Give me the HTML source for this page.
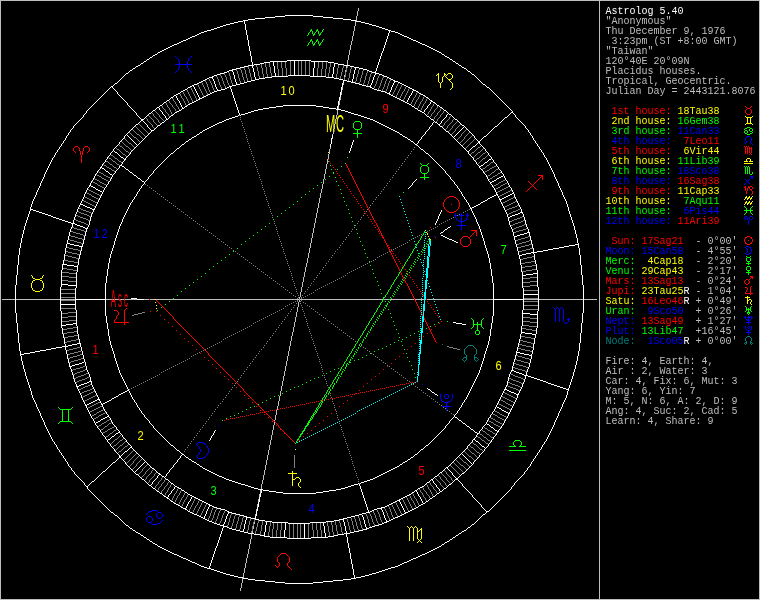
<!DOCTYPE html><html><head><meta charset="utf-8"><title>Astrolog 5.40</title><style>
html,body{margin:0;padding:0;background:#000;overflow:hidden}#w{position:relative;width:760px;height:600px;background:#000;overflow:hidden}svg{position:absolute;left:0;top:0;will-change:transform}#tx{position:absolute;left:0;top:0;width:760px;height:600px;will-change:transform}.t{position:absolute;white-space:pre;font-family:"Liberation Mono",monospace;font-size:10px;line-height:10px;height:10px;font-weight:normal;letter-spacing:0px;transform-origin:0 0;transform:scale(1,1)}
.h{font-family:"Liberation Sans",sans-serif;font-size:12.6px;text-anchor:middle}
.o{font-family:"Liberation Sans",sans-serif;text-anchor:middle}
</style></head><body><div id="w">
<svg width="760" height="600" viewBox="0 0 760 600">
<path transform="translate(0,.5)" fill="none" stroke="#007f7f" stroke-width="1" d="M747 336h3M746 337h1M750 337h1M745 338h1M751 338h1M745 339h1M751 339h1M745 340h1M751 340h1M746 341h1M750 341h1M745 342h2M750 342h2M744 343h1M746 343h1M750 343h1M752 343h1M442 344h1M745 344h1M751 344h1M468 345h5M467 346h1M473 346h1M466 347h1M474 347h1M465 348h1M475 348h1M464 349h1M476 349h1M464 350h1M476 350h1M464 351h1M476 351h1M464 352h1M476 352h1M464 353h1M476 353h1M465 354h1M475 354h1M466 355h1M474 355h1M466 356h1M474 356h1M464 357h3M474 357h3M463 358h1M466 358h1M474 358h1M477 358h1M462 359h1M466 359h1M474 359h1M478 359h1M463 360h1M465 360h1M475 360h1M477 360h1M464 361h1M476 361h1"/>
<path transform="translate(0,.5)" fill="none" stroke="#bfbfbf" stroke-width="1" d="M0 0h760M0 1h1M599 1h1M759 1h1M0 2h1M599 2h1M759 2h1M0 3h1M599 3h1M759 3h1M0 4h1M599 4h1M759 4h1M0 5h1M599 5h1M759 5h1M0 6h1M599 6h1M759 6h1M0 7h1M599 7h1M759 7h1M0 8h1M358 8h1M599 8h1M759 8h1M0 9h1M358 9h1M599 9h1M759 9h1M0 10h1M358 10h1M599 10h1M759 10h1M0 11h1M357 11h1M599 11h1M759 11h1M0 12h1M357 12h1M599 12h1M759 12h1M0 13h1M357 13h1M599 13h1M759 13h1M0 14h1M357 14h1M599 14h1M759 14h1M0 15h1M357 15h1M599 15h1M759 15h1M0 16h1M356 16h1M599 16h1M759 16h1M0 17h1M356 17h1M599 17h1M759 17h1M0 18h1M356 18h1M599 18h1M759 18h1M0 19h1M356 19h1M599 19h1M759 19h1M0 20h1M356 20h1M599 20h1M759 20h1M0 21h1M355 21h1M599 21h1M759 21h1M0 22h1M355 22h1M599 22h1M759 22h1M0 23h1M355 23h1M599 23h1M759 23h1M0 24h1M355 24h1M599 24h1M759 24h1M0 25h1M355 25h1M599 25h1M759 25h1M0 26h1M354 26h1M599 26h1M759 26h1M0 27h1M354 27h1M599 27h1M759 27h1M0 28h1M354 28h1M599 28h1M759 28h1M0 29h1M354 29h1M599 29h1M759 29h1M0 30h1M354 30h1M599 30h1M759 30h1M0 31h1M353 31h1M599 31h1M759 31h1M0 32h1M353 32h1M599 32h1M759 32h1M0 33h1M353 33h1M599 33h1M759 33h1M0 34h1M353 34h1M599 34h1M759 34h1M0 35h1M353 35h1M599 35h1M759 35h1M0 36h1M352 36h1M599 36h1M759 36h1M0 37h1M352 37h1M599 37h1M759 37h1M0 38h1M352 38h1M599 38h1M759 38h1M0 39h1M352 39h1M599 39h1M759 39h1M0 40h1M352 40h1M599 40h1M759 40h1M0 41h1M351 41h1M599 41h1M759 41h1M0 42h1M351 42h1M599 42h1M759 42h1M0 43h1M351 43h1M599 43h1M759 43h1M0 44h1M351 44h1M599 44h1M759 44h1M0 45h1M350 45h1M599 45h1M759 45h1M0 46h1M350 46h1M599 46h1M759 46h1M0 47h1M350 47h1M599 47h1M759 47h1M0 48h1M350 48h1M599 48h1M759 48h1M0 49h1M350 49h1M599 49h1M759 49h1M0 50h1M349 50h1M599 50h1M759 50h1M0 51h1M349 51h1M599 51h1M759 51h1M0 52h1M349 52h1M599 52h1M759 52h1M0 53h1M349 53h1M599 53h1M759 53h1M0 54h1M349 54h1M599 54h1M759 54h1M0 55h1M348 55h1M599 55h1M759 55h1M0 56h1M348 56h1M599 56h1M759 56h1M0 57h1M348 57h1M599 57h1M759 57h1M0 58h1M348 58h1M599 58h1M759 58h1M0 59h1M348 59h1M599 59h1M759 59h1M0 60h1M347 60h1M599 60h1M759 60h1M0 61h1M347 61h1M599 61h1M759 61h1M0 62h1M347 62h1M599 62h1M759 62h1M0 63h1M347 63h1M599 63h1M759 63h1M0 64h1M347 64h1M599 64h1M759 64h1M0 65h1M599 65h1M759 65h1M0 66h1M346 66h1M599 66h1M759 66h1M0 67h1M346 67h1M599 67h1M759 67h1M0 68h1M599 68h1M759 68h1M0 69h1M599 69h1M759 69h1M0 70h1M345 70h1M599 70h1M759 70h1M0 71h1M345 71h1M599 71h1M759 71h1M0 72h1M599 72h1M759 72h1M0 73h1M599 73h1M759 73h1M0 74h1M599 74h1M759 74h1M0 75h1M344 75h1M599 75h1M759 75h1M0 76h1M344 76h1M599 76h1M759 76h1M0 77h1M599 77h1M759 77h1M0 78h1M599 78h1M759 78h1M0 79h1M599 79h1M759 79h1M0 80h1M599 80h1M759 80h1M0 81h1M599 81h1M759 81h1M0 82h1M599 82h1M759 82h1M0 83h1M343 83h1M599 83h1M759 83h1M0 84h1M343 84h1M599 84h1M759 84h1M0 85h1M599 85h1M759 85h1M0 86h1M599 86h1M759 86h1M0 87h1M342 87h1M599 87h1M759 87h1M0 88h1M342 88h1M599 88h1M759 88h1M0 89h1M342 89h1M599 89h1M759 89h1M0 90h1M599 90h1M759 90h1M0 91h1M599 91h1M759 91h1M0 92h1M341 92h1M599 92h1M759 92h1M0 93h1M341 93h1M599 93h1M759 93h1M0 94h1M341 94h1M599 94h1M759 94h1M0 95h1M599 95h1M759 95h1M0 96h1M599 96h1M759 96h1M0 97h1M340 97h1M599 97h1M759 97h1M0 98h1M340 98h1M599 98h1M759 98h1M0 99h1M340 99h1M599 99h1M759 99h1M0 100h1M599 100h1M759 100h1M0 101h1M339 101h1M599 101h1M759 101h1M0 102h1M339 102h1M599 102h1M759 102h1M0 103h1M339 103h1M599 103h1M759 103h1M0 104h1M339 104h1M599 104h1M759 104h1M0 105h1M599 105h1M759 105h1M0 106h1M338 106h1M599 106h1M759 106h1M0 107h1M338 107h1M599 107h1M759 107h1M0 108h1M338 108h1M599 108h1M759 108h1M0 109h1M599 109h1M759 109h1M0 110h1M337 110h1M599 110h1M759 110h1M0 111h1M337 111h1M599 111h1M759 111h1M0 112h1M337 112h1M599 112h1M759 112h1M0 113h1M337 113h1M599 113h1M759 113h1M0 114h1M337 114h1M599 114h1M759 114h1M0 115h1M336 115h1M599 115h1M759 115h1M0 116h1M336 116h1M599 116h1M759 116h1M0 117h1M336 117h1M599 117h1M759 117h1M0 118h1M336 118h1M599 118h1M759 118h1M0 119h1M335 119h1M599 119h1M759 119h1M0 120h1M335 120h1M599 120h1M759 120h1M0 121h1M335 121h1M599 121h1M759 121h1M0 122h1M335 122h1M599 122h1M759 122h1M0 123h1M335 123h1M599 123h1M759 123h1M0 124h1M334 124h1M599 124h1M759 124h1M0 125h1M334 125h1M599 125h1M759 125h1M0 126h1M334 126h1M599 126h1M759 126h1M0 127h1M334 127h1M599 127h1M759 127h1M0 128h1M334 128h1M599 128h1M759 128h1M0 129h1M333 129h1M599 129h1M759 129h1M0 130h1M333 130h1M599 130h1M759 130h1M0 131h1M333 131h1M599 131h1M759 131h1M0 132h1M333 132h1M599 132h1M759 132h1M0 133h1M333 133h1M599 133h1M759 133h1M0 134h1M332 134h1M599 134h1M759 134h1M0 135h1M599 135h1M759 135h1M0 136h1M599 136h1M759 136h1M0 137h1M599 137h1M759 137h1M0 138h1M332 138h1M599 138h1M759 138h1M0 139h1M599 139h1M759 139h1M0 140h1M599 140h1M759 140h1M0 141h1M599 141h1M759 141h1M0 142h1M599 142h1M759 142h1M0 143h1M599 143h1M759 143h1M0 144h1M599 144h1M759 144h1M0 145h1M599 145h1M759 145h1M0 146h1M599 146h1M759 146h1M0 147h1M330 147h1M599 147h1M759 147h1M0 148h1M330 148h1M599 148h1M759 148h1M0 149h1M329 149h1M599 149h1M759 149h1M0 150h1M329 150h1M599 150h1M759 150h1M0 151h1M329 151h1M599 151h1M759 151h1M0 152h1M329 152h1M599 152h1M759 152h1M0 153h1M329 153h1M599 153h1M759 153h1M0 154h1M328 154h1M599 154h1M759 154h1M0 155h1M328 155h1M599 155h1M759 155h1M0 156h1M328 156h1M599 156h1M759 156h1M0 157h1M328 157h1M599 157h1M759 157h1M0 158h1M328 158h1M599 158h1M759 158h1M0 159h1M327 159h1M599 159h1M759 159h1M0 160h1M327 160h1M599 160h1M759 160h1M0 161h1M327 161h1M599 161h1M759 161h1M0 162h1M327 162h1M599 162h1M759 162h1M0 163h1M327 163h1M599 163h1M759 163h1M0 164h1M326 164h1M599 164h1M759 164h1M0 165h1M326 165h1M599 165h1M759 165h1M0 166h1M326 166h1M599 166h1M759 166h1M0 167h1M326 167h1M599 167h1M759 167h1M0 168h1M326 168h1M599 168h1M759 168h1M0 169h1M325 169h1M599 169h1M759 169h1M0 170h1M325 170h1M599 170h1M759 170h1M0 171h1M325 171h1M599 171h1M759 171h1M0 172h1M325 172h1M599 172h1M759 172h1M0 173h1M325 173h1M599 173h1M759 173h1M0 174h1M324 174h1M599 174h1M759 174h1M0 175h1M324 175h1M599 175h1M759 175h1M0 176h1M324 176h1M599 176h1M759 176h1M0 177h1M324 177h1M599 177h1M759 177h1M0 178h1M324 178h1M599 178h1M759 178h1M0 179h1M323 179h1M599 179h1M759 179h1M0 180h1M323 180h1M599 180h1M759 180h1M0 181h1M323 181h1M599 181h1M759 181h1M0 182h1M323 182h1M599 182h1M759 182h1M0 183h1M323 183h1M599 183h1M759 183h1M0 184h1M322 184h1M599 184h1M759 184h1M0 185h1M322 185h1M599 185h1M759 185h1M0 186h1M322 186h1M599 186h1M759 186h1M0 187h1M322 187h1M599 187h1M759 187h1M0 188h1M322 188h1M599 188h1M759 188h1M0 189h1M321 189h1M599 189h1M759 189h1M0 190h1M321 190h1M599 190h1M759 190h1M0 191h1M321 191h1M599 191h1M759 191h1M0 192h1M321 192h1M599 192h1M759 192h1M0 193h1M320 193h1M599 193h1M759 193h1M0 194h1M320 194h1M599 194h1M759 194h1M0 195h1M320 195h1M599 195h1M759 195h1M0 196h1M320 196h1M599 196h1M759 196h1M0 197h1M320 197h1M599 197h1M759 197h1M0 198h1M319 198h1M599 198h1M759 198h1M0 199h1M319 199h1M599 199h1M759 199h1M0 200h1M319 200h1M599 200h1M759 200h1M0 201h1M319 201h1M599 201h1M759 201h1M0 202h1M319 202h1M599 202h1M759 202h1M0 203h1M318 203h1M599 203h1M759 203h1M0 204h1M318 204h1M599 204h1M759 204h1M0 205h1M318 205h1M599 205h1M759 205h1M0 206h1M318 206h1M599 206h1M759 206h1M0 207h1M318 207h1M599 207h1M759 207h1M0 208h1M317 208h1M599 208h1M759 208h1M0 209h1M317 209h1M599 209h1M759 209h1M0 210h1M317 210h1M599 210h1M759 210h1M0 211h1M317 211h1M599 211h1M759 211h1M0 212h1M317 212h1M599 212h1M759 212h1M0 213h1M316 213h1M599 213h1M759 213h1M0 214h1M316 214h1M599 214h1M759 214h1M0 215h1M316 215h1M599 215h1M759 215h1M0 216h1M316 216h1M599 216h1M759 216h1M0 217h1M316 217h1M599 217h1M759 217h1M0 218h1M315 218h1M599 218h1M759 218h1M0 219h1M315 219h1M599 219h1M759 219h1M0 220h1M315 220h1M599 220h1M759 220h1M0 221h1M315 221h1M599 221h1M759 221h1M0 222h1M315 222h1M599 222h1M759 222h1M0 223h1M314 223h1M599 223h1M759 223h1M0 224h1M314 224h1M599 224h1M759 224h1M0 225h1M314 225h1M599 225h1M759 225h1M0 226h1M314 226h1M599 226h1M759 226h1M0 227h1M314 227h1M599 227h1M759 227h1M0 228h1M313 228h1M599 228h1M759 228h1M0 229h1M313 229h1M599 229h1M759 229h1M0 230h1M313 230h1M599 230h1M759 230h1M0 231h1M313 231h1M599 231h1M759 231h1M0 232h1M313 232h1M599 232h1M759 232h1M0 233h1M312 233h1M599 233h1M759 233h1M0 234h1M312 234h1M599 234h1M759 234h1M0 235h1M312 235h1M599 235h1M759 235h1M0 236h1M312 236h1M599 236h1M759 236h1M0 237h1M312 237h1M599 237h1M759 237h1M0 238h1M311 238h1M599 238h1M759 238h1M0 239h1M311 239h1M599 239h1M759 239h1M0 240h1M311 240h1M599 240h1M759 240h1M0 241h1M311 241h1M599 241h1M759 241h1M0 242h1M311 242h1M599 242h1M759 242h1M0 243h1M310 243h1M599 243h1M759 243h1M0 244h1M310 244h1M599 244h1M759 244h1M0 245h1M310 245h1M599 245h1M759 245h1M0 246h1M310 246h1M599 246h1M759 246h1M0 247h1M310 247h1M599 247h1M759 247h1M0 248h1M309 248h1M599 248h1M759 248h1M0 249h1M309 249h1M599 249h1M759 249h1M0 250h1M309 250h1M599 250h1M759 250h1M0 251h1M309 251h1M599 251h1M759 251h1M0 252h1M309 252h1M599 252h1M759 252h1M0 253h1M308 253h1M599 253h1M759 253h1M0 254h1M308 254h1M599 254h1M759 254h1M0 255h1M308 255h1M599 255h1M759 255h1M0 256h1M308 256h1M599 256h1M759 256h1M0 257h1M308 257h1M599 257h1M759 257h1M0 258h1M307 258h1M599 258h1M759 258h1M0 259h1M307 259h1M599 259h1M759 259h1M0 260h1M307 260h1M599 260h1M759 260h1M0 261h1M307 261h1M599 261h1M759 261h1M0 262h1M307 262h1M599 262h1M759 262h1M0 263h1M306 263h1M599 263h1M759 263h1M0 264h1M306 264h1M599 264h1M759 264h1M0 265h1M306 265h1M599 265h1M759 265h1M0 266h1M306 266h1M599 266h1M759 266h1M0 267h1M305 267h1M599 267h1M759 267h1M0 268h1M305 268h1M599 268h1M759 268h1M0 269h1M305 269h1M599 269h1M759 269h1M0 270h1M305 270h1M599 270h1M759 270h1M0 271h1M305 271h1M599 271h1M759 271h1M0 272h1M304 272h1M599 272h1M759 272h1M0 273h1M304 273h1M599 273h1M759 273h1M0 274h1M304 274h1M599 274h1M759 274h1M0 275h1M304 275h1M599 275h1M759 275h1M0 276h1M304 276h1M599 276h1M759 276h1M0 277h1M303 277h1M599 277h1M759 277h1M0 278h1M303 278h1M599 278h1M759 278h1M0 279h1M303 279h1M599 279h1M759 279h1M0 280h1M303 280h1M599 280h1M759 280h1M0 281h1M303 281h1M599 281h1M759 281h1M0 282h1M302 282h1M599 282h1M759 282h1M0 283h1M302 283h1M599 283h1M759 283h1M0 284h1M302 284h1M599 284h1M759 284h1M0 285h1M302 285h1M599 285h1M759 285h1M0 286h1M302 286h1M599 286h1M759 286h1M0 287h1M301 287h1M599 287h1M759 287h1M0 288h1M301 288h1M599 288h1M759 288h1M0 289h1M301 289h1M599 289h1M759 289h1M0 290h1M301 290h1M599 290h1M759 290h1M0 291h1M301 291h1M599 291h1M759 291h1M0 292h1M300 292h1M599 292h1M759 292h1M0 293h1M300 293h1M599 293h1M759 293h1M0 294h1M300 294h1M599 294h1M759 294h1M0 295h1M300 295h1M599 295h1M759 295h1M0 296h1M300 296h1M599 296h1M759 296h1M0 297h1M299 297h1M599 297h1M759 297h1M0 298h1M299 298h1M599 298h1M759 298h1M0 299h1M2 299h13M16 299h44M61 299h14M106 299h31M144 299h5M150 299h5M156 299h143M300 299h83M384 299h5M390 299h24M415 299h9M427 299h66M524 299h14M539 299h44M584 299h13M599 299h1M759 299h1M0 300h1M299 300h1M599 300h1M759 300h1M0 301h1M299 301h1M599 301h1M759 301h1M0 302h1M298 302h1M599 302h1M759 302h1M0 303h1M298 303h1M599 303h1M759 303h1M0 304h1M298 304h1M599 304h1M759 304h1M0 305h1M298 305h1M599 305h1M759 305h1M0 306h1M298 306h1M599 306h1M759 306h1M0 307h1M297 307h1M599 307h1M759 307h1M0 308h1M297 308h1M599 308h1M759 308h1M0 309h1M297 309h1M599 309h1M759 309h1M0 310h1M297 310h1M599 310h1M759 310h1M0 311h1M297 311h1M599 311h1M759 311h1M0 312h1M296 312h1M599 312h1M759 312h1M0 313h1M296 313h1M599 313h1M759 313h1M0 314h1M296 314h1M599 314h1M759 314h1M0 315h1M296 315h1M599 315h1M759 315h1M0 316h1M296 316h1M599 316h1M759 316h1M0 317h1M295 317h1M599 317h1M759 317h1M0 318h1M295 318h1M599 318h1M759 318h1M0 319h1M295 319h1M599 319h1M759 319h1M0 320h1M295 320h1M599 320h1M759 320h1M0 321h1M295 321h1M599 321h1M759 321h1M0 322h1M294 322h1M599 322h1M759 322h1M0 323h1M294 323h1M599 323h1M759 323h1M0 324h1M294 324h1M599 324h1M759 324h1M0 325h1M294 325h1M599 325h1M759 325h1M0 326h1M294 326h1M599 326h1M759 326h1M0 327h1M293 327h1M599 327h1M759 327h1M0 328h1M293 328h1M599 328h1M759 328h1M0 329h1M293 329h1M599 329h1M759 329h1M0 330h1M293 330h1M599 330h1M759 330h1M0 331h1M293 331h1M599 331h1M759 331h1M0 332h1M292 332h1M599 332h1M759 332h1M0 333h1M292 333h1M599 333h1M759 333h1M0 334h1M292 334h1M599 334h1M759 334h1M0 335h1M292 335h1M599 335h1M759 335h1M0 336h1M291 336h1M599 336h1M759 336h1M0 337h1M291 337h1M599 337h1M759 337h1M0 338h1M291 338h1M599 338h1M759 338h1M0 339h1M291 339h1M599 339h1M759 339h1M0 340h1M291 340h1M599 340h1M759 340h1M0 341h1M290 341h1M599 341h1M759 341h1M0 342h1M290 342h1M599 342h1M759 342h1M0 343h1M290 343h1M599 343h1M759 343h1M0 344h1M290 344h1M599 344h1M759 344h1M0 345h1M290 345h1M599 345h1M759 345h1M0 346h1M289 346h1M599 346h1M759 346h1M0 347h1M289 347h1M599 347h1M759 347h1M0 348h1M289 348h1M599 348h1M759 348h1M0 349h1M289 349h1M599 349h1M759 349h1M0 350h1M289 350h1M599 350h1M759 350h1M0 351h1M288 351h1M599 351h1M759 351h1M0 352h1M288 352h1M599 352h1M759 352h1M0 353h1M288 353h1M599 353h1M759 353h1M0 354h1M288 354h1M599 354h1M759 354h1M0 355h1M288 355h1M599 355h1M759 355h1M0 356h1M287 356h1M599 356h1M759 356h1M0 357h1M287 357h1M599 357h1M759 357h1M0 358h1M287 358h1M599 358h1M759 358h1M0 359h1M287 359h1M599 359h1M759 359h1M0 360h1M287 360h1M599 360h1M759 360h1M0 361h1M286 361h1M599 361h1M759 361h1M0 362h1M286 362h1M599 362h1M759 362h1M0 363h1M286 363h1M599 363h1M759 363h1M0 364h1M286 364h1M599 364h1M759 364h1M0 365h1M286 365h1M599 365h1M759 365h1M0 366h1M285 366h1M599 366h1M759 366h1M0 367h1M285 367h1M599 367h1M759 367h1M0 368h1M285 368h1M599 368h1M759 368h1M0 369h1M285 369h1M599 369h1M759 369h1M0 370h1M285 370h1M599 370h1M759 370h1M0 371h1M284 371h1M599 371h1M759 371h1M0 372h1M284 372h1M599 372h1M759 372h1M0 373h1M284 373h1M599 373h1M759 373h1M0 374h1M284 374h1M599 374h1M759 374h1M0 375h1M284 375h1M599 375h1M759 375h1M0 376h1M283 376h1M599 376h1M759 376h1M0 377h1M283 377h1M599 377h1M759 377h1M0 378h1M283 378h1M599 378h1M759 378h1M0 379h1M283 379h1M599 379h1M759 379h1M0 380h1M283 380h1M599 380h1M759 380h1M0 381h1M282 381h1M599 381h1M759 381h1M0 382h1M282 382h1M599 382h1M759 382h1M0 383h1M282 383h1M599 383h1M759 383h1M0 384h1M282 384h1M599 384h1M759 384h1M0 385h1M282 385h1M599 385h1M759 385h1M0 386h1M281 386h1M599 386h1M759 386h1M0 387h1M281 387h1M599 387h1M759 387h1M0 388h1M281 388h1M599 388h1M759 388h1M0 389h1M281 389h1M599 389h1M759 389h1M0 390h1M281 390h1M599 390h1M759 390h1M0 391h1M280 391h1M599 391h1M759 391h1M0 392h1M280 392h1M599 392h1M759 392h1M0 393h1M280 393h1M599 393h1M759 393h1M0 394h1M280 394h1M599 394h1M759 394h1M0 395h1M280 395h1M599 395h1M759 395h1M0 396h1M279 396h1M599 396h1M759 396h1M0 397h1M279 397h1M599 397h1M759 397h1M0 398h1M279 398h1M599 398h1M759 398h1M0 399h1M279 399h1M599 399h1M759 399h1M0 400h1M279 400h1M599 400h1M759 400h1M0 401h1M278 401h1M599 401h1M759 401h1M0 402h1M278 402h1M599 402h1M759 402h1M0 403h1M278 403h1M599 403h1M759 403h1M0 404h1M278 404h1M599 404h1M759 404h1M0 405h1M278 405h1M599 405h1M759 405h1M0 406h1M277 406h1M599 406h1M759 406h1M0 407h1M277 407h1M599 407h1M759 407h1M0 408h1M277 408h1M599 408h1M759 408h1M0 409h1M277 409h1M599 409h1M759 409h1M0 410h1M276 410h1M599 410h1M759 410h1M0 411h1M276 411h1M599 411h1M759 411h1M0 412h1M276 412h1M599 412h1M759 412h1M0 413h1M276 413h1M599 413h1M759 413h1M0 414h1M276 414h1M599 414h1M759 414h1M0 415h1M275 415h1M599 415h1M759 415h1M0 416h1M275 416h1M599 416h1M759 416h1M0 417h1M275 417h1M599 417h1M759 417h1M0 418h1M275 418h1M599 418h1M759 418h1M0 419h1M275 419h1M599 419h1M759 419h1M0 420h1M274 420h1M599 420h1M759 420h1M0 421h1M599 421h1M759 421h1M0 422h1M274 422h1M599 422h1M759 422h1M0 423h1M274 423h1M599 423h1M759 423h1M0 424h1M274 424h1M599 424h1M759 424h1M0 425h1M273 425h1M599 425h1M759 425h1M0 426h1M273 426h1M599 426h1M759 426h1M0 427h1M273 427h1M599 427h1M759 427h1M0 428h1M273 428h1M599 428h1M759 428h1M0 429h1M273 429h1M599 429h1M759 429h1M0 430h1M272 430h1M599 430h1M759 430h1M0 431h1M272 431h1M599 431h1M759 431h1M0 432h1M272 432h1M599 432h1M759 432h1M0 433h1M272 433h1M599 433h1M759 433h1M0 434h1M272 434h1M599 434h1M759 434h1M0 435h1M271 435h1M599 435h1M759 435h1M0 436h1M271 436h1M599 436h1M759 436h1M0 437h1M271 437h1M599 437h1M759 437h1M0 438h1M271 438h1M599 438h1M759 438h1M0 439h1M271 439h1M599 439h1M759 439h1M0 440h1M270 440h1M599 440h1M759 440h1M0 441h1M270 441h1M599 441h1M759 441h1M0 442h1M270 442h1M599 442h1M759 442h1M0 443h1M270 443h1M599 443h1M759 443h1M0 444h1M270 444h1M599 444h1M759 444h1M0 445h1M269 445h1M599 445h1M759 445h1M0 446h1M269 446h1M599 446h1M759 446h1M0 447h1M269 447h1M599 447h1M759 447h1M0 448h1M269 448h1M599 448h1M759 448h1M0 449h1M269 449h1M599 449h1M759 449h1M0 450h1M268 450h1M599 450h1M759 450h1M0 451h1M268 451h1M599 451h1M759 451h1M0 452h1M268 452h1M599 452h1M759 452h1M0 453h1M268 453h1M599 453h1M759 453h1M0 454h1M268 454h1M599 454h1M759 454h1M0 455h1M267 455h1M599 455h1M759 455h1M0 456h1M267 456h1M599 456h1M759 456h1M0 457h1M267 457h1M599 457h1M759 457h1M0 458h1M267 458h1M599 458h1M759 458h1M0 459h1M267 459h1M599 459h1M759 459h1M0 460h1M266 460h1M599 460h1M759 460h1M0 461h1M266 461h1M599 461h1M759 461h1M0 462h1M266 462h1M599 462h1M759 462h1M0 463h1M266 463h1M599 463h1M759 463h1M0 464h1M266 464h1M599 464h1M759 464h1M0 465h1M265 465h1M599 465h1M759 465h1M0 466h1M265 466h1M599 466h1M759 466h1M0 467h1M265 467h1M599 467h1M759 467h1M0 468h1M265 468h1M599 468h1M759 468h1M0 469h1M265 469h1M599 469h1M759 469h1M0 470h1M264 470h1M599 470h1M759 470h1M0 471h1M264 471h1M599 471h1M759 471h1M0 472h1M264 472h1M599 472h1M759 472h1M0 473h1M264 473h1M599 473h1M759 473h1M0 474h1M264 474h1M599 474h1M759 474h1M0 475h1M263 475h1M599 475h1M759 475h1M0 476h1M263 476h1M599 476h1M759 476h1M0 477h1M263 477h1M599 477h1M759 477h1M0 478h1M263 478h1M599 478h1M759 478h1M0 479h1M263 479h1M599 479h1M759 479h1M0 480h1M262 480h1M599 480h1M759 480h1M0 481h1M262 481h1M599 481h1M759 481h1M0 482h1M262 482h1M599 482h1M759 482h1M0 483h1M262 483h1M599 483h1M759 483h1M0 484h1M261 484h1M599 484h1M759 484h1M0 485h1M261 485h1M599 485h1M759 485h1M0 486h1M261 486h1M599 486h1M759 486h1M0 487h1M261 487h1M599 487h1M759 487h1M0 488h1M261 488h1M599 488h1M759 488h1M0 489h1M599 489h1M759 489h1M0 490h1M260 490h1M599 490h1M759 490h1M0 491h1M260 491h1M599 491h1M759 491h1M0 492h1M260 492h1M599 492h1M759 492h1M0 493h1M599 493h1M759 493h1M0 494h1M259 494h1M599 494h1M759 494h1M0 495h1M259 495h1M599 495h1M759 495h1M0 496h1M259 496h1M599 496h1M759 496h1M0 497h1M599 497h1M759 497h1M0 498h1M599 498h1M759 498h1M0 499h1M258 499h1M599 499h1M759 499h1M0 500h1M258 500h1M599 500h1M759 500h1M0 501h1M258 501h1M599 501h1M759 501h1M0 502h1M599 502h1M759 502h1M0 503h1M599 503h1M759 503h1M0 504h1M257 504h1M599 504h1M759 504h1M0 505h1M257 505h1M599 505h1M759 505h1M0 506h1M257 506h1M599 506h1M759 506h1M0 507h1M599 507h1M759 507h1M0 508h1M599 508h1M759 508h1M0 509h1M256 509h1M599 509h1M759 509h1M0 510h1M256 510h1M599 510h1M759 510h1M0 511h1M599 511h1M759 511h1M0 512h1M599 512h1M759 512h1M0 513h1M599 513h1M759 513h1M0 514h1M255 514h1M599 514h1M759 514h1M0 515h1M255 515h1M599 515h1M759 515h1M0 516h1M599 516h1M759 516h1M0 517h1M599 517h1M759 517h1M0 518h1M599 518h1M759 518h1M0 519h1M599 519h1M759 519h1M0 520h1M599 520h1M759 520h1M0 521h1M599 521h1M759 521h1M0 522h1M254 522h1M599 522h1M759 522h1M0 523h1M254 523h1M599 523h1M759 523h1M0 524h1M599 524h1M759 524h1M0 525h1M599 525h1M759 525h1M0 526h1M253 526h1M599 526h1M759 526h1M0 527h1M253 527h1M599 527h1M759 527h1M0 528h1M253 528h1M599 528h1M759 528h1M0 529h1M599 529h1M759 529h1M0 530h1M599 530h1M759 530h1M0 531h1M252 531h1M599 531h1M759 531h1M0 532h1M252 532h1M599 532h1M759 532h1M0 533h1M599 533h1M759 533h1M0 534h1M251 534h1M599 534h1M759 534h1M0 535h1M251 535h1M599 535h1M759 535h1M0 536h1M251 536h1M599 536h1M759 536h1M0 537h1M251 537h1M599 537h1M759 537h1M0 538h1M251 538h1M599 538h1M759 538h1M0 539h1M250 539h1M599 539h1M759 539h1M0 540h1M250 540h1M599 540h1M759 540h1M0 541h1M250 541h1M599 541h1M759 541h1M0 542h1M250 542h1M599 542h1M759 542h1M0 543h1M250 543h1M599 543h1M759 543h1M0 544h1M249 544h1M599 544h1M759 544h1M0 545h1M249 545h1M599 545h1M759 545h1M0 546h1M249 546h1M599 546h1M759 546h1M0 547h1M249 547h1M599 547h1M759 547h1M0 548h1M249 548h1M599 548h1M759 548h1M0 549h1M248 549h1M599 549h1M759 549h1M0 550h1M248 550h1M599 550h1M759 550h1M0 551h1M248 551h1M599 551h1M759 551h1M0 552h1M248 552h1M599 552h1M759 552h1M0 553h1M248 553h1M599 553h1M759 553h1M0 554h1M247 554h1M599 554h1M759 554h1M0 555h1M247 555h1M599 555h1M759 555h1M0 556h1M247 556h1M599 556h1M759 556h1M0 557h1M247 557h1M599 557h1M759 557h1M0 558h1M246 558h1M599 558h1M759 558h1M0 559h1M246 559h1M599 559h1M759 559h1M0 560h1M246 560h1M599 560h1M759 560h1M0 561h1M246 561h1M599 561h1M759 561h1M0 562h1M246 562h1M599 562h1M759 562h1M0 563h1M245 563h1M599 563h1M759 563h1M0 564h1M245 564h1M599 564h1M759 564h1M0 565h1M245 565h1M599 565h1M759 565h1M0 566h1M245 566h1M599 566h1M759 566h1M0 567h1M245 567h1M599 567h1M759 567h1M0 568h1M244 568h1M599 568h1M759 568h1M0 569h1M244 569h1M599 569h1M759 569h1M0 570h1M244 570h1M599 570h1M759 570h1M0 571h1M244 571h1M599 571h1M759 571h1M0 572h1M244 572h1M599 572h1M759 572h1M0 573h1M243 573h1M599 573h1M759 573h1M0 574h1M243 574h1M599 574h1M759 574h1M0 575h1M243 575h1M599 575h1M759 575h1M0 576h1M243 576h1M599 576h1M759 576h1M0 577h1M243 577h1M599 577h1M759 577h1M0 578h1M242 578h1M599 578h1M759 578h1M0 579h1M242 579h1M599 579h1M759 579h1M0 580h1M242 580h1M599 580h1M759 580h1M0 581h1M242 581h1M599 581h1M759 581h1M0 582h1M242 582h1M599 582h1M759 582h1M0 583h1M241 583h1M599 583h1M759 583h1M0 584h1M241 584h1M599 584h1M759 584h1M0 585h1M241 585h1M599 585h1M759 585h1M0 586h1M241 586h1M599 586h1M759 586h1M0 587h1M241 587h1M599 587h1M759 587h1M0 588h1M240 588h1M599 588h1M759 588h1M0 589h1M240 589h1M599 589h1M759 589h1M0 590h1M240 590h1M599 590h1M759 590h1M0 591h1M599 591h1M759 591h1M0 592h1M599 592h1M759 592h1M0 593h1M599 593h1M759 593h1M0 594h1M599 594h1M759 594h1M0 595h1M599 595h1M759 595h1M0 596h1M599 596h1M759 596h1M0 597h1M599 597h1M759 597h1M0 598h1M599 598h1M759 598h1M0 599h760"/>
<path transform="translate(0,.5)" fill="none" stroke="#7f7f7f" stroke-width="1" d="M290 61h1M298 61h1M301 61h1M305 61h1M309 61h1M277 62h1M281 62h1M285 62h1M290 62h1M298 62h1M301 62h1M305 62h1M309 62h1M318 62h1M322 62h1M326 62h1M265 63h1M269 63h1M277 63h1M281 63h1M285 63h1M290 63h1M298 63h1M301 63h1M305 63h1M309 63h1M318 63h1M322 63h1M326 63h1M330 63h1M261 64h1M265 64h1M269 64h1M277 64h1M281 64h1M285 64h1M290 64h1M298 64h1M301 64h1M305 64h1M309 64h1M318 64h1M322 64h1M326 64h1M330 64h1M256 65h1M261 65h1M265 65h1M269 65h1M277 65h1M281 65h1M285 65h1M290 65h1M298 65h1M301 65h1M305 65h1M309 65h1M318 65h1M322 65h1M326 65h1M330 65h1M338 65h1M343 65h1M248 66h1M256 66h1M261 66h1M265 66h1M269 66h1M277 66h1M281 66h1M285 66h1M290 66h1M298 66h1M301 66h1M305 66h1M309 66h1M318 66h1M322 66h1M326 66h1M330 66h1M338 66h1M343 66h1M347 66h1M244 67h1M248 67h1M257 67h1M261 67h1M266 67h1M270 67h1M277 67h1M281 67h1M285 67h1M290 67h1M298 67h1M301 67h1M305 67h1M309 67h1M318 67h1M322 67h1M326 67h1M329 67h1M338 67h1M343 67h1M347 67h1M351 67h1M240 68h1M244 68h1M248 68h1M257 68h1M262 68h1M266 68h1M270 68h1M277 68h1M282 68h1M286 68h1M290 68h1M298 68h1M301 68h1M305 68h1M309 68h1M317 68h1M322 68h1M326 68h1M329 68h1M337 68h1M342 68h1M346 68h1M351 68h1M236 69h1M240 69h1M244 69h1M249 69h1M257 69h1M262 69h1M266 69h1M270 69h1M278 69h1M282 69h1M286 69h1M290 69h1M298 69h1M301 69h1M305 69h1M309 69h1M317 69h1M321 69h1M325 69h1M329 69h1M337 69h1M342 69h1M346 69h1M350 69h1M359 69h1M236 70h1M241 70h1M245 70h1M249 70h1M257 70h1M262 70h1M266 70h1M270 70h1M278 70h1M282 70h1M286 70h1M290 70h1M298 70h1M301 70h1M305 70h1M309 70h1M317 70h1M321 70h1M325 70h1M329 70h1M337 70h1M342 70h1M346 70h1M350 70h1M358 70h1M363 70h1M237 71h1M241 71h1M245 71h1M249 71h1M258 71h1M262 71h1M266 71h1M270 71h1M278 71h1M282 71h1M286 71h1M290 71h1M298 71h1M301 71h1M305 71h1M309 71h1M317 71h1M321 71h1M325 71h1M329 71h1M337 71h1M342 71h1M346 71h1M350 71h1M358 71h1M362 71h1M367 71h1M228 72h1M237 72h1M241 72h1M245 72h1M249 72h1M258 72h1M262 72h1M266 72h1M270 72h1M278 72h1M282 72h1M286 72h1M290 72h1M298 72h1M301 72h1M305 72h1M309 72h1M317 72h1M321 72h1M325 72h1M329 72h1M337 72h1M341 72h1M345 72h1M350 72h1M358 72h1M362 72h1M367 72h1M371 72h1M224 73h1M229 73h1M237 73h1M242 73h1M245 73h1M250 73h1M258 73h1M262 73h1M266 73h1M271 73h1M278 73h1M282 73h1M286 73h1M290 73h1M298 73h1M301 73h1M305 73h1M309 73h1M317 73h1M321 73h1M325 73h1M328 73h1M337 73h1M341 73h1M345 73h1M349 73h1M358 73h1M362 73h1M366 73h1M371 73h1M220 74h1M224 74h1M229 74h1M238 74h1M242 74h1M246 74h1M250 74h1M258 74h1M263 74h1M267 74h1M271 74h1M278 74h1M282 74h1M286 74h1M290 74h1M298 74h1M301 74h1M305 74h1M309 74h1M317 74h1M321 74h1M325 74h1M328 74h1M336 74h1M341 74h1M345 74h1M349 74h1M357 74h1M362 74h1M366 74h1M370 74h1M220 75h1M225 75h1M229 75h1M238 75h1M242 75h1M246 75h1M250 75h1M258 75h1M263 75h1M267 75h1M271 75h1M278 75h1M282 75h1M286 75h1M317 75h1M321 75h1M325 75h1M328 75h1M336 75h1M341 75h1M345 75h1M349 75h1M357 75h1M361 75h1M366 75h1M370 75h1M379 75h1M216 76h1M221 76h1M225 76h1M230 76h1M238 76h1M242 76h1M246 76h1M250 76h1M259 76h1M263 76h1M267 76h1M271 76h1M328 76h1M336 76h1M340 76h1M345 76h1M349 76h1M357 76h1M361 76h1M365 76h1M370 76h1M378 76h1M383 76h1M217 77h1M221 77h1M226 77h1M230 77h1M238 77h1M243 77h1M246 77h1M251 77h1M259 77h1M263 77h1M336 77h1M340 77h1M344 77h1M349 77h1M356 77h1M361 77h1M365 77h1M369 77h1M378 77h1M383 77h1M217 78h1M222 78h1M226 78h1M230 78h1M239 78h1M243 78h1M247 78h1M251 78h1M340 78h1M344 78h1M348 78h1M356 78h1M360 78h1M365 78h1M369 78h1M377 78h1M382 78h1M387 78h1M209 79h1M218 79h1M222 79h1M226 79h1M230 79h1M239 79h1M243 79h1M247 79h1M251 79h1M344 79h1M348 79h1M356 79h1M360 79h1M365 79h1M369 79h1M377 79h1M382 79h1M386 79h1M390 79h1M205 80h1M209 80h1M218 80h1M222 80h1M227 80h1M231 80h1M239 80h1M244 80h1M247 80h1M348 80h1M356 80h1M360 80h1M364 80h1M369 80h1M377 80h1M381 80h1M386 80h1M390 80h1M205 81h1M210 81h1M218 81h1M223 81h1M227 81h1M231 81h1M240 81h1M244 81h1M355 81h1M360 81h1M364 81h1M368 81h1M376 81h1M381 81h1M385 81h1M389 81h1M201 82h1M206 82h1M210 82h1M219 82h1M223 82h1M227 82h1M231 82h1M240 82h1M355 82h1M359 82h1M364 82h1M368 82h1M376 82h1M381 82h1M385 82h1M389 82h1M202 83h1M206 83h1M211 83h1M219 83h1M223 83h1M228 83h1M232 83h1M359 83h1M363 83h1M368 83h1M376 83h1M380 83h1M385 83h1M388 83h1M398 83h1M197 84h1M202 84h1M207 84h1M211 84h1M219 84h1M224 84h1M228 84h1M232 84h1M363 84h1M367 84h1M375 84h1M380 84h1M384 84h1M388 84h1M397 84h1M198 85h1M203 85h1M207 85h1M212 85h1M220 85h1M224 85h1M229 85h1M367 85h1M375 85h1M380 85h1M384 85h1M388 85h1M397 85h1M401 85h1M198 86h1M203 86h1M207 86h1M212 86h1M220 86h1M225 86h1M374 86h1M379 86h1M384 86h1M387 86h1M396 86h1M401 86h1M190 87h1M199 87h1M204 87h1M208 87h1M212 87h1M221 87h1M225 87h1M374 87h1M379 87h1M383 87h1M387 87h1M396 87h1M400 87h1M405 87h1M191 88h1M199 88h1M204 88h1M208 88h1M213 88h1M221 88h1M378 88h1M383 88h1M387 88h1M395 88h1M400 88h1M405 88h1M409 88h1M191 89h1M200 89h1M205 89h1M208 89h1M213 89h1M378 89h1M382 89h1M386 89h1M395 89h1M399 89h1M404 89h1M408 89h1M187 90h1M192 90h1M200 90h1M205 90h1M209 90h1M214 90h1M382 90h1M386 90h1M394 90h1M399 90h1M404 90h1M408 90h1M187 91h1M192 91h1M201 91h1M206 91h1M209 91h1M385 91h1M394 91h1M398 91h1M403 91h1M407 91h1M183 92h1M188 92h1M193 92h1M201 92h1M206 92h1M210 92h1M393 92h1M398 92h1M402 92h1M407 92h1M417 92h1M183 93h1M188 93h1M193 93h1M202 93h1M207 93h1M393 93h1M397 93h1M402 93h1M406 93h1M416 93h1M180 94h1M184 94h1M189 94h1M194 94h1M202 94h1M207 94h1M392 94h1M397 94h1M401 94h1M406 94h1M416 94h1M420 94h1M180 95h1M184 95h1M189 95h1M194 95h1M203 95h1M396 95h1M401 95h1M405 95h1M415 95h1M419 95h1M181 96h1M185 96h1M190 96h1M195 96h1M203 96h1M396 96h1M400 96h1M405 96h1M415 96h1M419 96h1M424 96h1M181 97h1M186 97h1M190 97h1M195 97h1M400 97h1M404 97h1M414 97h1M418 97h1M423 97h1M172 98h1M182 98h1M186 98h1M191 98h1M196 98h1M399 98h1M404 98h1M413 98h1M418 98h1M423 98h1M427 98h1M173 99h1M183 99h1M187 99h1M191 99h1M196 99h1M403 99h1M413 99h1M417 99h1M422 99h1M426 99h1M173 100h1M183 100h1M187 100h1M192 100h1M403 100h1M412 100h1M416 100h1M422 100h1M426 100h1M169 101h1M174 101h1M184 101h1M188 101h1M192 101h1M412 101h1M416 101h1M421 101h1M425 101h1M169 102h1M175 102h1M184 102h1M188 102h1M411 102h1M415 102h1M420 102h1M425 102h1M166 103h1M170 103h1M175 103h1M185 103h1M189 103h1M411 103h1M415 103h1M420 103h1M424 103h1M434 103h1M166 104h1M171 104h1M176 104h1M185 104h1M414 104h1M419 104h1M423 104h1M433 104h1M167 105h1M172 105h1M176 105h1M186 105h1M414 105h1M419 105h1M423 105h1M433 105h1M162 106h1M167 106h1M172 106h1M177 106h1M418 106h1M422 106h1M432 106h1M437 106h1M162 107h1M168 107h1M173 107h1M178 107h1M418 107h1M422 107h1M431 107h1M437 107h1M163 108h1M169 108h1M174 108h1M178 108h1M417 108h1M421 108h1M431 108h1M436 108h1M441 108h1M164 109h1M169 109h1M175 109h1M179 109h1M421 109h1M430 109h1M435 109h1M440 109h1M165 110h1M170 110h1M175 110h1M420 110h1M430 110h1M434 110h1M440 110h1M155 111h1M165 111h1M170 111h1M176 111h1M429 111h1M434 111h1M439 111h1M443 111h1M156 112h1M166 112h1M171 112h1M428 112h1M433 112h1M438 112h1M443 112h1M152 113h1M157 113h1M167 113h1M171 113h1M428 113h1M432 113h1M437 113h1M442 113h1M153 114h1M158 114h1M168 114h1M172 114h1M427 114h1M431 114h1M437 114h1M441 114h1M148 115h1M153 115h1M159 115h1M168 115h1M239 115h1M431 115h1M436 115h1M440 115h1M149 116h1M154 116h1M159 116h1M169 116h1M430 116h1M435 116h1M440 116h1M450 116h1M150 117h1M155 117h1M160 117h1M240 117h1M434 117h1M439 117h1M449 117h1M146 118h1M151 118h1M156 118h1M161 118h1M434 118h1M438 118h1M449 118h1M147 119h1M152 119h1M157 119h1M162 119h1M240 119h1M433 119h1M437 119h1M448 119h1M453 119h1M147 120h1M153 120h1M158 120h1M163 120h1M437 120h1M447 120h1M452 120h1M148 121h1M153 121h1M158 121h1M241 121h1M436 121h1M446 121h1M452 121h1M457 121h1M149 122h1M154 122h1M159 122h1M445 122h1M451 122h1M456 122h1M150 123h1M155 123h1M160 123h1M242 123h1M444 123h1M450 123h1M455 123h1M139 124h1M151 124h1M156 124h1M444 124h1M449 124h1M454 124h1M460 124h1M140 125h1M152 125h1M157 125h1M242 125h1M443 125h1M448 125h1M453 125h1M459 125h1M135 126h1M141 126h1M152 126h1M442 126h1M447 126h1M452 126h1M458 126h1M136 127h1M142 127h1M153 127h1M243 127h1M447 127h1M452 127h1M457 127h1M137 128h1M143 128h1M154 128h1M446 128h1M451 128h1M456 128h1M132 129h1M138 129h1M144 129h1M244 129h1M445 129h1M450 129h1M455 129h1M466 129h1M133 130h1M139 130h1M145 130h1M449 130h1M455 130h1M465 130h1M134 131h1M140 131h1M146 131h1M244 131h1M448 131h1M454 131h1M464 131h1M129 132h1M135 132h1M141 132h1M147 132h1M453 132h1M463 132h1M469 132h1M130 133h1M136 133h1M142 133h1M148 133h1M245 133h1M452 133h1M462 133h1M468 133h1M131 134h1M137 134h2M143 134h1M451 134h1M461 134h1M467 134h1M132 135h1M139 135h1M144 135h1M246 135h1M461 135h1M466 135h1M472 135h1M133 136h1M140 136h1M145 136h1M460 136h1M465 136h1M471 136h1M134 137h2M141 137h1M246 137h1M459 137h1M464 137h1M470 137h1M124 138h1M136 138h1M142 138h1M458 138h1M464 138h1M469 138h1M125 139h1M137 139h1M247 139h1M457 139h1M463 139h1M468 139h1M474 139h1M126 140h1M138 140h1M462 140h1M467 140h1M473 140h1M121 141h1M127 141h1M139 141h1M247 141h1M461 141h1M466 141h1M472 141h1M122 142h1M128 142h1M460 142h1M465 142h1M471 142h1M123 143h1M129 143h2M248 143h1M464 143h1M470 143h1M124 144h1M131 144h1M463 144h1M469 144h1M119 145h1M125 145h1M132 145h1M249 145h1M416 145h1M462 145h1M468 145h1M120 146h2M126 146h2M133 146h1M467 146h1M480 146h1M122 147h1M128 147h1M134 147h1M249 147h1M414 147h1M466 147h1M478 147h2M116 148h1M123 148h1M129 148h1M465 148h1M477 148h1M483 148h1M117 149h2M124 149h1M130 149h1M250 149h1M413 149h1M476 149h1M482 149h1M119 150h1M125 150h1M131 150h1M475 150h1M481 150h1M120 151h1M126 151h2M251 151h1M411 151h1M474 151h1M480 151h1M121 152h1M128 152h1M472 152h2M478 152h2M485 152h1M122 153h1M129 153h1M251 153h1M410 153h1M471 153h1M477 153h1M483 153h2M123 154h2M470 154h1M476 154h1M482 154h1M111 155h2M125 155h1M252 155h1M408 155h1M475 155h1M481 155h1M487 155h1M113 156h1M126 156h1M474 156h1M480 156h1M486 156h1M108 157h1M114 157h1M253 157h1M407 157h1M473 157h1M479 157h1M485 157h1M109 158h2M115 158h2M477 158h2M483 158h2M111 159h1M117 159h1M253 159h1M405 159h1M476 159h1M482 159h1M112 160h1M118 160h1M475 160h1M481 160h1M106 161h2M113 161h2M119 161h2M254 161h1M404 161h1M480 161h1M108 162h1M115 162h1M121 162h1M479 162h1M491 162h2M109 163h1M116 163h1M255 163h1M402 163h1M478 163h1M490 163h1M103 164h1M110 164h2M117 164h2M489 164h1M104 165h2M112 165h1M119 165h1M255 165h1M401 165h1M487 165h2M106 166h1M113 166h1M486 166h1M494 166h2M107 167h2M114 167h2M256 167h1M399 167h1M485 167h1M492 167h2M109 168h2M116 168h1M483 168h2M490 168h2M111 169h1M257 169h1M398 169h1M482 169h1M489 169h1M496 169h2M112 170h2M487 170h2M495 170h1M98 171h1M114 171h1M257 171h1M396 171h1M485 171h2M494 171h1M99 172h2M484 172h1M492 172h2M500 172h1M101 173h2M258 173h1M395 173h1M491 173h1M498 173h2M96 174h1M103 174h1M490 174h1M497 174h1M97 175h2M104 175h2M259 175h1M393 175h1M488 175h2M495 175h2M99 176h2M106 176h2M487 176h1M493 176h2M101 177h1M108 177h2M259 177h1M392 177h1M492 177h1M94 178h1M102 178h2M110 178h1M490 178h2M95 179h2M104 179h2M260 179h1M390 179h1M489 179h1M97 180h2M106 180h2M503 180h2M92 181h1M99 181h1M108 181h1M261 181h1M389 181h1M501 181h2M93 182h2M100 182h2M499 182h2M95 183h2M102 183h2M261 183h1M387 183h1M498 183h1M505 183h2M97 184h1M104 184h2M145 184h1M496 184h2M503 184h2M98 185h2M147 185h1M262 185h1M386 185h1M494 185h2M501 185h2M100 186h2M493 186h1M500 186h1M508 186h1M102 187h2M149 187h1M262 187h1M384 187h1M498 187h2M506 187h2M151 188h1M496 188h2M504 188h2M88 189h1M263 189h1M383 189h1M495 189h1M502 189h2M89 190h2M153 190h1M500 190h2M510 190h2M91 191h2M155 191h1M264 191h1M381 191h1M498 191h2M508 191h2M86 192h1M93 192h2M497 192h1M506 192h2M87 193h2M95 193h2M157 193h1M264 193h1M380 193h1M504 193h2M89 194h2M97 194h2M159 194h1M502 194h2M91 195h1M99 195h2M265 195h1M378 195h1M500 195h2M92 196h2M161 196h1M499 196h1M85 197h2M94 197h2M163 197h1M266 197h1M376 197h1M513 197h2M87 198h2M96 198h2M511 198h2M89 199h2M98 199h1M165 199h1M266 199h1M375 199h1M509 199h2M83 200h1M91 200h2M167 200h1M507 200h2M84 201h2M93 201h2M267 201h1M373 201h1M505 201h2M515 201h2M86 202h2M95 202h2M169 202h1M503 202h2M513 202h2M88 203h2M171 203h1M268 203h1M372 203h1M502 203h1M511 203h2M90 204h2M509 204h2M92 205h2M173 205h1M268 205h1M370 205h1M507 205h2M517 205h2M94 206h1M175 206h1M505 206h2M515 206h2M269 207h1M369 207h1M504 207h1M512 207h3M79 208h2M177 208h1M509 208h3M81 209h2M179 209h1M270 209h1M367 209h1M469 209h1M507 209h2M518 209h2M83 210h3M467 210h1M506 210h1M516 210h2M78 211h1M86 211h3M181 211h1M270 211h1M366 211h1M465 211h1M513 211h3M79 212h2M89 212h2M183 212h1M463 212h1M511 212h2M81 213h3M91 213h1M271 213h1M364 213h1M509 213h2M84 214h3M185 214h1M459 214h1M508 214h1M76 215h2M87 215h2M187 215h1M272 215h1M363 215h1M457 215h1M78 216h2M89 216h2M522 216h1M80 217h3M189 217h1M272 217h1M361 217h1M453 217h1M520 217h2M83 218h3M191 218h1M451 218h1M517 218h3M75 219h1M86 219h2M360 219h1M449 219h1M514 219h3M76 220h2M88 220h2M193 220h1M447 220h1M512 220h2M523 220h2M78 221h3M195 221h1M274 221h1M358 221h1M445 221h1M510 221h2M521 221h2M81 222h3M443 222h1M518 222h3M84 223h2M197 223h1M274 223h1M357 223h1M441 223h1M515 223h3M86 224h2M199 224h1M439 224h1M513 224h2M524 224h2M275 225h1M355 225h1M511 225h2M522 225h2M201 226h1M437 226h1M519 226h3M72 227h2M203 227h1M276 227h1M354 227h1M435 227h1M516 227h3M74 228h3M433 228h1M514 228h2M526 228h1M77 229h4M205 229h1M276 229h1M352 229h1M431 229h1M513 229h1M523 229h3M81 230h3M207 230h1M429 230h1M519 230h4M71 231h2M84 231h2M277 231h1M351 231h1M427 231h1M516 231h3M73 232h3M209 232h1M514 232h2M76 233h4M211 233h1M277 233h1M349 233h1M80 234h3M421 234h1M70 235h1M83 235h2M213 235h1M278 235h1M348 235h1M419 235h1M71 236h4M215 236h1M417 236h1M528 236h2M75 237h3M279 237h1M346 237h1M415 237h1M525 237h3M78 238h4M217 238h1M521 238h4M69 239h1M82 239h2M219 239h1M279 239h1M345 239h1M411 239h1M518 239h3M70 240h4M409 240h1M516 240h2M529 240h2M74 241h3M221 241h1M280 241h1M343 241h1M526 241h3M77 242h4M223 242h1M407 242h1M522 242h4M81 243h2M281 243h1M342 243h1M405 243h1M519 243h3M225 244h1M403 244h1M517 244h2M529 244h3M227 245h1M281 245h1M340 245h1M401 245h1M525 245h4M399 246h1M521 246h4M67 247h2M229 247h1M282 247h1M339 247h1M397 247h1M518 247h3M69 248h4M231 248h1M395 248h1M530 248h3M73 249h5M283 249h1M337 249h1M393 249h1M526 249h4M78 250h3M233 250h1M391 250h1M522 250h4M66 251h2M235 251h1M283 251h1M335 251h1M389 251h1M519 251h3M68 252h4M387 252h1M72 253h5M237 253h1M284 253h1M334 253h1M385 253h1M77 254h3M239 254h1M383 254h1M65 255h3M285 255h1M332 255h1M381 255h1M68 256h4M241 256h1M379 256h1M532 256h2M72 257h4M243 257h1M285 257h1M331 257h1M377 257h1M527 257h5M76 258h3M523 258h4M245 259h1M286 259h1M329 259h1M375 259h1M521 259h2M64 260h4M247 260h1M373 260h1M68 261h6M287 261h1M328 261h1M371 261h1M531 261h4M74 262h4M249 262h1M369 262h1M525 262h6M251 263h1M287 263h1M326 263h1M367 263h1M521 263h4M365 264h1M253 265h1M288 265h1M325 265h1M363 265h1M532 265h4M255 266h1M361 266h1M525 266h7M289 267h1M323 267h1M359 267h1M522 267h3M63 268h4M257 268h1M357 268h1M67 269h6M259 269h1M289 269h1M322 269h1M355 269h1M532 269h4M73 270h4M353 270h1M526 270h6M261 271h1M290 271h1M320 271h1M351 271h1M522 271h4M62 272h7M263 272h1M349 272h1M69 273h7M291 273h1M319 273h1M347 273h1M265 274h1M267 275h1M291 275h1M317 275h1M345 275h1M62 276h7M343 276h1M69 277h7M269 277h1M292 277h1M316 277h1M341 277h1M530 277h7M271 278h1M339 278h1M523 278h7M292 279h1M314 279h1M337 279h1M62 280h6M273 280h1M335 280h1M68 281h8M275 281h1M293 281h1M313 281h1M333 281h1M530 281h7M331 282h1M523 282h7M277 283h1M294 283h1M311 283h1M329 283h1M279 284h1M327 284h1M294 285h1M310 285h1M325 285h1M530 285h7M281 286h1M323 286h1M523 286h7M283 287h1M295 287h1M308 287h1M321 287h1M319 288h1M61 289h14M285 289h1M296 289h1M307 289h1M317 289h1M287 290h1M315 290h1M524 290h14M296 291h1M305 291h1M289 292h1M313 292h1M61 293h14M291 293h1M297 293h1M304 293h1M311 293h1M309 294h1M293 295h1M298 295h1M302 295h1M307 295h1M295 296h1M305 296h1M61 297h14M298 297h1M301 297h1M303 297h1M297 298h1M301 298h1M524 298h14M299 299h1M61 300h14M297 300h1M301 300h1M295 301h1M297 301h1M300 301h1M524 301h14M293 302h1M303 302h1M291 303h1M296 303h1M300 303h1M305 303h1M289 304h1M287 305h1M294 305h1M301 305h1M307 305h1M524 305h14M285 306h1M309 306h1M293 307h1M302 307h1M61 308h14M283 308h1M311 308h1M281 309h1M291 309h1M302 309h1M313 309h1M524 309h14M279 310h1M277 311h1M290 311h1M303 311h1M315 311h1M68 312h8M142 312h3M275 312h1M317 312h1M62 313h6M138 313h4M273 313h1M288 313h1M304 313h1M134 314h4M271 314h1M319 314h1M132 315h2M269 315h1M287 315h1M304 315h1M321 315h1M68 316h8M267 316h1M62 317h6M265 317h1M285 317h1M305 317h1M323 317h1M523 317h7M263 318h1M325 318h1M530 318h7M261 319h1M284 319h1M306 319h1M69 320h7M259 320h1M327 320h1M62 321h7M257 321h1M282 321h1M306 321h1M329 321h1M523 321h7M255 322h1M530 322h7M253 323h1M281 323h1M307 323h1M331 323h1M333 324h1M251 325h1M279 325h1M307 325h1M523 325h6M249 326h1M335 326h1M529 326h8M73 327h4M247 327h1M278 327h1M308 327h1M337 327h1M67 328h6M245 328h1M522 328h4M63 329h4M243 329h1M276 329h1M309 329h1M339 329h1M526 329h6M241 330h1M341 330h1M532 330h4M74 331h3M239 331h1M275 331h1M309 331h1M67 332h7M237 332h1M343 332h1M63 333h4M235 333h1M273 333h1M310 333h1M345 333h1M233 334h1M74 335h4M231 335h1M272 335h1M311 335h1M347 335h1M68 336h6M229 336h1M349 336h1M521 336h4M64 337h4M227 337h1M270 337h1M311 337h1M525 337h6M225 338h1M351 338h1M531 338h3M76 339h3M223 339h1M269 339h1M312 339h1M353 339h1M71 340h5M520 340h3M67 341h4M221 341h1M267 341h1M313 341h1M355 341h1M523 341h4M65 342h2M219 342h1M527 342h4M217 343h1M266 343h1M313 343h1M531 343h3M215 344h1M359 344h1M519 344h3M213 345h1M264 345h1M314 345h1M361 345h1M522 345h4M211 346h1M447 346h2M526 346h5M77 347h3M209 347h1M263 347h1M315 347h1M363 347h1M449 347h4M531 347h2M73 348h4M207 348h1M365 348h1M453 348h4M518 348h3M69 349h4M205 349h1M261 349h1M315 349h1M457 349h3M521 349h4M67 350h2M203 350h1M367 350h1M525 350h5M78 351h3M201 351h1M259 351h1M316 351h1M369 351h1M530 351h2M74 352h4M199 352h1M70 353h4M197 353h1M258 353h1M317 353h1M371 353h1M68 354h2M80 354h2M195 354h1M373 354h1M77 355h3M193 355h1M256 355h1M317 355h1M516 355h2M73 356h4M191 356h1M375 356h1M518 356h4M70 357h3M255 357h1M318 357h1M377 357h1M522 357h3M68 358h2M81 358h2M189 358h1M525 358h4M78 359h3M187 359h1M253 359h1M319 359h1M379 359h1M515 359h2M529 359h1M74 360h4M185 360h1M381 360h1M517 360h4M71 361h3M183 361h1M252 361h1M319 361h1M521 361h3M69 362h2M181 362h1M383 362h1M524 362h4M179 363h1M250 363h1M320 363h1M385 363h1M514 363h2M528 363h1M177 364h1M516 364h3M175 365h1M249 365h1M321 365h1M387 365h1M519 365h4M83 366h2M173 366h1M389 366h1M523 366h3M80 367h3M171 367h1M247 367h1M321 367h1M513 367h2M526 367h2M76 368h4M169 368h1M391 368h1M515 368h3M73 369h3M85 369h1M167 369h1M246 369h1M322 369h1M393 369h1M518 369h4M72 370h1M83 370h2M165 370h1M522 370h3M80 371h3M163 371h1M244 371h1M322 371h1M395 371h1M525 371h2M77 372h3M161 372h1M397 372h1M75 373h2M86 373h2M243 373h1M323 373h1M73 374h2M84 374h2M159 374h1M399 374h1M511 374h2M81 375h3M157 375h1M241 375h1M324 375h1M401 375h1M513 375h2M78 376h3M155 376h1M515 376h3M76 377h2M87 377h2M153 377h1M240 377h1M324 377h1M403 377h1M518 377h3M74 378h2M85 378h2M151 378h1M405 378h1M509 378h2M521 378h2M82 379h3M149 379h1M238 379h1M325 379h1M511 379h2M523 379h1M79 380h3M147 380h1M407 380h1M513 380h3M77 381h2M145 381h1M237 381h1M326 381h1M409 381h1M516 381h3M76 382h1M143 382h1M508 382h2M519 382h2M141 383h1M235 383h1M326 383h1M411 383h1M510 383h2M521 383h2M90 384h1M139 384h1M413 384h1M512 384h3M88 385h2M137 385h1M234 385h1M327 385h1M507 385h1M515 385h3M85 386h3M135 386h1M415 386h1M508 386h2M518 386h2M83 387h2M133 387h1M232 387h1M328 387h1M417 387h1M510 387h3M520 387h1M81 388h2M92 388h1M131 388h1M513 388h3M79 389h2M90 389h2M129 389h1M231 389h1M419 389h1M516 389h2M87 390h3M421 390h1M518 390h2M84 391h3M93 391h2M229 391h1M82 392h2M91 392h2M423 392h1M504 392h1M81 393h1M89 393h2M228 393h1M330 393h1M425 393h1M505 393h2M87 394h2M507 394h2M85 395h2M95 395h2M226 395h1M330 395h1M427 395h1M509 395h2M83 396h2M93 396h2M429 396h1M502 396h1M511 396h2M82 397h1M91 397h2M225 397h1M331 397h1M503 397h2M513 397h2M89 398h2M431 398h1M505 398h2M515 398h1M87 399h2M223 399h1M332 399h1M433 399h1M500 399h1M507 399h2M85 400h2M501 400h2M509 400h2M84 401h1M222 401h1M332 401h1M435 401h1M503 401h2M511 401h2M98 402h2M437 402h1M505 402h1M513 402h1M96 403h2M220 403h1M333 403h1M498 403h1M506 403h2M94 404h2M439 404h1M499 404h2M508 404h2M92 405h2M218 405h1M334 405h1M441 405h1M501 405h2M510 405h2M90 406h2M100 406h2M503 406h2M88 407h2M98 407h2M217 407h1M334 407h1M443 407h1M505 407h2M96 408h2M445 408h1M507 408h2M94 409h2M103 409h1M215 409h1M335 409h1M509 409h2M92 410h2M101 410h2M447 410h1M90 411h2M99 411h2M214 411h1M336 411h1M449 411h1M495 411h2M97 412h2M105 412h1M497 412h2M96 413h1M103 413h2M212 413h1M336 413h1M451 413h1M499 413h1M94 414h2M101 414h2M453 414h1M493 414h2M500 414h2M92 415h2M99 415h2M211 415h1M337 415h1M495 415h2M502 415h2M98 416h1M497 416h1M504 416h2M96 417h2M209 417h1M337 417h1M490 417h1M498 417h2M506 417h1M94 418h2M491 418h2M500 418h2M109 419h1M208 419h1M338 419h1M493 419h2M502 419h2M107 420h2M488 420h1M495 420h1M504 420h1M106 421h1M206 421h1M489 421h2M496 421h2M104 422h2M111 422h1M491 422h2M498 422h2M102 423h2M109 423h2M205 423h1M339 423h1M493 423h1M500 423h2M101 424h1M108 424h1M494 424h2M502 424h1M99 425h2M107 425h1M203 425h1M340 425h1M496 425h2M98 426h1M105 426h2M114 426h1M498 426h2M104 427h1M112 427h2M202 427h1M341 427h1M484 427h1M500 427h1M103 428h1M110 428h2M485 428h2M101 429h2M108 429h2M116 429h1M200 429h1M341 429h1M487 429h1M107 430h1M114 430h2M482 430h1M488 430h2M105 431h2M113 431h1M199 431h1M342 431h1M483 431h2M490 431h2M103 432h2M112 432h1M485 432h1M492 432h1M110 433h2M197 433h1M343 433h1M479 433h1M486 433h1M493 433h2M109 434h1M480 434h2M487 434h2M495 434h1M108 435h1M120 435h1M196 435h1M343 435h1M482 435h1M489 435h1M106 436h2M119 436h1M477 436h1M483 436h1M490 436h1M118 437h1M194 437h1M344 437h1M478 437h2M484 437h2M491 437h2M117 438h1M123 438h1M480 438h1M486 438h1M115 439h2M122 439h1M193 439h1M345 439h1M481 439h1M487 439h1M114 440h1M120 440h2M482 440h2M488 440h2M113 441h1M119 441h1M125 441h1M191 441h1M345 441h1M484 441h1M490 441h1M112 442h1M118 442h1M124 442h1M472 442h1M485 442h1M111 443h1M117 443h1M123 443h1M190 443h1M346 443h1M473 443h1M486 443h2M116 444h1M122 444h1M128 444h1M474 444h2M114 445h2M120 445h2M127 445h1M188 445h1M347 445h1M469 445h1M476 445h1M113 446h1M119 446h1M125 446h2M470 446h1M477 446h1M118 447h1M124 447h1M187 447h1M347 447h1M471 447h2M478 447h1M117 448h1M123 448h1M467 448h1M473 448h1M479 448h1M116 449h1M122 449h1M185 449h1M348 449h1M468 449h1M474 449h1M480 449h2M115 450h1M121 450h1M133 450h1M469 450h1M475 450h1M482 450h1M119 451h2M132 451h1M184 451h1M349 451h1M464 451h1M470 451h1M476 451h1M118 452h1M131 452h1M465 452h1M471 452h1M477 452h2M130 453h1M136 453h1M182 453h1M349 453h1M466 453h1M472 453h2M479 453h1M129 454h1M135 454h1M467 454h1M474 454h1M128 455h1M134 455h1M294 455h1M350 455h1M468 455h1M475 455h1M127 456h1M133 456h1M138 456h1M294 456h1M469 456h2M476 456h1M126 457h1M132 457h1M137 457h1M294 457h1M351 457h1M459 457h1M471 457h1M477 457h1M125 458h1M131 458h1M136 458h1M294 458h1M460 458h1M472 458h1M124 459h1M130 459h1M135 459h1M141 459h1M294 459h1M351 459h1M461 459h1M473 459h1M129 460h1M134 460h1M140 460h1M294 460h1M456 460h1M462 460h1M474 460h1M128 461h1M133 461h1M139 461h1M294 461h1M352 461h1M457 461h1M463 461h1M127 462h1M133 462h1M138 462h1M294 462h1M453 462h1M458 462h1M464 462h2M126 463h1M132 463h1M137 463h1M294 463h1M352 463h1M454 463h1M459 463h1M466 463h1M131 464h1M136 464h1M147 464h1M294 464h1M455 464h1M460 464h1M467 464h1M130 465h1M136 465h1M146 465h1M294 465h1M353 465h1M450 465h1M456 465h1M461 465h2M468 465h1M129 466h1M135 466h1M145 466h1M294 466h1M451 466h1M457 466h1M463 466h1M469 466h1M134 467h1M144 467h1M150 467h1M294 467h1M354 467h1M452 467h1M458 467h1M464 467h1M133 468h1M143 468h1M149 468h1M453 468h1M459 468h1M465 468h1M132 469h1M142 469h1M148 469h1M153 469h1M354 469h1M454 469h1M460 469h1M466 469h1M142 470h1M147 470h1M152 470h1M444 470h1M455 470h1M461 470h1M141 471h1M146 471h1M151 471h1M355 471h1M445 471h1M456 471h1M462 471h1M140 472h1M145 472h1M151 472h1M156 472h1M446 472h1M457 472h1M463 472h1M139 473h1M145 473h1M150 473h1M155 473h1M356 473h1M441 473h1M446 473h1M458 473h1M138 474h1M144 474h1M149 474h1M154 474h1M442 474h1M447 474h1M459 474h1M143 475h1M148 475h1M154 475h1M356 475h1M438 475h1M443 475h1M448 475h1M142 476h1M147 476h1M153 476h1M439 476h1M444 476h1M449 476h1M141 477h1M146 477h1M152 477h1M162 477h1M357 477h1M440 477h1M445 477h1M450 477h1M146 478h1M151 478h1M161 478h1M435 478h1M440 478h1M446 478h1M451 478h1M145 479h1M150 479h1M161 479h1M165 479h1M358 479h1M436 479h1M441 479h1M446 479h1M451 479h1M149 480h1M160 480h1M164 480h1M437 480h1M442 480h1M447 480h1M452 480h1M149 481h1M159 481h1M164 481h1M358 481h1M438 481h1M443 481h1M448 481h1M148 482h1M158 482h1M163 482h1M168 482h1M429 482h1M439 482h1M444 482h1M449 482h1M158 483h1M162 483h1M167 483h1M359 483h1M430 483h1M440 483h1M445 483h1M450 483h1M157 484h1M161 484h1M167 484h1M171 484h1M426 484h1M430 484h1M440 484h1M445 484h1M156 485h1M161 485h1M166 485h1M170 485h1M427 485h1M431 485h1M441 485h1M446 485h1M155 486h1M160 486h1M165 486h1M170 486h1M427 486h1M432 486h1M442 486h1M155 487h1M159 487h1M164 487h1M169 487h1M422 487h1M428 487h1M433 487h1M443 487h1M158 488h1M164 488h1M168 488h1M178 488h1M423 488h1M428 488h1M433 488h1M158 489h1M163 489h1M168 489h1M177 489h1M419 489h1M423 489h1M429 489h1M434 489h1M157 490h1M162 490h1M167 490h1M177 490h1M181 490h1M420 490h1M424 490h1M430 490h1M435 490h1M161 491h1M167 491h1M176 491h1M180 491h1M420 491h1M425 491h1M430 491h1M436 491h1M161 492h1M166 492h1M176 492h1M180 492h1M421 492h1M426 492h1M431 492h1M436 492h1M165 493h1M175 493h1M179 493h1M184 493h1M412 493h1M422 493h1M426 493h1M431 493h1M165 494h1M174 494h1M179 494h1M184 494h1M413 494h1M422 494h1M427 494h1M432 494h1M164 495h1M174 495h1M178 495h1M183 495h1M187 495h1M409 495h1M413 495h1M423 495h1M428 495h1M432 495h1M173 496h1M177 496h1M183 496h1M187 496h1M410 496h1M414 496h1M423 496h1M429 496h1M173 497h1M177 497h1M182 497h1M186 497h1M406 497h1M410 497h1M414 497h1M424 497h1M429 497h1M172 498h1M176 498h1M181 498h1M186 498h1M195 498h1M407 498h1M411 498h1M415 498h1M425 498h1M172 499h1M176 499h1M181 499h1M185 499h1M194 499h1M402 499h1M407 499h1M411 499h1M416 499h1M425 499h1M171 500h1M175 500h1M180 500h1M184 500h1M194 500h1M199 500h1M403 500h1M408 500h1M412 500h1M416 500h1M426 500h1M175 501h1M180 501h1M184 501h1M193 501h1M198 501h1M403 501h1M408 501h1M413 501h1M417 501h1M174 502h1M179 502h1M183 502h1M193 502h1M198 502h1M202 502h1M395 502h1M404 502h1M409 502h1M413 502h1M417 502h1M179 503h1M183 503h1M192 503h1M197 503h1M201 503h1M396 503h1M404 503h1M409 503h1M414 503h1M418 503h1M178 504h1M182 504h1M192 504h1M197 504h1M201 504h1M206 504h1M391 504h1M396 504h1M405 504h1M410 504h1M414 504h1M418 504h1M182 505h1M191 505h1M196 505h1M200 505h1M205 505h1M392 505h1M397 505h1M405 505h1M410 505h1M415 505h1M181 506h1M191 506h1M195 506h1M200 506h1M205 506h1M388 506h1M392 506h1M397 506h1M406 506h1M411 506h1M415 506h1M190 507h1M195 507h1M199 507h1M204 507h1M213 507h1M389 507h1M393 507h1M398 507h1M406 507h1M411 507h1M190 508h1M194 508h1M199 508h1M204 508h1M212 508h1M216 508h1M384 508h1M389 508h1M393 508h1M398 508h1M407 508h1M412 508h1M189 509h1M194 509h1M198 509h1M203 509h1M212 509h1M216 509h1M220 509h1M385 509h1M390 509h1M394 509h1M399 509h1M407 509h1M189 510h1M193 510h1M198 510h1M203 510h1M211 510h1M215 510h1M220 510h1M377 510h1M385 510h1M390 510h1M394 510h1M399 510h1M408 510h1M193 511h1M197 511h1M202 511h1M211 511h1M215 511h1M219 511h1M224 511h1M373 511h1M377 511h1M386 511h1M390 511h1M395 511h1M400 511h1M192 512h1M197 512h1M202 512h1M211 512h1M214 512h1M219 512h1M224 512h1M373 512h1M378 512h1M386 512h1M391 512h1M395 512h1M400 512h1M196 513h1M201 513h1M210 513h1M214 513h1M218 513h1M223 513h1M231 513h1M369 513h1M374 513h1M378 513h1M387 513h1M391 513h1M396 513h1M401 513h1M201 514h1M210 514h1M214 514h1M218 514h1M223 514h1M231 514h1M235 514h1M366 514h1M370 514h1M374 514h1M379 514h1M387 514h1M391 514h1M396 514h1M401 514h1M200 515h1M210 515h1M213 515h1M218 515h1M222 515h1M230 515h1M235 515h1M239 515h1M366 515h1M370 515h1M375 515h1M379 515h1M387 515h1M392 515h1M397 515h1M209 516h1M213 516h1M217 516h1M222 516h1M230 516h1M234 516h1M239 516h1M243 516h1M358 516h1M367 516h1M371 516h1M375 516h1M379 516h1M388 516h1M392 516h1M397 516h1M209 517h1M213 517h1M217 517h1M222 517h1M230 517h1M234 517h1M238 517h1M243 517h1M354 517h1M358 517h1M367 517h1M371 517h1M375 517h1M380 517h1M388 517h1M393 517h1M208 518h1M212 518h1M217 518h1M221 518h1M229 518h1M234 518h1M238 518h1M242 518h1M250 518h1M351 518h1M354 518h1M359 518h1M367 518h1M371 518h1M376 518h1M380 518h1M389 518h1M208 519h1M212 519h1M216 519h1M221 519h1M229 519h1M233 519h1M238 519h1M242 519h1M250 519h1M254 519h1M347 519h1M351 519h1M355 519h1M359 519h1M368 519h1M372 519h1M376 519h1M380 519h1M389 519h1M211 520h1M216 520h1M221 520h1M229 520h1M233 520h1M238 520h1M242 520h1M250 520h1M254 520h1M258 520h1M339 520h1M347 520h1M351 520h1M355 520h1M359 520h1M368 520h1M372 520h1M376 520h1M381 520h1M215 521h1M220 521h1M229 521h1M233 521h1M237 521h1M242 521h1M249 521h1M254 521h1M258 521h1M262 521h1M335 521h1M339 521h1M347 521h1M352 521h1M355 521h1M360 521h1M368 521h1M372 521h1M377 521h1M381 521h1M215 522h1M220 522h1M228 522h1M233 522h1M237 522h1M241 522h1M249 522h1M253 522h1M258 522h1M262 522h1M270 522h1M327 522h1M331 522h1M335 522h1M339 522h1M348 522h1M352 522h1M356 522h1M360 522h1M368 522h1M373 522h1M377 522h1M382 522h1M219 523h1M228 523h1M232 523h1M237 523h1M241 523h1M249 523h1M253 523h1M257 523h1M262 523h1M270 523h1M273 523h1M277 523h1M281 523h1M312 523h1M316 523h1M320 523h1M327 523h1M331 523h1M335 523h1M340 523h1M348 523h1M352 523h1M356 523h1M360 523h1M369 523h1M373 523h1M378 523h1M228 524h1M232 524h1M236 524h1M241 524h1M249 524h1M253 524h1M257 524h1M262 524h1M270 524h1M273 524h1M277 524h1M281 524h1M289 524h1M293 524h1M297 524h1M300 524h1M308 524h1M312 524h1M316 524h1M320 524h1M327 524h1M331 524h1M335 524h1M340 524h1M348 524h1M352 524h1M356 524h1M360 524h1M369 524h1M374 524h1M378 524h1M227 525h1M232 525h1M236 525h1M240 525h1M248 525h1M253 525h1M257 525h1M261 525h1M270 525h1M273 525h1M277 525h1M281 525h1M289 525h1M293 525h1M297 525h1M300 525h1M308 525h1M312 525h1M316 525h1M320 525h1M327 525h1M332 525h1M336 525h1M340 525h1M348 525h1M353 525h1M356 525h1M361 525h1M369 525h1M374 525h1M227 526h1M231 526h1M236 526h1M240 526h1M248 526h1M252 526h1M257 526h1M261 526h1M269 526h1M273 526h1M277 526h1M281 526h1M289 526h1M293 526h1M297 526h1M300 526h1M308 526h1M312 526h1M316 526h1M320 526h1M328 526h1M332 526h1M336 526h1M340 526h1M349 526h1M353 526h1M357 526h1M361 526h1M370 526h1M231 527h1M236 527h1M240 527h1M248 527h1M252 527h1M256 527h1M261 527h1M269 527h1M273 527h1M277 527h1M281 527h1M289 527h1M293 527h1M297 527h1M300 527h1M308 527h1M312 527h1M316 527h1M320 527h1M328 527h1M332 527h1M336 527h1M341 527h1M349 527h1M353 527h1M357 527h1M361 527h1M235 528h1M240 528h1M248 528h1M252 528h1M256 528h1M261 528h1M269 528h1M273 528h1M277 528h1M281 528h1M289 528h1M293 528h1M297 528h1M300 528h1M308 528h1M312 528h1M316 528h1M320 528h1M328 528h1M332 528h1M336 528h1M341 528h1M349 528h1M353 528h1M357 528h1M362 528h1M239 529h1M248 529h1M252 529h1M256 529h1M261 529h1M269 529h1M272 529h1M277 529h1M281 529h1M289 529h1M293 529h1M297 529h1M300 529h1M308 529h1M312 529h1M316 529h1M320 529h1M328 529h1M332 529h1M336 529h1M341 529h1M349 529h1M354 529h1M358 529h1M362 529h1M247 530h1M252 530h1M256 530h1M261 530h1M269 530h1M272 530h1M276 530h1M280 530h1M289 530h1M293 530h1M297 530h1M300 530h1M308 530h1M313 530h1M317 530h1M321 530h1M328 530h1M332 530h1M336 530h1M341 530h1M350 530h1M354 530h1M358 530h1M247 531h1M251 531h1M255 531h1M260 531h1M269 531h1M272 531h1M276 531h1M280 531h1M289 531h1M293 531h1M297 531h1M300 531h1M308 531h1M313 531h1M317 531h1M321 531h1M328 531h1M332 531h1M337 531h1M341 531h1M350 531h1M251 532h1M255 532h1M260 532h1M268 532h1M272 532h1M276 532h1M280 532h1M289 532h1M293 532h1M297 532h1M300 532h1M308 532h1M313 532h1M317 532h1M321 532h1M329 532h1M333 532h1M337 532h1M342 532h1M255 533h1M260 533h1M268 533h1M272 533h1M276 533h1M280 533h1M289 533h1M293 533h1M297 533h1M300 533h1M308 533h1M313 533h1M317 533h1M321 533h1M329 533h1M333 533h1M337 533h1M342 533h1M260 534h1M268 534h1M272 534h1M276 534h1M280 534h1M289 534h1M293 534h1M297 534h1M300 534h1M308 534h1M313 534h1M317 534h1M321 534h1M329 534h1M333 534h1M337 534h1M268 535h1M272 535h1M276 535h1M280 535h1M289 535h1M293 535h1M297 535h1M300 535h1M308 535h1M313 535h1M317 535h1M321 535h1M329 535h1M333 535h1M272 536h1M276 536h1M280 536h1M289 536h1M293 536h1M297 536h1M300 536h1M308 536h1M313 536h1M317 536h1M321 536h1M289 537h1M293 537h1M297 537h1M300 537h1M308 537h1"/>
<path transform="translate(0,.5)" fill="none" stroke="#ff0000" stroke-width="1" d="M745 106h1M751 106h1M746 107h1M750 107h1M747 108h3M746 109h1M750 109h1M745 110h1M751 110h1M745 111h1M751 111h1M745 112h1M751 112h1M746 113h1M750 113h1M747 114h3M75 146h3M85 146h3M744 146h1M746 146h1M748 146h1M74 147h1M78 147h1M84 147h1M88 147h1M745 147h1M747 147h1M749 147h1M751 147h1M73 148h1M79 148h1M83 148h1M89 148h1M745 148h1M747 148h1M749 148h3M73 149h1M79 149h1M83 149h1M89 149h1M745 149h1M747 149h1M749 149h1M751 149h1M73 150h1M79 150h1M83 150h1M89 150h1M745 150h1M747 150h1M749 150h1M751 150h1M74 151h1M80 151h1M82 151h1M88 151h1M745 151h1M747 151h1M749 151h1M751 151h1M75 152h1M80 152h1M82 152h1M87 152h1M745 152h1M747 152h1M749 152h1M751 152h1M80 153h1M82 153h1M745 153h1M747 153h1M750 153h1M80 154h1M82 154h1M749 154h1M751 154h1M81 155h1M81 156h1M81 157h1M81 158h1M81 159h1M328 159h1M81 160h1M81 161h1M329 161h1M81 162h1M330 163h1M346 164h1M332 165h1M346 165h1M347 166h1M333 167h1M347 167h1M348 168h1M335 169h1M348 169h1M349 170h1M336 171h1M349 171h1M350 172h1M337 173h1M350 173h1M351 174h1M339 175h1M351 175h1M538 175h5M352 176h1M541 176h2M340 177h1M352 177h1M540 177h1M542 177h1M353 178h1M539 178h1M542 178h1M342 179h1M353 179h1M538 179h1M542 179h1M354 180h1M537 180h1M343 181h1M354 181h1M528 181h1M536 181h1M355 182h1M529 182h1M535 182h1M344 183h1M355 183h1M530 183h1M534 183h1M356 184h1M531 184h1M533 184h1M346 185h1M356 185h1M532 185h1M357 186h1M531 186h1M533 186h1M745 186h1M748 186h1M750 186h2M347 187h1M357 187h1M530 187h1M534 187h1M744 187h2M748 187h2M752 187h1M358 188h1M529 188h1M535 188h1M745 188h1M747 188h1M749 188h1M752 188h1M349 189h1M358 189h1M528 189h1M536 189h1M745 189h1M747 189h1M750 189h2M359 190h1M527 190h1M745 190h1M747 190h1M751 190h1M350 191h1M359 191h1M526 191h1M746 191h1M752 191h1M360 192h1M746 192h1M752 192h1M351 193h1M360 193h1M746 193h1M752 193h1M361 194h1M751 194h1M353 195h1M361 195h1M362 196h1M449 196h5M354 197h1M362 197h1M447 197h2M454 197h2M363 198h1M446 198h1M456 198h1M356 199h1M363 199h1M445 199h1M457 199h1M364 200h1M444 200h1M458 200h1M357 201h1M364 201h1M444 201h1M458 201h1M365 202h1M443 202h1M459 202h1M358 203h1M365 203h1M443 203h1M459 203h1M366 204h1M443 204h1M451 204h1M459 204h1M360 205h1M366 205h1M443 205h1M459 205h1M367 206h1M443 206h1M459 206h1M361 207h1M367 207h1M444 207h1M458 207h1M368 208h1M444 208h1M458 208h1M363 209h1M368 209h1M445 209h1M457 209h1M369 210h1M446 210h1M456 210h1M364 211h1M369 211h1M447 211h2M454 211h2M370 212h1M449 212h5M365 213h1M370 213h1M371 214h1M367 215h1M371 215h1M372 216h1M368 217h1M372 217h1M373 218h1M370 219h1M373 219h1M374 220h1M371 221h1M374 221h1M375 222h1M372 223h1M376 223h1M376 224h1M374 225h1M377 225h1M377 226h1M375 227h1M378 227h1M430 227h1M378 228h1M377 229h1M379 229h1M379 230h1M471 230h6M378 231h1M380 231h1M475 231h2M380 232h1M474 232h1M476 232h1M379 233h1M381 233h1M473 233h1M476 233h1M381 234h1M472 234h1M476 234h1M381 235h2M471 235h1M476 235h1M382 236h1M463 236h5M470 236h1M747 236h3M382 237h2M435 237h1M462 237h1M468 237h2M745 237h2M750 237h2M383 238h1M461 238h1M469 238h1M745 238h1M751 238h1M384 239h1M460 239h1M470 239h1M744 239h1M752 239h1M384 240h1M460 240h1M470 240h1M744 240h1M748 240h1M752 240h1M385 241h1M460 241h1M470 241h1M744 241h1M752 241h1M385 242h1M460 242h1M470 242h1M745 242h1M751 242h1M386 243h1M460 243h1M470 243h1M745 243h2M750 243h2M386 244h1M461 244h1M469 244h1M747 244h3M387 245h2M462 245h1M468 245h1M387 246h1M463 246h5M388 247h2M388 248h1M389 249h1M391 249h1M389 250h1M390 251h1M392 251h1M390 252h1M391 253h1M393 253h1M391 254h1M392 255h1M395 255h1M392 256h1M393 257h1M396 257h1M393 258h1M394 259h1M398 259h1M394 260h1M395 261h1M399 261h1M395 262h1M396 263h1M400 263h1M396 264h1M397 265h1M402 265h1M397 266h1M398 267h1M403 267h1M398 268h1M399 269h1M405 269h1M399 270h1M406 271h1M400 272h1M401 273h1M407 273h1M401 274h1M402 275h1M409 275h1M402 276h1M750 276h3M403 277h1M410 277h1M751 277h2M403 278h1M750 278h1M752 278h1M404 279h1M412 279h1M746 279h2M749 279h1M404 280h1M745 280h1M748 280h1M405 281h1M413 281h1M744 281h1M749 281h1M405 282h1M744 282h1M749 282h1M406 283h1M414 283h1M745 283h1M748 283h1M407 284h1M746 284h2M407 285h1M416 285h1M408 286h1M751 286h1M408 287h1M417 287h1M745 287h2M750 287h1M409 288h1M747 288h1M750 288h1M409 289h1M419 289h1M747 289h1M750 289h1M410 290h1M746 290h1M750 290h1M410 291h1M420 291h1M746 291h1M750 291h1M411 292h1M745 292h1M750 292h1M411 293h1M421 293h1M745 293h8M412 294h1M750 294h1M412 295h1M423 295h1M413 296h1M413 297h1M414 298h1M149 299h1M414 299h1M426 299h1M156 300h1M415 300h1M157 301h1M415 301h1M427 301h1M158 302h1M416 302h1M159 303h1M416 303h1M428 303h1M160 304h1M417 304h1M161 305h1M417 305h1M430 305h1M162 306h1M418 306h1M163 307h1M418 307h1M431 307h1M126 308h1M164 308h1M419 308h1M125 309h1M165 309h1M419 309h1M433 309h1M114 310h3M124 310h1M166 310h1M420 310h1M117 311h1M124 311h1M150 311h1M156 311h1M167 311h1M420 311h1M434 311h1M118 312h1M124 312h1M168 312h1M118 313h1M124 313h1M169 313h1M421 313h1M435 313h1M118 314h1M124 314h1M170 314h1M422 314h1M117 315h1M124 315h1M160 315h1M171 315h1M422 315h1M437 315h1M116 316h1M124 316h1M172 316h1M116 317h1M124 317h1M173 317h1M438 317h1M116 318h1M124 318h1M173 318h1M424 318h1M115 319h1M124 319h1M164 319h1M174 319h1M424 319h1M114 320h1M124 320h1M175 320h1M425 320h1M114 321h1M124 321h1M176 321h1M425 321h1M441 321h1M114 322h15M168 322h1M177 322h1M426 322h1M124 323h1M178 323h1M426 323h1M439 323h1M124 324h1M179 324h1M427 324h1M180 325h1M427 325h1M172 326h1M181 326h1M428 326h1M435 326h1M182 327h1M428 327h1M183 328h1M429 328h1M184 329h1M429 329h1M431 329h1M176 330h1M185 330h1M430 330h1M186 331h1M430 331h1M187 332h1M431 332h1M188 333h1M427 333h1M431 333h1M180 334h1M189 334h1M432 334h1M190 335h1M432 335h1M191 336h1M423 336h1M433 336h1M192 337h1M433 337h1M184 338h1M193 338h1M434 338h1M194 339h1M419 339h1M434 339h1M195 340h1M435 340h1M188 341h1M196 341h1M435 341h1M197 342h1M436 342h1M198 343h1M415 343h1M199 344h1M192 345h1M200 345h1M201 346h1M411 346h1M202 347h1M203 348h1M196 349h1M204 349h1M407 349h1M205 350h1M206 351h1M207 352h1M200 353h1M208 353h1M403 353h1M208 354h1M209 355h1M210 356h1M399 356h1M204 357h1M211 357h1M212 358h1M213 359h1M395 359h1M208 360h1M214 360h1M215 361h1M216 362h1M217 363h1M391 363h1M212 364h1M218 364h1M219 365h1M220 366h1M387 366h1M221 367h1M216 368h1M222 368h1M223 369h1M383 369h1M224 370h1M225 371h1M220 372h1M226 372h1M227 373h1M379 373h1M228 374h1M229 375h1M224 376h1M230 376h1M375 376h1M231 377h1M232 378h1M228 379h1M233 379h1M371 379h1M234 380h1M235 381h1M416 381h1M236 382h1M410 382h1M412 382h1M414 382h1M232 383h1M237 383h1M367 383h1M406 383h1M408 383h1M238 384h1M400 384h1M402 384h1M404 384h1M239 385h1M396 385h1M398 385h1M240 386h1M363 386h1M390 386h1M392 386h1M394 386h1M236 387h1M241 387h1M386 387h1M388 387h1M242 388h1M380 388h1M382 388h1M384 388h1M243 389h1M376 389h1M378 389h1M243 390h1M359 390h1M370 390h1M372 390h1M374 390h1M240 391h1M244 391h1M366 391h1M368 391h1M245 392h1M360 392h1M362 392h1M364 392h1M246 393h1M355 393h2M358 393h1M247 394h1M350 394h1M352 394h1M354 394h1M244 395h1M248 395h1M346 395h1M348 395h1M249 396h1M340 396h1M342 396h1M344 396h1M351 396h1M250 397h1M336 397h1M338 397h1M248 398h1M251 398h1M330 398h1M332 398h1M334 398h1M252 399h1M326 399h1M328 399h1M253 400h1M320 400h1M322 400h1M347 400h1M254 401h1M316 401h1M318 401h1M252 402h1M255 402h1M310 402h1M312 402h1M314 402h1M256 403h1M306 403h1M308 403h1M343 403h1M257 404h1M300 404h1M302 404h1M304 404h1M258 405h1M296 405h1M298 405h1M256 406h1M259 406h1M290 406h1M292 406h1M294 406h1M339 406h1M260 407h1M286 407h1M288 407h1M261 408h1M280 408h1M282 408h1M284 408h1M262 409h1M276 409h1M278 409h1M260 410h1M263 410h1M270 410h1M272 410h1M274 410h1M335 410h1M264 411h1M266 411h1M268 411h1M260 412h1M262 412h1M264 412h2M256 413h1M258 413h1M266 413h1M331 413h1M250 414h1M252 414h1M254 414h1M264 414h1M267 414h1M246 415h1M248 415h1M268 415h1M240 416h1M242 416h1M244 416h1M269 416h1M327 416h1M236 417h1M238 417h1M268 417h1M270 417h1M230 418h1M232 418h1M234 418h1M271 418h1M226 419h1M228 419h1M272 419h1M224 420h1M273 420h1M323 420h1M272 421h1M274 421h1M275 422h1M276 423h1M319 423h1M277 424h1M276 425h1M278 425h1M278 426h1M315 426h1M279 427h1M280 428h1M280 429h2M282 430h1M311 430h1M283 431h1M284 432h1M284 433h2M307 433h1M286 434h1M287 435h1M288 436h1M303 436h1M289 437h1M290 438h1M291 439h1M292 440h1M299 440h1M293 441h1M294 442h1M281 553h5M280 554h1M286 554h1M279 555h1M287 555h1M278 556h1M288 556h1M277 557h1M289 557h1M277 558h1M289 558h1M277 559h1M289 559h1M277 560h1M289 560h1M277 561h1M289 561h1M278 562h1M288 562h1M279 563h1M287 563h1M279 564h1M287 564h1M275 565h1M279 565h1M287 565h1M276 566h1M278 566h1M288 566h1M277 567h1M289 567h1M290 568h1M291 569h1"/>
<path transform="translate(0,.5)" fill="none" stroke="#00ff00" stroke-width="1" d="M311 29h1M317 29h1M323 29h1M310 30h2M316 30h2M322 30h1M310 31h1M312 31h1M316 31h1M318 31h1M322 31h1M309 32h1M312 32h1M315 32h1M318 32h1M321 32h1M308 33h1M312 33h1M314 33h1M318 33h1M320 33h1M308 34h1M313 34h2M319 34h2M307 35h1M313 35h1M319 35h1M311 39h1M317 39h1M323 39h1M310 40h2M316 40h2M322 40h1M310 41h1M312 41h1M316 41h1M318 41h1M322 41h1M309 42h1M312 42h1M315 42h1M318 42h1M321 42h1M308 43h1M312 43h1M314 43h1M318 43h1M320 43h1M308 44h1M313 44h2M319 44h2M307 45h1M313 45h1M319 45h1M355 121h5M354 122h1M360 122h1M353 123h1M361 123h1M353 124h1M361 124h1M353 125h1M361 125h1M353 126h1M361 126h1M353 127h1M361 127h1M747 127h3M354 128h1M360 128h1M745 128h2M750 128h2M355 129h5M744 129h1M749 129h1M752 129h1M357 130h1M745 130h2M749 130h1M752 130h1M357 131h1M744 131h1M747 131h1M750 131h2M357 132h1M744 132h1M747 132h1M752 132h1M353 133h9M745 133h2M750 133h2M357 134h1M747 134h3M357 135h1M357 136h1M357 137h1M347 157h1M328 161h1M345 163h1M420 163h1M428 163h1M421 164h1M427 164h1M330 165h1M422 165h5M341 166h1M421 166h1M427 166h1M744 166h1M746 166h1M748 166h1M420 167h1M428 167h1M745 167h1M747 167h1M749 167h1M420 168h1M428 168h1M745 168h1M747 168h1M749 168h1M331 169h1M337 169h1M420 169h1M428 169h1M745 169h1M747 169h1M749 169h1M420 170h1M428 170h1M745 170h1M747 170h1M749 170h1M420 171h1M428 171h1M745 171h1M747 171h1M749 171h1M333 172h1M421 172h1M427 172h1M745 172h1M747 172h1M749 172h1M752 172h1M333 173h1M422 173h5M745 173h1M747 173h1M749 173h1M752 173h1M424 174h1M750 174h2M424 175h1M329 176h1M424 176h1M335 177h1M420 177h9M424 178h1M325 179h1M424 179h1M336 181h1M321 182h1M317 185h1M338 185h1M313 188h1M340 189h1M309 191h1M403 192h1M341 193h1M305 194h1M301 197h1M343 197h1M297 201h1M344 201h1M293 204h1M346 205h1M744 206h1M752 206h1M289 207h1M745 207h1M751 207h1M746 208h1M750 208h1M348 209h1M746 209h1M750 209h1M285 210h1M744 210h9M746 211h1M750 211h1M746 212h1M750 212h1M281 213h1M349 213h1M745 213h1M751 213h1M744 214h1M752 214h1M277 216h1M351 217h1M273 219h1M352 221h1M269 223h1M354 225h1M265 226h1M261 229h1M356 229h1M424 231h1M257 232h1M424 232h1M357 233h1M423 233h1M423 234h1M253 235h1M422 235h1M421 236h1M359 237h1M421 237h1M249 238h1M420 238h1M420 239h1M428 239h1M419 240h1M430 240h1M245 241h1M360 241h1M418 241h1M427 241h1M418 242h1M429 242h1M417 243h1M426 243h1M241 244h1M416 244h1M427 244h1M362 245h1M416 245h1M424 245h1M415 246h1M426 246h1M415 247h1M423 247h1M237 248h1M414 248h1M425 248h1M364 249h1M413 249h1M422 249h1M413 250h1M423 250h1M233 251h1M412 251h1M421 251h1M412 252h1M422 252h1M365 253h1M411 253h1M419 253h1M229 254h1M410 254h1M421 254h1M410 255h1M418 255h1M409 256h1M419 256h1M746 256h1M750 256h1M225 257h1M367 257h1M409 257h1M417 257h1M747 257h3M408 258h1M418 258h1M746 258h1M750 258h1M407 259h1M415 259h1M746 259h1M750 259h1M221 260h1M407 260h1M417 260h1M746 260h1M750 260h1M369 261h1M406 261h1M414 261h1M747 261h3M405 262h1M415 262h1M748 262h1M217 263h1M405 263h1M413 263h1M746 263h5M404 264h1M414 264h1M748 264h1M370 265h1M404 265h1M411 265h1M213 266h1M403 266h1M413 266h1M747 266h3M402 267h1M410 267h1M746 267h1M750 267h1M402 268h1M411 268h1M746 268h1M750 268h1M209 269h1M372 269h1M401 269h1M409 269h1M746 269h1M750 269h1M401 270h1M410 270h1M747 270h3M400 271h1M407 271h1M748 271h1M399 272h1M409 272h1M746 272h5M205 273h1M373 273h1M399 273h1M406 273h1M748 273h1M398 274h1M407 274h1M748 274h1M398 275h1M405 275h1M201 276h1M397 276h1M406 276h1M375 277h1M396 277h1M404 277h1M396 278h1M405 278h1M197 279h1M395 279h1M402 279h1M394 280h1M403 280h1M377 281h1M394 281h1M401 281h1M193 282h1M393 282h1M402 282h1M393 283h1M400 283h1M392 284h1M401 284h1M189 285h1M378 285h1M391 285h1M398 285h1M391 286h1M399 286h1M390 287h1M397 287h1M185 288h1M390 288h1M398 288h1M380 289h1M389 289h1M396 289h1M388 290h1M397 290h1M181 291h1M388 291h1M394 291h1M387 292h1M395 292h1M381 293h1M387 293h1M393 293h1M386 294h1M394 294h1M177 295h1M385 295h1M392 295h1M385 296h1M393 296h1M383 297h2M390 297h1M173 298h1M383 298h1M391 298h1M383 299h1M389 299h1M382 300h1M390 300h1M169 301h1M382 301h1M385 301h1M388 301h1M381 302h1M389 302h1M380 303h1M387 303h1M165 304h1M380 304h1M387 304h1M379 305h1M385 305h2M379 306h1M386 306h1M745 306h1M751 306h1M161 307h1M378 307h1M384 307h1M746 307h1M750 307h1M377 308h1M385 308h1M746 308h1M748 308h1M750 308h1M377 309h1M383 309h1M388 309h1M746 309h5M157 310h1M376 310h1M383 310h1M746 310h1M748 310h1M750 310h1M376 311h1M381 311h1M745 311h1M748 311h1M751 311h1M375 312h1M382 312h1M747 312h3M374 313h1M380 313h1M390 313h1M747 313h1M749 313h1M374 314h1M381 314h1M748 314h1M373 315h1M379 315h1M373 316h1M379 316h1M372 317h1M377 317h1M391 317h1M371 318h1M378 318h1M471 318h1M483 318h1M371 319h1M376 319h1M472 319h1M482 319h1M370 320h1M377 320h1M473 320h1M481 320h1M369 321h1M375 321h1M393 321h1M447 321h1M473 321h1M481 321h1M369 322h1M375 322h1M438 322h1M473 322h1M477 322h1M481 322h1M368 323h1M373 323h1M473 323h1M477 323h1M481 323h1M368 324h1M374 324h1M434 324h1M473 324h9M367 325h1M372 325h1M394 325h1M473 325h1M477 325h1M481 325h1M366 326h1M373 326h1M430 326h1M473 326h1M477 326h1M481 326h1M366 327h1M371 327h1M472 327h1M477 327h1M482 327h1M365 328h1M371 328h1M426 328h1M471 328h1M477 328h1M483 328h1M365 329h1M370 329h1M396 329h1M477 329h1M364 330h1M370 330h1M422 330h1M476 330h3M363 331h1M368 331h1M418 331h1M475 331h1M479 331h1M363 332h1M369 332h1M475 332h1M479 332h1M362 333h1M367 333h1M398 333h1M414 333h1M475 333h1M479 333h1M362 334h1M367 334h1M476 334h3M361 335h1M366 335h1M410 335h1M360 336h1M366 336h1M360 337h1M364 337h1M399 337h1M406 337h1M359 338h1M365 338h1M358 339h1M363 339h1M402 339h1M358 340h1M363 340h1M398 340h1M357 341h1M362 341h1M401 341h1M357 342h1M362 342h1M394 342h1M356 343h1M360 343h1M355 344h1M361 344h1M390 344h1M355 345h1M359 345h1M402 345h1M354 346h1M360 346h1M386 346h1M354 347h1M358 347h1M353 348h1M358 348h1M382 348h1M352 349h1M356 349h1M378 349h1M404 349h1M352 350h1M357 350h1M351 351h1M355 351h1M374 351h1M351 352h1M356 352h1M350 353h1M354 353h1M370 353h1M406 353h1M349 354h1M354 354h1M349 355h1M353 355h1M366 355h1M348 356h1M353 356h1M347 357h1M351 357h1M362 357h1M407 357h1M347 358h1M352 358h1M346 359h1M350 359h1M358 359h1M346 360h1M350 360h1M354 360h1M345 361h1M349 361h1M409 361h1M344 362h1M349 362h2M344 363h1M347 363h1M343 364h1M346 364h1M348 364h1M343 365h1M346 365h1M411 365h1M342 366h1M346 366h1M341 367h1M345 367h1M338 368h1M341 368h1M345 368h1M334 369h1M340 369h1M343 369h1M412 369h1M340 370h1M344 370h1M330 371h1M339 371h1M342 371h1M338 372h1M342 372h1M326 373h1M338 373h1M341 373h1M414 373h1M337 374h1M341 374h1M322 375h1M337 375h1M339 375h1M336 376h1M340 376h1M318 377h1M335 377h1M338 377h1M415 377h1M314 378h1M335 378h1M338 378h1M334 379h1M337 379h1M310 380h1M333 380h1M337 380h1M333 381h1M336 381h1M306 382h1M332 382h1M336 382h1M332 383h1M334 383h1M302 384h1M331 384h1M334 384h1M330 385h1M333 385h1M298 386h1M330 386h1M333 386h1M294 387h1M329 387h1M332 387h1M329 388h1M332 388h1M290 389h1M328 389h1M330 389h1M327 390h1M330 390h1M286 391h1M327 391h1M329 391h1M326 392h1M329 392h1M282 393h1M326 393h1M328 393h1M325 394h1M328 394h1M278 395h1M324 395h1M326 395h1M274 396h1M324 396h1M326 396h1M323 397h1M325 397h1M270 398h1M322 398h1M325 398h1M322 399h1M324 399h1M266 400h1M321 400h1M324 400h1M321 401h2M262 402h1M320 402h1M322 402h1M319 403h1M321 403h1M258 404h1M319 404h1M321 404h1M318 405h1M320 405h1M254 406h1M318 406h1M320 406h1M58 407h1M72 407h1M250 407h1M317 407h1M319 407h1M59 408h1M71 408h1M316 408h1M318 408h1M60 409h11M246 409h1M316 409h2M62 410h1M68 410h1M315 410h1M317 410h1M62 411h1M68 411h1M242 411h1M315 411h2M62 412h1M68 412h1M314 412h1M316 412h1M62 413h1M68 413h1M238 413h1M313 413h1M315 413h1M62 414h1M68 414h1M313 414h2M62 415h1M68 415h1M234 415h1M312 415h2M62 416h1M68 416h1M230 416h1M311 416h1M313 416h1M62 417h1M68 417h1M311 417h2M62 418h1M68 418h1M226 418h1M310 418h1M312 418h1M62 419h1M68 419h1M310 419h2M62 420h1M68 420h1M222 420h1M309 420h2M60 421h11M308 421h2M59 422h1M71 422h1M308 422h2M58 423h1M72 423h1M307 423h2M307 424h2M306 425h2M305 426h2M305 427h1M304 428h2M304 429h1M303 430h2M302 431h2M302 432h1M301 433h2M300 434h2M300 435h1M299 436h2M299 437h1M298 438h1M297 439h2M297 440h1M515 440h5M296 441h1M514 441h1M520 441h1M296 442h1M513 442h1M521 442h1M295 443h1M513 443h1M521 443h1M513 444h1M521 444h1M514 445h1M520 445h1M509 446h7M519 446h7M509 450h17"/>
<path transform="translate(0,.5)" fill="none" stroke="#ffff00" stroke-width="1" d="M438 73h1M444 73h1M448 73h3M437 74h2M444 74h2M447 74h1M451 74h1M436 75h1M438 75h1M444 75h1M446 75h1M452 75h1M438 76h1M443 76h1M445 76h1M452 76h1M438 77h1M442 77h1M446 77h1M452 77h1M438 78h1M442 78h1M447 78h1M451 78h1M438 79h1M442 79h1M448 79h3M438 80h1M442 80h1M449 80h1M438 81h1M442 81h1M450 81h1M439 82h1M441 82h1M451 82h1M440 83h1M452 83h1M440 84h1M452 84h1M440 85h1M452 85h1M440 86h1M452 86h1M440 87h1M452 87h1M451 88h1M450 89h1M745 116h1M752 116h1M746 117h6M747 118h1M750 118h1M747 119h1M750 119h1M747 120h1M750 120h1M747 121h1M750 121h1M747 122h1M750 122h1M746 123h6M745 124h1M752 124h1M328 152h1M747 158h3M746 159h1M750 159h1M746 160h1M750 160h1M744 161h4M749 161h4M744 163h9M746 196h1M749 196h1M752 196h1M745 197h2M748 197h2M751 197h1M745 198h1M747 198h2M750 198h2M744 199h1M747 199h1M750 199h1M746 201h1M749 201h1M752 201h1M745 202h2M748 202h2M751 202h1M745 203h1M747 203h2M750 203h2M744 204h1M747 204h1M750 204h1M425 230h1M426 232h1M427 233h1M427 234h1M428 236h1M429 238h1M430 239h1M31 275h1M43 275h1M32 276h1M42 276h1M32 277h1M42 277h1M33 278h2M40 278h2M35 279h5M33 280h2M40 280h2M32 281h1M42 281h1M32 282h1M42 282h1M31 283h1M43 283h1M31 284h1M43 284h1M31 285h1M43 285h1M31 286h1M43 286h1M31 287h1M43 287h1M32 288h1M42 288h1M32 289h1M42 289h1M33 290h2M40 290h2M35 291h5M747 296h1M745 297h5M747 298h1M155 299h1M747 299h1M749 299h2M747 300h2M751 300h1M747 301h1M751 301h1M155 302h1M747 302h1M750 302h1M747 303h1M750 303h1M751 304h1M156 305h1M156 308h1M295 449h1M292 471h1M292 472h1M288 473h9M292 474h1M292 475h1M292 476h1M292 477h1M296 477h3M292 478h1M295 478h1M299 478h1M292 479h3M300 479h1M292 480h1M300 480h1M292 481h1M300 481h1M292 482h1M299 482h1M292 483h1M298 483h1M292 484h1M298 484h1M292 485h1M298 485h1M299 486h1M300 487h1M407 526h1M411 526h1M415 526h1M408 527h1M410 527h1M412 527h1M414 527h1M416 527h1M409 528h1M413 528h1M417 528h1M421 528h1M409 529h1M413 529h1M417 529h1M420 529h2M409 530h1M413 530h1M417 530h1M419 530h1M421 530h1M409 531h1M413 531h1M417 531h2M421 531h1M409 532h1M413 532h1M417 532h1M421 532h1M409 533h1M413 533h1M417 533h1M421 533h1M409 534h1M413 534h1M417 534h1M421 534h1M409 535h1M413 535h1M417 535h1M421 535h1M409 536h1M413 536h1M417 536h1M421 536h1M409 537h1M413 537h1M417 537h1M421 537h1M409 538h1M413 538h1M417 538h1M421 538h1M409 539h1M413 539h1M418 539h1M420 539h1M409 540h1M413 540h1M419 540h1M418 541h1M420 541h1M417 542h1M421 542h1"/>
<path transform="translate(0,.5)" fill="none" stroke="#0000ff" stroke-width="1" d="M175 56h1M191 56h1M176 57h1M190 57h1M177 58h1M189 58h1M178 59h1M188 59h1M178 60h1M188 60h1M179 61h1M187 61h1M179 62h1M187 62h1M179 63h1M187 63h1M175 64h17M179 65h1M187 65h1M179 66h1M187 66h1M179 67h1M187 67h1M178 68h1M188 68h1M178 69h1M188 69h1M177 70h1M189 70h1M176 71h1M190 71h1M175 72h1M191 72h1M747 136h3M746 137h1M750 137h1M745 138h1M751 138h1M745 139h1M751 139h1M745 140h1M751 140h1M746 141h1M750 141h1M744 142h1M746 142h1M750 142h1M745 143h1M751 143h1M752 144h1M750 176h3M751 177h2M750 178h1M752 178h1M745 179h1M749 179h1M746 180h1M748 180h1M747 181h1M746 182h1M748 182h1M745 183h1M749 183h1M744 184h1M455 213h1M461 213h1M467 213h1M455 214h1M461 214h1M467 214h1M454 215h3M459 215h5M466 215h3M455 216h1M461 216h1M467 216h1M745 216h2M750 216h2M455 217h1M461 217h1M467 217h1M744 217h1M747 217h1M749 217h1M752 217h1M456 218h1M461 218h1M466 218h1M744 218h1M747 218h1M749 218h1M752 218h1M456 219h1M461 219h1M466 219h1M745 219h1M747 219h1M749 219h1M751 219h1M457 220h2M461 220h1M464 220h2M748 220h1M459 221h5M748 221h1M461 222h1M748 222h1M461 223h1M748 223h1M461 224h1M748 224h1M457 225h9M461 226h1M461 227h1M461 228h1M461 229h1M434 236h1M746 246h3M745 247h1M749 247h2M746 248h1M750 248h1M747 249h1M751 249h1M747 250h1M751 250h1M747 251h1M751 251h1M746 252h1M750 252h1M745 253h1M749 253h2M746 254h3M553 307h1M557 307h1M561 307h1M554 308h1M556 308h1M558 308h1M560 308h1M562 308h1M555 309h1M559 309h1M563 309h1M555 310h1M559 310h1M563 310h1M555 311h1M559 311h1M563 311h1M555 312h1M559 312h1M563 312h1M555 313h1M559 313h1M563 313h1M555 314h1M559 314h1M563 314h1M555 315h1M559 315h1M563 315h1M555 316h1M559 316h1M563 316h1M745 316h1M748 316h1M751 316h1M555 317h1M559 317h1M563 317h1M744 317h2M747 317h3M751 317h2M555 318h1M559 318h1M563 318h1M568 318h1M745 318h1M748 318h1M751 318h1M555 319h1M559 319h1M563 319h1M567 319h3M746 319h1M748 319h1M750 319h1M555 320h1M559 320h1M563 320h1M568 320h1M747 320h3M555 321h1M559 321h1M563 321h1M568 321h1M748 321h1M564 322h1M567 322h1M746 322h5M565 323h2M748 323h1M748 324h1M745 326h1M748 326h1M751 326h1M745 327h1M747 327h1M749 327h1M751 327h1M745 328h1M748 328h1M751 328h1M746 329h1M750 329h1M747 330h3M748 331h1M746 332h5M748 333h1M748 334h1M422 384h1M440 394h1M445 394h3M452 394h1M440 395h1M444 395h1M448 395h1M452 395h1M440 396h1M444 396h1M448 396h1M452 396h1M440 397h1M444 397h1M448 397h1M452 397h1M440 398h1M445 398h3M452 398h1M441 399h1M451 399h1M441 400h1M451 400h1M442 401h2M449 401h2M444 402h5M446 403h1M446 404h1M446 405h1M442 406h9M446 407h1M446 408h1M446 409h1M446 410h1M218 425h1M198 442h5M197 443h1M203 443h2M196 444h1M205 444h1M197 445h1M206 445h1M198 446h1M207 446h1M199 447h1M207 447h1M199 448h1M208 448h1M200 449h1M208 449h1M200 450h1M208 450h1M200 451h1M208 451h1M199 452h1M208 452h1M199 453h1M207 453h1M198 454h1M207 454h1M197 455h1M206 455h1M196 456h1M205 456h1M197 457h1M203 457h2M198 458h5M152 510h5M149 511h3M157 511h1M148 512h1M158 512h3M147 513h1M157 513h1M161 513h1M146 514h1M156 514h1M162 514h1M156 515h1M162 515h1M148 516h3M156 516h1M162 516h1M147 517h1M151 517h1M157 517h1M161 517h1M146 518h1M152 518h1M158 518h3M146 519h1M152 519h1M146 520h1M152 520h1M162 520h1M147 521h1M151 521h1M161 521h1M148 522h3M160 522h1M151 523h1M157 523h3M152 524h5"/>
<path transform="translate(0,.5)" fill="none" stroke="#00ffff" stroke-width="1" d="M399 196h1M400 199h1M401 202h1M402 205h1M403 208h1M404 211h1M405 214h1M406 217h1M407 220h1M408 223h1M409 226h1M410 229h1M411 232h1M425 232h1M425 234h1M412 235h1M425 236h1M413 238h1M425 238h1M429 239h1M424 240h1M429 240h1M414 241h1M429 241h2M424 242h1M430 242h1M429 243h2M415 244h1M424 244h1M428 244h1M430 244h1M428 245h1M430 245h1M424 246h1M428 246h2M416 247h1M428 247h2M424 248h1M428 248h2M428 249h2M417 250h1M424 250h1M428 250h2M428 251h2M424 252h1M428 252h2M418 253h1M428 253h2M424 254h1M428 254h2M428 255h2M424 256h1M427 256h1M429 256h1M427 257h2M424 258h1M427 258h2M420 259h1M427 259h2M423 260h1M427 260h2M427 261h2M421 262h1M423 262h1M427 262h2M427 263h2M423 264h1M427 264h2M422 265h1M427 265h2M423 266h1M427 266h2M427 267h2M423 268h1M426 268h2M426 269h2M423 270h1M426 270h2M424 271h1M426 271h2M423 272h1M426 272h2M426 273h2M423 274h1M425 274h3M426 275h2M423 276h1M426 276h2M426 277h2M422 278h1M426 278h1M426 279h1M422 280h1M425 280h3M425 281h2M422 282h1M425 282h2M425 283h2M428 283h1M422 284h1M425 284h2M425 285h2M422 286h1M425 286h2M429 286h1M425 287h2M422 288h1M425 288h2M425 289h1M430 289h1M422 290h1M425 290h1M425 291h1M422 292h1M424 292h2M431 292h1M424 293h2M422 294h1M424 294h2M424 295h2M432 295h1M422 296h1M424 296h2M424 297h2M421 298h1M424 298h2M433 298h1M424 299h2M421 300h1M424 300h1M424 301h1M434 301h1M421 302h1M424 302h1M424 303h1M421 304h1M423 304h2M435 304h1M423 305h2M421 306h1M423 306h2M423 307h2M436 307h1M421 308h1M423 308h2M423 309h2M421 310h1M423 310h2M437 310h1M423 311h1M421 312h1M423 312h1M423 313h1M438 313h1M421 314h1M423 314h1M423 315h1M420 316h1M422 316h2M439 316h1M422 317h2M420 318h1M422 318h2M422 319h2M440 319h1M420 320h1M422 320h2M422 321h2M420 322h1M422 322h1M422 323h1M420 324h1M422 324h1M422 325h1M420 326h1M422 326h1M422 327h1M420 328h3M421 329h2M420 330h2M421 331h2M420 332h3M421 333h1M419 334h1M421 334h1M421 335h1M419 336h1M421 336h1M421 337h1M419 338h1M421 338h1M421 339h1M419 340h3M420 341h2M419 342h3M420 343h2M419 344h2M420 345h1M419 346h2M420 347h1M419 348h2M420 349h1M419 350h2M420 351h1M419 352h2M419 353h2M418 354h2M419 355h1M418 356h2M419 357h1M418 358h2M419 359h1M418 360h2M419 361h1M418 362h2M419 363h1M418 364h2M418 365h1M418 366h1M418 367h1M418 368h1M418 369h1M418 370h1M418 371h1M417 372h2M418 373h1M417 374h2M418 375h1M417 376h1M417 377h1M417 378h1M417 379h1M417 380h1M417 381h1M415 382h1M413 383h1M411 384h1M409 385h1M407 386h1M405 387h1M403 388h1M401 389h1M399 390h1M397 391h1M395 392h1M393 393h1M391 394h1M389 395h1M387 396h1M385 397h1M383 398h1M381 399h1M379 400h1M377 401h1M375 402h1M373 403h1M371 404h1M369 405h1M367 406h1M365 407h1M363 408h1M361 409h1M359 410h1M357 411h1M355 413h1M353 414h1M351 415h1M349 416h1M347 417h1M345 418h1M343 419h1M341 420h1M339 421h1M337 422h1M335 423h1M333 424h1M331 425h1M329 426h1M327 427h1M325 428h1M323 429h1M321 430h1M319 431h1M317 432h1M315 433h1M313 434h1M311 435h1M309 436h1M307 437h1M305 438h1M303 439h1M301 440h1M299 441h1M297 442h1"/>
<path transform="translate(0,.5)" fill="none" stroke="#ffffff" stroke-width="1" d="M285 15h28M275 16h10M313 16h10M265 17h10M323 17h10M255 18h10M333 18h10M248 19h7M343 19h8M243 20h5M351 20h5M238 21h5M244 21h1M356 21h5M234 22h4M244 22h1M361 22h4M230 23h4M244 23h1M365 23h4M226 24h4M245 24h1M369 24h3M223 25h3M245 25h1M372 25h4M220 26h3M245 26h1M376 26h3M217 27h3M245 27h1M379 27h3M214 28h3M245 28h1M382 28h3M211 29h3M245 29h1M385 29h3M207 30h4M246 30h1M388 30h3M204 31h3M246 31h1M389 31h1M391 31h4M201 32h3M246 32h1M389 32h1M395 32h3M199 33h2M246 33h1M388 33h1M398 33h2M197 34h2M246 34h1M388 34h1M400 34h2M195 35h2M247 35h1M388 35h1M402 35h2M192 36h3M247 36h1M387 36h1M404 36h3M190 37h2M247 37h1M387 37h1M407 37h2M188 38h2M247 38h1M387 38h1M409 38h2M186 39h2M247 39h1M386 39h1M411 39h2M183 40h3M248 40h1M386 40h1M413 40h3M181 41h2M248 41h1M386 41h1M416 41h2M179 42h2M248 42h1M385 42h1M418 42h2M177 43h2M248 43h1M385 43h1M420 43h2M174 44h3M248 44h1M385 44h1M422 44h3M172 45h2M248 45h1M384 45h1M425 45h2M170 46h2M249 46h1M384 46h1M427 46h2M168 47h2M249 47h1M384 47h1M429 47h2M166 48h2M249 48h1M383 48h1M431 48h2M164 49h2M249 49h1M383 49h1M433 49h2M162 50h2M249 50h1M383 50h1M435 50h2M160 51h2M250 51h1M382 51h1M437 51h2M158 52h2M250 52h1M382 52h1M439 52h2M157 53h1M250 53h1M381 53h1M441 53h1M155 54h2M250 54h1M381 54h1M442 54h2M153 55h2M250 55h1M381 55h1M444 55h1M152 56h1M251 56h1M380 56h1M445 56h2M150 57h2M251 57h1M380 57h1M447 57h2M149 58h1M251 58h1M380 58h1M449 58h1M147 59h2M251 59h1M379 59h1M450 59h2M146 60h1M251 60h1M287 60h24M379 60h1M452 60h1M144 61h2M251 61h1M270 61h17M294 61h1M311 61h17M379 61h1M453 61h2M143 62h1M252 62h1M264 62h6M273 62h1M294 62h1M314 62h1M328 62h6M378 62h1M455 62h1M141 63h2M252 63h1M260 63h4M273 63h1M294 63h1M314 63h1M334 63h4M378 63h1M456 63h2M140 64h1M252 64h1M254 64h6M273 64h1M294 64h1M314 64h1M334 64h1M338 64h6M378 64h1M458 64h1M138 65h2M248 65h6M273 65h1M294 65h1M314 65h1M334 65h1M344 65h6M377 65h1M459 65h2M136 66h2M244 66h4M252 66h1M274 66h1M294 66h1M314 66h1M334 66h1M350 66h4M377 66h1M461 66h1M135 67h1M240 67h4M252 67h1M274 67h1M294 67h1M314 67h1M333 67h1M354 67h5M377 67h1M462 67h2M133 68h2M236 68h4M253 68h1M274 68h1M294 68h1M313 68h1M333 68h1M355 68h1M359 68h4M376 68h1M464 68h2M132 69h1M232 69h4M253 69h1M274 69h1M294 69h1M313 69h1M333 69h1M355 69h1M363 69h4M376 69h1M466 69h1M130 70h2M229 70h4M253 70h1M274 70h1M294 70h1M313 70h1M333 70h1M354 70h1M367 70h2M376 70h1M467 70h1M129 71h1M227 71h2M232 71h1M253 71h1M274 71h1M294 71h1M313 71h1M333 71h1M354 71h1M369 71h3M375 71h1M468 71h2M128 72h1M224 72h3M233 72h1M254 72h1M274 72h1M294 72h1M313 72h1M333 72h1M354 72h1M372 72h4M470 72h1M126 73h2M220 73h4M233 73h1M254 73h1M275 73h1M294 73h1M313 73h1M333 73h1M354 73h1M375 73h4M471 73h1M125 74h1M217 74h3M233 74h1M254 74h1M275 74h1M294 74h1M313 74h1M332 74h1M353 74h1M375 74h1M379 74h3M472 74h2M124 75h1M214 75h3M234 75h1M254 75h1M275 75h1M288 75h22M313 75h1M332 75h1M353 75h1M374 75h1M382 75h2M474 75h1M123 76h1M212 76h2M234 76h1M254 76h1M272 76h16M310 76h16M332 76h1M353 76h1M374 76h1M384 76h3M475 76h1M122 77h1M209 77h4M234 77h1M255 77h1M265 77h7M326 77h8M353 77h1M373 77h1M387 77h2M476 77h1M121 78h1M207 78h2M212 78h1M234 78h1M255 78h1M259 78h6M334 78h5M353 78h1M373 78h1M389 78h2M477 78h1M120 79h1M205 79h2M213 79h1M235 79h1M255 79h4M339 79h4M352 79h1M373 79h1M391 79h2M478 79h1M119 80h1M203 80h2M213 80h1M235 80h1M251 80h4M343 80h4M352 80h1M372 80h1M393 80h2M479 80h1M118 81h1M201 81h2M214 81h1M235 81h1M247 81h4M343 81h1M347 81h4M352 81h1M372 81h1M394 81h4M480 81h1M117 82h1M199 82h2M214 82h1M236 82h1M244 82h3M343 82h1M351 82h4M372 82h1M394 82h1M398 82h2M481 82h1M115 83h2M197 83h2M214 83h1M236 83h1M240 83h4M342 83h1M355 83h4M371 83h1M393 83h1M400 83h2M482 83h1M114 84h1M194 84h3M215 84h1M236 84h4M342 84h1M359 84h3M371 84h1M393 84h1M402 84h2M483 84h2M113 85h1M192 85h2M215 85h1M232 85h4M342 85h1M362 85h4M370 85h1M392 85h1M404 85h2M485 85h1M111 86h2M190 86h2M193 86h1M215 86h1M229 86h3M342 86h1M366 86h5M392 86h1M406 86h2M486 86h1M110 87h1M112 87h1M188 87h2M194 87h1M216 87h1M227 87h2M230 87h1M341 87h1M370 87h2M391 87h1M408 87h2M487 87h2M109 88h1M113 88h1M187 88h1M194 88h1M216 88h1M225 88h2M230 88h1M341 88h1M372 88h2M391 88h1M410 88h2M489 88h1M108 89h1M114 89h1M185 89h2M195 89h1M217 89h1M221 89h4M231 89h1M341 89h1M374 89h3M391 89h1M412 89h2M490 89h1M107 90h1M115 90h1M183 90h2M195 90h1M217 90h4M231 90h1M341 90h1M377 90h4M390 90h1M413 90h3M491 90h1M106 91h1M116 91h1M181 91h2M196 91h1M214 91h3M231 91h1M341 91h1M381 91h4M390 91h1M412 91h1M416 91h2M492 91h1M105 92h1M117 92h1M180 92h1M196 92h1M212 92h2M232 92h1M340 92h1M385 92h2M389 92h1M412 92h1M418 92h1M493 92h1M104 93h1M117 93h1M178 93h2M197 93h1M210 93h2M232 93h1M340 93h1M387 93h3M411 93h1M419 93h2M494 93h1M103 94h1M118 94h1M176 94h2M197 94h1M208 94h2M232 94h1M340 94h1M389 94h2M411 94h1M421 94h2M495 94h1M102 95h1M119 95h1M174 95h2M198 95h1M206 95h2M233 95h1M340 95h1M391 95h2M410 95h1M423 95h2M496 95h1M101 96h1M120 96h1M173 96h1M176 96h1M198 96h1M204 96h2M233 96h1M340 96h1M393 96h2M409 96h1M425 96h1M497 96h1M100 97h1M121 97h1M171 97h2M176 97h1M199 97h1M202 97h2M233 97h1M339 97h1M395 97h2M409 97h1M426 97h2M498 97h1M99 98h1M122 98h1M170 98h1M177 98h1M199 98h3M234 98h1M339 98h1M397 98h2M408 98h1M428 98h1M499 98h1M98 99h1M123 99h1M169 99h1M177 99h1M198 99h2M234 99h1M339 99h1M399 99h2M408 99h1M429 99h1M500 99h1M97 100h1M124 100h1M167 100h2M178 100h1M196 100h2M234 100h1M339 100h1M401 100h2M407 100h1M430 100h2M501 100h1M96 101h1M125 101h1M166 101h1M179 101h1M194 101h2M235 101h1M338 101h1M403 101h2M407 101h1M431 101h2M502 101h1M95 102h1M126 102h1M164 102h2M179 102h1M192 102h2M235 102h1M338 102h1M405 102h2M430 102h1M433 102h2M503 102h1M94 103h1M127 103h1M163 103h1M180 103h1M190 103h2M235 103h1M338 103h1M407 103h2M430 103h1M435 103h1M504 103h1M93 104h1M127 104h1M162 104h1M180 104h1M188 104h2M236 104h1M338 104h1M409 104h2M429 104h1M436 104h1M505 104h1M92 105h1M128 105h1M160 105h2M181 105h1M187 105h1M236 105h1M283 105h33M338 105h1M411 105h1M428 105h1M437 105h2M506 105h1M91 106h1M129 106h1M159 106h1M181 106h1M185 106h2M236 106h1M276 106h7M316 106h7M337 106h1M412 106h2M427 106h1M439 106h1M507 106h1M90 107h1M130 107h1M157 107h2M182 107h1M184 107h1M237 107h1M269 107h7M323 107h6M337 107h1M414 107h1M427 107h1M440 107h2M508 107h1M89 108h1M131 108h1M156 108h1M159 108h1M182 108h2M237 108h1M263 108h6M329 108h7M337 108h1M415 108h2M426 108h1M442 108h1M509 108h1M88 109h1M132 109h1M155 109h1M159 109h1M181 109h1M237 109h1M258 109h5M336 109h5M417 109h1M425 109h1M443 109h1M510 109h1M87 110h1M133 110h1M153 110h2M160 110h1M179 110h2M238 110h1M254 110h4M341 110h4M418 110h2M424 110h1M444 110h2M511 110h1M86 111h1M134 111h1M152 111h1M161 111h1M177 111h2M238 111h1M251 111h3M345 111h3M420 111h2M424 111h1M446 111h1M512 111h1M86 112h1M135 112h1M151 112h1M162 112h1M175 112h2M238 112h1M248 112h3M348 112h3M422 112h2M447 112h1M511 112h2M85 113h1M136 113h1M149 113h2M162 113h1M174 113h1M239 113h1M245 113h3M351 113h3M424 113h1M448 113h1M510 113h1M513 113h1M84 114h1M136 114h1M148 114h1M163 114h1M173 114h1M239 114h1M241 114h4M354 114h4M425 114h1M447 114h1M449 114h2M509 114h1M514 114h1M83 115h1M137 115h1M147 115h1M164 115h1M171 115h2M238 115h1M240 115h1M358 115h3M426 115h1M446 115h1M451 115h1M508 115h1M515 115h1M83 116h1M138 116h1M146 116h1M165 116h1M170 116h1M235 116h3M361 116h3M427 116h2M446 116h1M452 116h1M507 116h1M515 116h1M82 117h1M139 117h1M145 117h1M165 117h1M169 117h1M232 117h3M364 117h3M429 117h1M445 117h1M453 117h1M505 117h2M516 117h1M81 118h1M140 118h1M144 118h1M166 118h1M168 118h1M229 118h3M367 118h3M430 118h1M444 118h1M454 118h1M504 118h1M517 118h1M80 119h1M141 119h3M166 119h2M226 119h3M370 119h3M431 119h2M443 119h1M455 119h2M503 119h1M518 119h1M79 120h1M141 120h2M165 120h1M224 120h2M373 120h2M433 120h1M442 120h1M457 120h1M502 120h1M519 120h1M78 121h1M140 121h1M143 121h1M164 121h1M222 121h2M375 121h2M434 121h1M441 121h1M458 121h1M501 121h1M520 121h1M77 122h1M139 122h1M144 122h1M162 122h2M219 122h3M377 122h2M433 122h1M435 122h2M441 122h1M459 122h1M500 122h1M521 122h1M76 123h1M138 123h1M145 123h1M161 123h1M217 123h2M379 123h2M432 123h1M437 123h1M440 123h1M460 123h1M499 123h1M522 123h1M75 124h1M136 124h2M146 124h1M160 124h1M215 124h2M381 124h2M432 124h1M438 124h2M461 124h1M498 124h1M523 124h1M74 125h1M135 125h1M147 125h1M158 125h2M213 125h2M383 125h2M431 125h1M439 125h1M462 125h2M497 125h1M524 125h1M73 126h1M134 126h1M147 126h1M157 126h1M211 126h2M385 126h2M430 126h1M440 126h2M464 126h1M495 126h2M525 126h1M73 127h1M133 127h1M148 127h1M156 127h1M209 127h2M387 127h2M429 127h1M442 127h1M463 127h1M465 127h1M494 127h1M525 127h1M72 128h1M132 128h1M149 128h1M155 128h1M207 128h2M389 128h2M429 128h1M443 128h1M462 128h1M466 128h1M493 128h1M526 128h1M71 129h1M131 129h1M150 129h1M154 129h1M205 129h2M391 129h2M428 129h1M444 129h1M461 129h1M467 129h1M492 129h1M527 129h1M70 130h1M130 130h1M151 130h3M203 130h2M393 130h2M427 130h1M445 130h1M460 130h1M468 130h1M491 130h1M528 130h1M70 131h1M129 131h1M151 131h1M202 131h1M395 131h2M426 131h1M446 131h2M459 131h1M469 131h1M490 131h1M528 131h1M69 132h1M128 132h1M150 132h1M200 132h2M397 132h2M425 132h1M448 132h1M458 132h1M470 132h1M489 132h1M529 132h1M68 133h1M127 133h1M149 133h1M199 133h1M399 133h1M425 133h1M449 133h1M457 133h1M471 133h1M488 133h1M530 133h1M68 134h1M126 134h1M148 134h1M197 134h2M400 134h2M424 134h1M450 134h1M456 134h1M472 134h1M487 134h1M530 134h1M67 135h1M125 135h1M127 135h1M147 135h1M196 135h1M332 135h1M402 135h1M423 135h1M451 135h1M455 135h1M473 135h1M486 135h1M531 135h1M66 136h1M124 136h1M128 136h1M146 136h1M194 136h2M332 136h1M403 136h2M422 136h1M452 136h1M454 136h1M474 136h1M484 136h2M532 136h1M66 137h1M124 137h1M129 137h1M145 137h1M192 137h2M332 137h1M405 137h2M421 137h1M453 137h1M474 137h1M483 137h1M532 137h1M65 138h1M123 138h1M130 138h1M144 138h1M191 138h1M331 138h1M407 138h1M421 138h1M454 138h1M475 138h1M482 138h1M533 138h1M65 139h1M122 139h1M131 139h1M143 139h1M189 139h2M331 139h1M408 139h2M420 139h1M455 139h1M476 139h1M481 139h1M533 139h1M64 140h1M121 140h1M132 140h1M142 140h1M188 140h1M331 140h1M353 140h1M410 140h1M419 140h1M456 140h1M477 140h1M480 140h1M534 140h1M63 141h1M120 141h1M133 141h1M141 141h1M186 141h2M331 141h1M353 141h1M411 141h2M418 141h1M457 141h1M478 141h2M535 141h1M63 142h1M119 142h1M134 142h1M140 142h1M185 142h1M331 142h1M352 142h1M413 142h1M418 142h1M458 142h1M478 142h2M535 142h1M62 143h1M119 143h1M135 143h1M139 143h1M184 143h1M331 143h1M352 143h1M414 143h1M417 143h1M459 143h1M477 143h1M479 143h1M536 143h1M61 144h1M118 144h1M136 144h1M138 144h1M182 144h2M330 144h1M352 144h1M415 144h2M460 144h1M476 144h1M480 144h1M537 144h1M61 145h1M117 145h1M137 145h1M181 145h1M330 145h1M351 145h1M417 145h1M461 145h1M475 145h1M481 145h1M537 145h1M60 146h1M116 146h1M136 146h1M180 146h1M330 146h1M351 146h1M418 146h1M462 146h1M473 146h2M482 146h1M538 146h1M59 147h1M115 147h1M135 147h1M179 147h1M351 147h1M419 147h1M463 147h1M472 147h1M483 147h1M539 147h1M59 148h1M114 148h1M134 148h1M177 148h2M350 148h1M420 148h1M464 148h1M471 148h1M484 148h1M539 148h1M58 149h1M113 149h1M133 149h1M176 149h1M350 149h1M421 149h2M465 149h1M470 149h1M485 149h1M540 149h1M57 150h1M113 150h1M132 150h1M175 150h1M350 150h1M423 150h1M466 150h1M469 150h1M485 150h1M541 150h1M57 151h1M112 151h1M114 151h1M131 151h1M174 151h1M349 151h1M424 151h1M467 151h2M486 151h1M541 151h1M56 152h1M111 152h1M115 152h2M130 152h1M173 152h1M349 152h1M425 152h1M468 152h1M487 152h1M542 152h1M55 153h1M110 153h1M117 153h1M130 153h1M171 153h2M426 153h2M468 153h1M488 153h1M543 153h1M55 154h1M110 154h1M118 154h1M129 154h1M170 154h1M428 154h1M469 154h1M488 154h1M543 154h1M54 155h1M109 155h1M119 155h1M128 155h1M169 155h1M429 155h1M470 155h1M489 155h1M544 155h1M54 156h1M108 156h1M120 156h1M127 156h1M168 156h1M430 156h1M471 156h1M490 156h1M544 156h1M53 157h1M107 157h1M121 157h2M126 157h1M167 157h1M431 157h1M472 157h1M491 157h1M545 157h1M52 158h1M107 158h1M123 158h1M125 158h1M166 158h1M432 158h1M473 158h1M491 158h1M546 158h1M52 159h1M106 159h1M124 159h2M165 159h1M433 159h1M473 159h1M489 159h2M492 159h1M546 159h1M51 160h1M105 160h1M124 160h1M164 160h1M434 160h1M474 160h1M488 160h1M493 160h1M547 160h1M51 161h1M105 161h1M123 161h1M163 161h1M435 161h1M475 161h1M487 161h1M493 161h1M547 161h1M50 162h1M104 162h1M122 162h1M162 162h1M436 162h1M476 162h1M485 162h2M494 162h1M548 162h1M50 163h1M103 163h1M122 163h1M161 163h1M437 163h1M476 163h1M484 163h1M495 163h1M548 163h1M49 164h1M102 164h1M121 164h1M160 164h1M438 164h1M477 164h1M483 164h1M496 164h1M549 164h1M49 165h1M102 165h1M120 165h2M159 165h1M439 165h1M478 165h1M481 165h2M496 165h1M549 165h1M48 166h1M101 166h1M119 166h1M122 166h2M158 166h1M440 166h1M479 166h2M497 166h1M550 166h1M48 167h1M100 167h2M119 167h1M124 167h1M157 167h1M441 167h1M479 167h1M498 167h1M550 167h1M47 168h1M100 168h1M102 168h2M118 168h1M125 168h1M156 168h1M442 168h1M480 168h1M498 168h1M551 168h1M47 169h1M99 169h1M104 169h1M117 169h1M126 169h2M155 169h1M443 169h1M481 169h1M499 169h1M551 169h1M46 170h1M98 170h1M105 170h1M116 170h1M128 170h1M154 170h1M444 170h1M482 170h1M500 170h1M552 170h1M46 171h1M97 171h1M106 171h2M115 171h1M129 171h1M153 171h1M445 171h1M483 171h1M501 171h1M552 171h1M45 172h1M97 172h1M108 172h1M115 172h1M130 172h2M153 172h1M445 172h1M483 172h1M501 172h1M553 172h1M45 173h1M96 173h1M109 173h1M114 173h1M132 173h1M152 173h1M446 173h1M484 173h1M502 173h1M553 173h1M44 174h1M95 174h1M110 174h2M113 174h1M133 174h1M151 174h1M447 174h1M485 174h1M503 174h1M554 174h1M44 175h1M95 175h1M112 175h1M134 175h2M150 175h1M448 175h1M486 175h1M503 175h1M554 175h1M44 176h1M94 176h1M112 176h1M136 176h1M149 176h1M449 176h1M486 176h1M501 176h2M504 176h1M554 176h1M43 177h1M94 177h1M111 177h1M137 177h1M148 177h1M450 177h1M487 177h1M499 177h2M504 177h1M555 177h1M43 178h1M93 178h1M111 178h1M138 178h2M148 178h1M450 178h1M487 178h1M497 178h2M505 178h1M555 178h1M42 179h1M93 179h1M110 179h1M140 179h1M147 179h1M416 179h1M451 179h1M488 179h1M496 179h1M505 179h1M556 179h1M42 180h1M92 180h1M110 180h1M141 180h1M146 180h1M415 180h1M452 180h1M488 180h1M494 180h2M506 180h1M556 180h1M41 181h1M91 181h1M109 181h1M142 181h2M145 181h1M414 181h1M453 181h1M489 181h1M492 181h2M507 181h1M557 181h1M41 182h1M91 182h1M108 182h1M144 182h1M413 182h1M454 182h1M490 182h2M507 182h1M557 182h1M40 183h1M90 183h1M108 183h1M144 183h1M412 183h1M454 183h1M490 183h1M508 183h1M558 183h1M40 184h1M90 184h1M107 184h1M143 184h1M412 184h1M455 184h1M491 184h1M508 184h1M558 184h1M40 185h1M89 185h2M106 185h1M142 185h1M411 185h1M456 185h1M492 185h1M509 185h1M558 185h1M39 186h1M89 186h1M91 186h2M106 186h1M141 186h1M410 186h1M457 186h1M492 186h1M509 186h1M559 186h1M39 187h1M88 187h1M93 187h2M105 187h1M141 187h1M409 187h1M457 187h1M493 187h1M510 187h1M559 187h1M38 188h1M87 188h1M95 188h1M104 188h1M140 188h1M408 188h1M458 188h1M494 188h1M511 188h1M560 188h1M38 189h1M87 189h1M96 189h2M104 189h1M139 189h1M459 189h1M494 189h1M511 189h1M560 189h1M37 190h1M86 190h1M98 190h2M103 190h1M139 190h1M459 190h1M495 190h1M512 190h1M561 190h1M37 191h1M86 191h1M100 191h2M103 191h1M138 191h1M460 191h1M495 191h1M512 191h1M561 191h1M36 192h1M85 192h1M102 192h1M137 192h1M461 192h1M496 192h1M513 192h1M562 192h1M36 193h1M85 193h1M102 193h1M137 193h1M461 193h1M496 193h1M512 193h2M562 193h1M36 194h1M84 194h1M101 194h1M136 194h1M462 194h1M496 194h2M510 194h2M514 194h1M562 194h1M35 195h1M84 195h1M101 195h1M136 195h1M462 195h1M494 195h2M497 195h1M508 195h2M514 195h1M563 195h1M35 196h1M84 196h1M100 196h1M135 196h1M463 196h1M492 196h2M498 196h1M506 196h2M514 196h1M563 196h1M34 197h1M83 197h1M100 197h1M134 197h1M464 197h1M490 197h2M498 197h1M504 197h2M515 197h1M564 197h1M34 198h1M83 198h1M99 198h1M134 198h1M464 198h1M488 198h2M499 198h1M502 198h2M515 198h1M564 198h1M33 199h1M82 199h1M99 199h1M133 199h1M465 199h1M487 199h1M499 199h3M516 199h1M565 199h1M33 200h1M82 200h1M98 200h1M132 200h1M466 200h1M485 200h2M500 200h1M516 200h1M565 200h1M32 201h1M81 201h1M98 201h1M132 201h1M466 201h1M483 201h2M500 201h1M517 201h1M566 201h1M32 202h1M81 202h1M97 202h1M131 202h1M467 202h1M481 202h2M501 202h1M517 202h1M566 202h1M32 203h1M80 203h1M97 203h1M130 203h1M468 203h1M480 203h1M501 203h1M518 203h1M566 203h1M31 204h1M80 204h3M96 204h1M130 204h1M468 204h1M478 204h2M502 204h1M518 204h1M567 204h1M31 205h1M79 205h1M83 205h2M96 205h1M129 205h1M469 205h1M476 205h2M502 205h1M519 205h1M567 205h1M31 206h1M79 206h1M85 206h2M95 206h1M129 206h1M469 206h1M474 206h2M503 206h1M519 206h1M567 206h1M30 207h1M78 207h1M87 207h3M95 207h1M128 207h1M470 207h1M472 207h2M503 207h1M520 207h1M568 207h1M30 208h1M78 208h1M90 208h2M94 208h1M128 208h1M470 208h2M504 208h1M520 208h1M568 208h1M30 209h3M77 209h1M92 209h3M127 209h1M471 209h1M504 209h1M521 209h1M568 209h1M30 210h1M33 210h3M77 210h1M93 210h1M127 210h1M441 210h1M471 210h1M505 210h1M521 210h1M568 210h1M29 211h1M36 211h3M77 211h1M93 211h1M126 211h1M441 211h1M472 211h1M505 211h1M521 211h1M569 211h1M29 212h1M39 212h3M76 212h1M92 212h1M126 212h1M440 212h1M472 212h1M506 212h1M520 212h3M569 212h1M29 213h1M42 213h3M76 213h1M92 213h1M125 213h1M440 213h1M473 213h1M506 213h1M518 213h2M522 213h1M569 213h1M28 214h1M45 214h3M75 214h1M91 214h1M125 214h1M439 214h1M473 214h1M507 214h1M515 214h3M523 214h1M570 214h1M28 215h1M48 215h3M75 215h1M91 215h1M124 215h1M439 215h1M474 215h1M507 215h1M512 215h3M523 215h1M570 215h1M28 216h1M51 216h2M75 216h1M91 216h1M124 216h1M438 216h1M474 216h1M507 216h1M510 216h2M523 216h1M570 216h1M27 217h1M53 217h3M74 217h1M90 217h1M123 217h1M438 217h1M475 217h1M508 217h2M524 217h1M571 217h1M27 218h1M56 218h3M74 218h1M90 218h1M123 218h1M438 218h1M475 218h1M508 218h1M524 218h1M571 218h1M27 219h1M59 219h3M74 219h1M90 219h1M122 219h1M437 219h1M476 219h1M508 219h1M524 219h1M571 219h1M26 220h1M62 220h3M73 220h1M90 220h1M122 220h1M437 220h1M476 220h1M508 220h1M525 220h1M572 220h1M26 221h1M65 221h3M73 221h1M89 221h1M122 221h1M436 221h1M476 221h1M509 221h1M525 221h1M572 221h1M26 222h1M68 222h3M73 222h1M89 222h1M121 222h1M436 222h1M477 222h1M509 222h1M525 222h1M572 222h1M25 223h1M71 223h4M89 223h1M121 223h1M435 223h1M477 223h1M509 223h1M525 223h1M573 223h1M25 224h1M72 224h1M75 224h2M89 224h1M120 224h1M435 224h1M478 224h1M509 224h1M526 224h1M573 224h1M25 225h1M72 225h1M77 225h3M88 225h1M120 225h1M478 225h1M510 225h1M526 225h1M573 225h1M24 226h1M72 226h1M80 226h3M88 226h1M119 226h1M450 226h1M479 226h1M510 226h1M526 226h1M574 226h1M24 227h1M71 227h1M83 227h2M87 227h1M119 227h1M448 227h2M479 227h1M511 227h1M527 227h1M574 227h1M24 228h1M71 228h1M85 228h3M119 228h1M447 228h1M479 228h1M511 228h1M527 228h1M574 228h1M24 229h1M70 229h1M86 229h1M118 229h1M445 229h2M480 229h1M512 229h1M528 229h1M574 229h1M23 230h1M70 230h1M86 230h1M118 230h1M444 230h1M480 230h1M512 230h1M528 230h1M575 230h1M23 231h1M70 231h1M86 231h1M118 231h1M443 231h1M480 231h1M512 231h1M528 231h1M575 231h1M23 232h1M69 232h1M85 232h1M117 232h1M441 232h2M481 232h1M513 232h1M527 232h3M575 232h1M23 233h1M69 233h1M85 233h1M117 233h1M440 233h1M481 233h1M513 233h1M524 233h3M529 233h1M575 233h1M22 234h1M69 234h1M85 234h1M117 234h1M481 234h1M513 234h1M520 234h4M529 234h1M576 234h1M22 235h1M69 235h1M85 235h1M116 235h1M441 235h2M482 235h1M513 235h1M517 235h3M529 235h1M576 235h1M22 236h1M68 236h1M84 236h1M116 236h1M443 236h2M482 236h1M514 236h3M530 236h1M576 236h1M22 237h1M68 237h1M84 237h1M116 237h1M445 237h2M482 237h1M514 237h1M530 237h1M576 237h1M21 238h1M68 238h1M84 238h1M115 238h1M447 238h2M483 238h1M514 238h1M530 238h1M577 238h1M21 239h1M68 239h1M84 239h1M115 239h1M449 239h3M483 239h1M514 239h1M530 239h1M577 239h1M21 240h1M67 240h1M83 240h1M115 240h1M452 240h2M483 240h1M515 240h1M531 240h1M577 240h1M21 241h1M67 241h1M83 241h1M114 241h1M454 241h2M484 241h1M515 241h1M531 241h1M577 241h1M21 242h1M67 242h1M83 242h1M114 242h1M456 242h2M484 242h1M515 242h1M531 242h1M577 242h1M20 243h1M67 243h3M83 243h1M114 243h1M484 243h1M515 243h1M531 243h1M578 243h1M20 244h1M66 244h1M70 244h4M82 244h1M114 244h1M484 244h1M516 244h1M532 244h1M575 244h4M20 245h1M66 245h1M74 245h5M82 245h1M113 245h1M485 245h1M516 245h1M532 245h1M569 245h6M578 245h1M20 246h1M66 246h1M79 246h4M113 246h1M485 246h1M516 246h1M532 246h1M564 246h5M578 246h1M20 247h1M66 247h1M81 247h1M113 247h1M485 247h1M517 247h1M532 247h1M559 247h5M578 247h1M19 248h1M65 248h1M81 248h1M112 248h1M486 248h1M517 248h1M533 248h1M553 248h6M579 248h1M19 249h1M65 249h1M81 249h1M112 249h1M486 249h1M517 249h1M533 249h1M548 249h5M579 249h1M19 250h1M65 250h1M81 250h1M112 250h1M486 250h1M517 250h1M533 250h1M543 250h5M579 250h1M19 251h1M65 251h1M80 251h1M111 251h1M487 251h1M518 251h1M533 251h1M537 251h6M579 251h1M19 252h1M65 252h1M80 252h1M111 252h1M487 252h1M518 252h1M531 252h6M579 252h1M19 253h1M65 253h1M80 253h1M111 253h1M487 253h1M518 253h1M526 253h5M533 253h1M579 253h1M19 254h1M64 254h1M80 254h1M110 254h1M488 254h1M518 254h1M522 254h4M534 254h1M579 254h1M18 255h1M64 255h1M79 255h1M110 255h1M488 255h1M519 255h3M534 255h1M580 255h1M18 256h1M64 256h1M79 256h1M110 256h1M488 256h1M519 256h1M534 256h1M580 256h1M18 257h1M64 257h1M79 257h1M110 257h1M488 257h1M519 257h1M534 257h1M580 257h1M18 258h1M64 258h1M79 258h1M109 258h1M489 258h1M519 258h1M534 258h1M580 258h1M18 259h1M64 259h1M78 259h1M109 259h1M489 259h1M520 259h1M534 259h1M580 259h1M18 260h1M63 260h1M78 260h1M109 260h1M489 260h1M520 260h1M535 260h1M580 260h1M18 261h1M63 261h1M78 261h1M109 261h1M489 261h1M520 261h1M535 261h1M580 261h1M18 262h1M63 262h1M78 262h1M109 262h1M489 262h1M520 262h1M535 262h1M580 262h1M18 263h1M63 263h1M78 263h1M108 263h1M490 263h1M520 263h1M535 263h1M580 263h1M18 264h1M62 264h5M78 264h1M108 264h1M490 264h1M520 264h1M536 264h1M580 264h1M17 265h1M62 265h1M67 265h7M77 265h1M108 265h1M490 265h1M521 265h1M536 265h1M581 265h1M17 266h1M62 266h1M74 266h4M108 266h1M490 266h1M521 266h1M536 266h1M581 266h1M17 267h1M62 267h1M77 267h1M108 267h1M490 267h1M521 267h1M536 267h1M581 267h1M17 268h1M62 268h1M77 268h1M108 268h1M490 268h1M521 268h1M536 268h1M581 268h1M17 269h1M62 269h1M77 269h1M107 269h1M491 269h1M521 269h1M536 269h1M581 269h1M17 270h1M61 270h1M77 270h1M107 270h1M491 270h1M521 270h1M537 270h1M581 270h1M17 271h1M61 271h1M77 271h1M107 271h1M491 271h1M521 271h1M537 271h1M581 271h1M17 272h1M61 272h1M76 272h1M107 272h1M491 272h1M522 272h1M537 272h1M581 272h1M17 273h1M61 273h1M76 273h1M107 273h1M491 273h1M522 273h1M533 273h5M581 273h1M17 274h1M61 274h1M76 274h1M107 274h1M491 274h1M522 274h1M526 274h7M537 274h1M581 274h1M16 275h1M61 275h1M76 275h1M107 275h1M491 275h1M522 275h4M537 275h1M582 275h1M16 276h1M61 276h1M76 276h1M106 276h1M492 276h1M522 276h1M537 276h1M582 276h1M16 277h1M61 277h1M76 277h1M106 277h1M492 277h1M522 277h1M537 277h1M582 277h1M16 278h1M61 278h1M76 278h1M106 278h1M492 278h1M522 278h1M537 278h1M582 278h1M16 279h1M61 279h1M76 279h1M106 279h1M492 279h1M522 279h1M537 279h1M582 279h1M16 280h1M61 280h1M76 280h1M106 280h1M492 280h1M522 280h1M537 280h1M582 280h1M16 281h1M61 281h1M76 281h1M106 281h1M492 281h1M522 281h1M537 281h1M582 281h1M16 282h1M61 282h1M76 282h1M106 282h1M492 282h1M522 282h1M537 282h1M582 282h1M16 283h1M61 283h1M76 283h1M105 283h1M493 283h1M522 283h1M537 283h1M582 283h1M16 284h1M61 284h7M76 284h1M105 284h1M493 284h1M522 284h1M537 284h1M582 284h1M15 285h1M61 285h1M68 285h9M105 285h1M493 285h1M522 285h1M537 285h1M583 285h1M15 286h1M61 286h1M76 286h1M105 286h1M493 286h1M522 286h1M537 286h1M583 286h1M15 287h1M60 287h1M76 287h1M105 287h1M493 287h1M522 287h1M538 287h1M583 287h1M15 288h1M60 288h1M75 288h1M105 288h1M493 288h1M523 288h1M538 288h1M583 288h1M15 289h1M60 289h1M75 289h1M105 289h1M493 289h1M523 289h1M538 289h1M583 289h1M15 290h1M60 290h1M75 290h1M105 290h1M493 290h1M523 290h1M538 290h1M583 290h1M15 291h1M60 291h1M75 291h1M105 291h1M493 291h1M523 291h1M538 291h1M583 291h1M15 292h1M60 292h1M75 292h1M105 292h1M493 292h1M523 292h1M538 292h1M583 292h1M15 293h1M60 293h1M75 293h1M105 293h1M493 293h1M523 293h1M538 293h1M583 293h1M15 294h1M60 294h1M75 294h1M105 294h1M493 294h1M523 294h16M583 294h1M15 295h1M60 295h1M75 295h1M105 295h1M493 295h1M523 295h1M538 295h1M583 295h1M15 296h1M60 296h1M75 296h1M105 296h1M493 296h1M523 296h1M538 296h1M583 296h1M15 297h1M60 297h1M75 297h1M105 297h1M493 297h1M523 297h1M538 297h1M583 297h1M15 298h1M60 298h1M75 298h1M105 298h1M131 298h6M493 298h1M523 298h1M538 298h1M583 298h1M15 299h1M60 299h1M75 299h31M137 299h7M493 299h31M538 299h1M583 299h1M15 300h1M60 300h1M75 300h1M105 300h1M493 300h1M523 300h1M538 300h1M583 300h1M15 301h1M60 301h1M75 301h1M105 301h1M493 301h1M523 301h1M538 301h1M583 301h1M15 302h1M60 302h1M75 302h1M105 302h1M493 302h1M523 302h1M538 302h1M583 302h1M15 303h1M60 303h1M75 303h1M105 303h1M493 303h1M523 303h1M538 303h1M583 303h1M15 304h1M60 304h16M105 304h1M493 304h1M523 304h1M538 304h1M583 304h1M15 305h1M60 305h1M75 305h1M105 305h1M493 305h1M523 305h1M538 305h1M583 305h1M15 306h1M60 306h1M75 306h1M105 306h1M493 306h1M523 306h1M538 306h1M583 306h1M15 307h1M60 307h1M75 307h1M105 307h1M493 307h1M523 307h1M538 307h1M583 307h1M15 308h1M60 308h1M75 308h1M105 308h1M493 308h1M523 308h1M538 308h1M583 308h1M15 309h1M60 309h1M75 309h1M105 309h1M493 309h1M523 309h1M538 309h1M583 309h1M15 310h1M60 310h1M76 310h1M105 310h1M493 310h1M522 310h1M538 310h1M583 310h1M15 311h1M61 311h1M76 311h1M105 311h1M493 311h1M522 311h1M537 311h1M583 311h1M15 312h1M61 312h1M76 312h1M105 312h1M493 312h1M522 312h1M537 312h1M583 312h1M16 313h1M61 313h1M76 313h1M105 313h1M493 313h1M522 313h8M537 313h1M582 313h1M16 314h1M61 314h1M76 314h1M105 314h1M493 314h1M522 314h1M530 314h8M582 314h1M16 315h1M61 315h1M76 315h1M105 315h1M493 315h1M522 315h1M537 315h1M582 315h1M16 316h1M61 316h1M76 316h1M106 316h1M492 316h1M522 316h1M537 316h1M582 316h1M16 317h1M61 317h1M76 317h1M106 317h1M492 317h1M522 317h1M537 317h1M582 317h1M16 318h1M61 318h1M76 318h1M106 318h1M492 318h1M522 318h1M537 318h1M582 318h1M16 319h1M61 319h1M76 319h1M106 319h1M492 319h1M522 319h1M537 319h1M582 319h1M16 320h1M61 320h1M76 320h1M106 320h1M492 320h1M522 320h1M537 320h1M582 320h1M16 321h1M61 321h1M76 321h1M106 321h1M492 321h1M522 321h1M537 321h1M582 321h1M16 322h1M61 322h1M76 322h1M106 322h1M453 322h3M492 322h1M522 322h1M537 322h1M582 322h1M17 323h1M61 323h1M73 323h4M107 323h1M456 323h6M491 323h1M522 323h1M537 323h1M581 323h1M17 324h1M61 324h1M66 324h7M76 324h1M107 324h1M462 324h4M491 324h1M522 324h1M537 324h1M581 324h1M17 325h1M61 325h5M76 325h1M107 325h1M491 325h1M522 325h1M537 325h1M581 325h1M17 326h1M61 326h1M77 326h1M107 326h1M491 326h1M521 326h1M537 326h1M581 326h1M17 327h1M61 327h1M77 327h1M107 327h1M491 327h1M521 327h1M537 327h1M581 327h1M17 328h1M62 328h1M77 328h1M107 328h1M491 328h1M521 328h1M536 328h1M581 328h1M17 329h1M62 329h1M77 329h1M108 329h1M490 329h1M521 329h1M536 329h1M581 329h1M17 330h1M62 330h1M77 330h1M108 330h1M490 330h1M521 330h1M536 330h1M581 330h1M17 331h1M62 331h1M77 331h1M108 331h1M490 331h1M521 331h1M536 331h1M581 331h1M17 332h1M62 332h1M77 332h1M108 332h1M490 332h1M521 332h4M536 332h1M581 332h1M18 333h1M62 333h1M77 333h1M108 333h1M490 333h1M521 333h1M525 333h7M536 333h1M580 333h1M18 334h1M63 334h1M78 334h1M108 334h1M490 334h1M520 334h1M532 334h4M580 334h1M18 335h1M63 335h1M78 335h1M108 335h1M490 335h1M520 335h1M535 335h1M580 335h1M18 336h1M63 336h1M78 336h1M109 336h1M489 336h1M520 336h1M535 336h1M580 336h1M18 337h1M63 337h1M78 337h1M109 337h1M489 337h1M520 337h1M535 337h1M580 337h1M18 338h1M64 338h1M78 338h1M109 338h1M489 338h1M520 338h1M534 338h1M580 338h1M18 339h1M64 339h1M79 339h1M109 339h1M489 339h1M519 339h1M534 339h1M580 339h1M18 340h1M64 340h1M79 340h1M109 340h1M489 340h1M519 340h1M534 340h1M580 340h1M18 341h1M64 341h1M79 341h1M110 341h1M488 341h1M519 341h1M534 341h1M580 341h1M18 342h1M64 342h1M79 342h1M110 342h1M488 342h1M519 342h1M534 342h1M580 342h1M19 343h1M64 343h1M77 343h4M110 343h1M488 343h1M518 343h1M534 343h1M579 343h1M19 344h1M65 344h1M72 344h5M80 344h1M110 344h1M488 344h1M518 344h1M533 344h1M579 344h1M19 345h1M65 345h1M68 345h4M80 345h1M111 345h1M487 345h1M518 345h1M533 345h1M579 345h1M19 346h1M62 346h6M80 346h1M111 346h1M487 346h1M518 346h1M533 346h1M579 346h1M19 347h1M56 347h6M65 347h1M81 347h1M111 347h1M487 347h1M517 347h1M533 347h1M579 347h1M19 348h1M51 348h5M65 348h1M81 348h1M112 348h1M486 348h1M517 348h1M533 348h1M579 348h1M19 349h1M46 349h5M65 349h1M81 349h1M112 349h1M486 349h1M517 349h1M533 349h1M579 349h1M19 350h1M40 350h6M66 350h1M81 350h1M112 350h1M486 350h1M517 350h1M532 350h1M579 350h1M20 351h1M35 351h5M66 351h1M82 351h1M113 351h1M485 351h1M516 351h1M532 351h1M578 351h1M20 352h1M30 352h5M66 352h1M82 352h1M113 352h1M485 352h1M516 352h4M532 352h1M578 352h1M20 353h1M24 353h6M66 353h1M82 353h1M113 353h1M485 353h1M516 353h1M520 353h4M532 353h1M578 353h1M20 354h4M67 354h1M82 354h1M114 354h1M484 354h1M516 354h1M524 354h5M531 354h1M578 354h1M20 355h1M67 355h1M83 355h1M114 355h1M484 355h1M515 355h1M529 355h3M578 355h1M21 356h1M67 356h1M83 356h1M114 356h1M484 356h1M515 356h1M531 356h1M577 356h1M21 357h1M67 357h1M83 357h1M114 357h1M484 357h1M515 357h1M531 357h1M577 357h1M21 358h1M67 358h1M83 358h1M115 358h1M483 358h1M515 358h1M531 358h1M577 358h1M21 359h1M68 359h1M84 359h1M115 359h1M483 359h1M514 359h1M530 359h1M577 359h1M21 360h1M68 360h1M84 360h1M115 360h1M483 360h1M514 360h1M530 360h1M577 360h1M22 361h1M68 361h1M84 361h1M116 361h1M482 361h1M514 361h1M530 361h1M576 361h1M22 362h1M68 362h1M82 362h2M85 362h1M116 362h1M482 362h1M513 362h1M530 362h1M576 362h1M22 363h1M69 363h1M79 363h3M85 363h1M116 363h1M482 363h1M513 363h1M529 363h1M576 363h1M22 364h1M69 364h1M75 364h4M85 364h1M117 364h1M481 364h1M513 364h1M529 364h1M576 364h1M23 365h1M69 365h1M72 365h3M85 365h1M117 365h1M481 365h1M513 365h1M529 365h1M575 365h1M23 366h1M69 366h3M86 366h1M117 366h1M481 366h1M512 366h1M529 366h1M575 366h1M23 367h1M70 367h1M86 367h1M118 367h1M480 367h1M512 367h1M528 367h1M575 367h1M23 368h1M70 368h1M86 368h1M118 368h1M480 368h1M512 368h1M528 368h1M575 368h1M24 369h1M71 369h1M86 369h1M118 369h1M480 369h1M512 369h1M527 369h1M574 369h1M24 370h1M71 370h1M87 370h1M119 370h1M479 370h1M511 370h3M527 370h1M574 370h1M24 371h1M71 371h1M87 371h1M119 371h1M479 371h1M511 371h1M514 371h2M527 371h1M574 371h1M25 372h1M72 372h1M88 372h1M119 372h1M479 372h1M510 372h1M516 372h3M526 372h1M573 372h1M25 373h1M72 373h1M88 373h1M120 373h1M478 373h1M510 373h1M519 373h3M526 373h1M573 373h1M25 374h1M72 374h1M89 374h1M120 374h1M478 374h1M509 374h1M522 374h2M526 374h1M573 374h1M25 375h1M73 375h1M89 375h1M121 375h1M477 375h1M509 375h1M524 375h4M573 375h1M26 376h1M73 376h1M89 376h1M121 376h1M477 376h1M509 376h1M525 376h1M528 376h3M572 376h1M26 377h1M73 377h1M90 377h1M122 377h1M476 377h1M508 377h1M525 377h1M531 377h3M572 377h1M26 378h1M73 378h1M90 378h1M122 378h1M476 378h1M508 378h1M525 378h1M534 378h3M572 378h1M27 379h1M74 379h1M90 379h1M123 379h1M475 379h1M508 379h1M524 379h1M537 379h3M571 379h1M27 380h1M74 380h1M90 380h1M123 380h1M475 380h1M508 380h1M524 380h1M540 380h3M571 380h1M27 381h1M74 381h1M89 381h3M124 381h1M474 381h1M507 381h1M524 381h1M543 381h3M571 381h1M28 382h1M75 382h1M87 382h2M91 382h1M124 382h1M474 382h1M507 382h1M523 382h1M546 382h2M570 382h1M28 383h1M75 383h1M84 383h3M91 383h1M125 383h1M473 383h1M507 383h1M523 383h1M548 383h3M570 383h1M28 384h1M76 384h1M81 384h3M91 384h1M125 384h1M473 384h1M507 384h1M522 384h1M551 384h3M570 384h1M29 385h1M76 385h1M79 385h2M92 385h1M126 385h1M472 385h1M506 385h1M522 385h1M554 385h3M569 385h1M29 386h1M76 386h3M92 386h1M126 386h1M472 386h1M506 386h1M522 386h1M557 386h3M569 386h1M29 387h1M77 387h1M93 387h1M127 387h1M471 387h1M505 387h1M521 387h1M560 387h3M569 387h1M30 388h1M77 388h1M93 388h1M127 388h1M427 388h1M471 388h1M505 388h1M521 388h1M563 388h3M568 388h1M30 389h1M78 389h1M94 389h1M128 389h1M428 389h2M470 389h1M504 389h3M520 389h1M566 389h3M30 390h1M78 390h1M94 390h1M127 390h2M430 390h1M470 390h1M504 390h1M507 390h2M520 390h1M568 390h1M31 391h1M79 391h1M95 391h1M125 391h2M129 391h1M431 391h1M469 391h1M503 391h1M509 391h2M519 391h1M567 391h1M31 392h1M79 392h1M95 392h1M123 392h2M129 392h1M432 392h2M469 392h1M503 392h1M511 392h3M519 392h1M567 392h1M31 393h1M80 393h1M96 393h1M121 393h2M130 393h1M434 393h1M468 393h1M502 393h1M514 393h2M518 393h1M567 393h1M31 394h1M80 394h1M96 394h1M119 394h2M130 394h1M435 394h2M468 394h1M502 394h1M516 394h3M567 394h1M32 395h1M81 395h1M97 395h1M118 395h1M131 395h1M437 395h1M467 395h1M501 395h1M517 395h1M566 395h1M32 396h1M81 396h1M97 396h1M116 396h2M131 396h1M467 396h1M501 396h1M517 396h1M566 396h1M32 397h1M81 397h1M98 397h1M114 397h2M132 397h1M466 397h1M500 397h1M517 397h1M566 397h1M33 398h1M82 398h1M98 398h1M112 398h2M132 398h1M466 398h1M500 398h1M516 398h1M565 398h1M33 399h1M82 399h1M97 399h3M111 399h1M133 399h1M465 399h1M499 399h1M516 399h1M565 399h1M34 400h1M83 400h1M95 400h2M99 400h1M109 400h2M134 400h1M464 400h1M499 400h1M515 400h1M564 400h1M34 401h1M83 401h1M93 401h2M100 401h1M107 401h2M134 401h1M464 401h1M498 401h1M515 401h1M564 401h1M35 402h1M84 402h1M91 402h2M100 402h1M105 402h2M135 402h1M463 402h1M498 402h1M514 402h1M563 402h1M35 403h1M84 403h1M89 403h2M101 403h1M103 403h2M136 403h1M462 403h1M497 403h1M514 403h1M563 403h1M36 404h1M85 404h1M87 404h2M101 404h2M136 404h1M462 404h1M497 404h1M513 404h1M562 404h1M36 405h1M85 405h2M102 405h1M137 405h1M461 405h1M496 405h1M513 405h1M562 405h1M36 406h1M86 406h1M102 406h1M137 406h1M461 406h1M496 406h1M512 406h1M562 406h1M37 407h1M86 407h1M103 407h1M138 407h1M460 407h1M495 407h1M497 407h2M512 407h1M561 407h1M37 408h1M87 408h1M103 408h1M139 408h1M459 408h1M495 408h1M499 408h2M511 408h1M561 408h1M38 409h1M87 409h1M104 409h1M139 409h1M459 409h1M494 409h1M501 409h1M511 409h1M560 409h1M38 410h1M88 410h1M104 410h1M140 410h1M458 410h1M494 410h1M502 410h2M510 410h1M560 410h1M39 411h1M88 411h1M105 411h1M141 411h1M457 411h1M493 411h1M504 411h2M510 411h1M559 411h1M39 412h1M89 412h1M106 412h1M141 412h1M457 412h1M492 412h1M506 412h2M509 412h1M559 412h1M40 413h1M89 413h1M106 413h1M142 413h1M456 413h1M492 413h1M508 413h2M558 413h1M40 414h1M90 414h1M107 414h1M143 414h1M455 414h1M491 414h1M508 414h1M558 414h1M40 415h1M90 415h1M108 415h1M144 415h1M454 415h1M490 415h1M508 415h1M558 415h1M41 416h1M91 416h1M107 416h2M144 416h1M454 416h1M490 416h1M507 416h1M557 416h1M41 417h1M91 417h1M105 417h2M109 417h1M145 417h1M453 417h1M455 417h2M489 417h1M507 417h1M557 417h1M42 418h1M92 418h1M103 418h2M110 418h1M146 418h1M452 418h1M457 418h1M488 418h1M506 418h1M556 418h1M42 419h1M93 419h1M101 419h2M110 419h1M147 419h1M451 419h1M458 419h1M488 419h1M505 419h1M556 419h1M43 420h1M93 420h1M100 420h1M111 420h1M148 420h1M450 420h1M459 420h2M487 420h1M505 420h1M555 420h1M43 421h1M94 421h1M98 421h2M111 421h1M149 421h1M449 421h1M461 421h1M487 421h1M504 421h1M555 421h1M44 422h1M94 422h1M96 422h2M112 422h1M149 422h1M449 422h1M462 422h1M486 422h1M504 422h1M554 422h1M44 423h1M95 423h1M112 423h1M150 423h1M448 423h1M463 423h2M486 423h1M503 423h1M554 423h1M44 424h1M95 424h1M113 424h1M151 424h1M447 424h1M465 424h1M485 424h1M487 424h2M503 424h1M554 424h1M45 425h1M96 425h1M114 425h1M152 425h1M446 425h1M466 425h1M484 425h1M489 425h1M502 425h1M553 425h1M45 426h1M97 426h1M115 426h1M153 426h1M445 426h1M467 426h2M483 426h1M490 426h1M501 426h1M553 426h1M46 427h1M97 427h1M116 427h1M153 427h1M445 427h1M469 427h1M482 427h1M491 427h2M501 427h1M552 427h1M46 428h1M98 428h1M116 428h1M154 428h1M444 428h1M470 428h1M482 428h1M493 428h1M500 428h1M552 428h1M47 429h1M99 429h1M117 429h1M155 429h1M443 429h1M471 429h2M481 429h1M494 429h1M499 429h1M551 429h1M47 430h1M100 430h1M118 430h1M156 430h1M215 430h1M442 430h1M473 430h1M480 430h1M495 430h2M498 430h1M551 430h1M48 431h1M100 431h1M119 431h1M157 431h1M214 431h1M441 431h1M474 431h1M479 431h1M497 431h2M550 431h1M48 432h1M101 432h1M118 432h2M158 432h1M214 432h1M440 432h1M475 432h2M479 432h1M497 432h1M550 432h1M49 433h1M102 433h1M116 433h2M120 433h1M159 433h1M213 433h1M439 433h1M477 433h2M496 433h1M549 433h1M49 434h1M102 434h1M115 434h1M121 434h1M160 434h1M213 434h1M438 434h1M477 434h1M496 434h1M549 434h1M50 435h1M103 435h1M114 435h1M122 435h1M161 435h1M212 435h1M437 435h1M476 435h1M495 435h1M548 435h1M50 436h1M104 436h1M112 436h2M122 436h1M162 436h1M211 436h1M436 436h1M476 436h1M494 436h1M548 436h1M51 437h1M105 437h1M111 437h1M123 437h1M163 437h1M211 437h1M435 437h1M475 437h1M493 437h1M547 437h1M51 438h1M105 438h1M110 438h1M124 438h1M164 438h1M210 438h1M434 438h1M474 438h1M493 438h1M547 438h1M52 439h1M106 439h1M108 439h2M125 439h1M165 439h1M210 439h1M433 439h1M473 439h2M492 439h1M546 439h1M52 440h1M107 440h1M126 440h1M166 440h1M209 440h1M432 440h1M472 440h1M475 440h1M491 440h1M546 440h1M53 441h1M107 441h1M126 441h1M167 441h1M431 441h1M472 441h1M476 441h2M491 441h1M545 441h1M54 442h1M108 442h1M127 442h1M168 442h1M430 442h1M471 442h1M478 442h1M490 442h1M544 442h1M54 443h1M109 443h1M128 443h1M169 443h1M429 443h1M470 443h1M479 443h1M489 443h1M544 443h1M55 444h1M110 444h1M129 444h1M170 444h1M428 444h1M469 444h1M480 444h1M488 444h1M543 444h1M56 445h1M110 445h1M130 445h1M171 445h2M426 445h2M468 445h1M481 445h1M488 445h1M542 445h1M56 446h1M111 446h1M131 446h1M173 446h1M425 446h1M467 446h1M482 446h2M487 446h1M542 446h1M57 447h1M112 447h1M130 447h2M174 447h1M424 447h1M467 447h1M484 447h1M486 447h1M541 447h1M57 448h1M113 448h1M129 448h1M132 448h1M175 448h1M423 448h1M466 448h1M485 448h1M541 448h1M58 449h1M114 449h1M128 449h1M133 449h1M176 449h1M421 449h2M465 449h1M484 449h1M540 449h1M59 450h1M114 450h1M127 450h1M134 450h1M177 450h2M420 450h1M464 450h1M484 450h1M539 450h1M59 451h1M115 451h1M125 451h2M135 451h1M179 451h1M419 451h1M463 451h1M483 451h1M539 451h1M60 452h1M116 452h1M124 452h1M136 452h1M180 452h1M418 452h1M462 452h1M482 452h1M538 452h1M61 453h1M117 453h1M123 453h1M137 453h1M181 453h1M417 453h1M461 453h1M481 453h1M537 453h1M61 454h1M118 454h1M122 454h1M138 454h1M182 454h2M415 454h2M460 454h1M462 454h1M480 454h1M537 454h1M62 455h1M119 455h1M121 455h1M139 455h1M181 455h1M184 455h1M414 455h1M459 455h1M463 455h1M479 455h1M536 455h1M63 456h1M119 456h2M140 456h1M180 456h1M185 456h1M413 456h1M458 456h1M464 456h1M479 456h1M535 456h1M63 457h1M119 457h2M141 457h1M180 457h1M186 457h2M411 457h2M457 457h1M465 457h1M478 457h1M535 457h1M64 458h1M118 458h1M121 458h1M142 458h1M179 458h1M188 458h1M410 458h1M456 458h1M466 458h1M477 458h1M534 458h1M65 459h1M117 459h1M122 459h1M143 459h1M178 459h1M189 459h2M408 459h2M455 459h1M467 459h1M476 459h1M533 459h1M65 460h1M116 460h1M123 460h1M144 460h1M177 460h1M191 460h1M407 460h1M454 460h1M468 460h1M475 460h1M533 460h1M66 461h1M115 461h1M124 461h1M145 461h1M177 461h1M192 461h2M405 461h2M453 461h1M469 461h1M474 461h1M532 461h1M67 462h1M113 462h2M125 462h1M144 462h1M146 462h1M176 462h1M194 462h2M403 462h2M452 462h1M470 462h1M473 462h1M531 462h1M67 463h1M112 463h1M125 463h1M143 463h1M147 463h1M175 463h1M196 463h1M402 463h1M451 463h1M471 463h1M473 463h1M531 463h1M68 464h1M111 464h1M126 464h1M142 464h1M148 464h1M174 464h1M197 464h2M400 464h2M450 464h1M472 464h1M530 464h1M68 465h1M110 465h1M127 465h1M141 465h1M149 465h1M173 465h1M199 465h1M399 465h1M449 465h1M471 465h1M530 465h1M69 466h1M109 466h1M128 466h1M140 466h1M150 466h1M173 466h1M200 466h2M397 466h2M448 466h1M470 466h1M529 466h1M70 467h1M108 467h1M129 467h1M139 467h1M151 467h1M172 467h1M202 467h1M395 467h2M446 467h2M469 467h1M528 467h1M71 468h1M107 468h1M130 468h1M138 468h1M152 468h2M171 468h1M203 468h2M393 468h2M445 468h1M447 468h1M468 468h1M527 468h1M71 469h1M106 469h1M131 469h1M137 469h1M154 469h1M170 469h1M205 469h2M391 469h2M444 469h1M448 469h1M467 469h1M527 469h1M72 470h1M105 470h1M132 470h1M136 470h1M155 470h1M169 470h1M207 470h2M389 470h2M443 470h1M449 470h1M466 470h1M526 470h1M73 471h1M103 471h2M133 471h1M135 471h1M156 471h1M169 471h1M209 471h2M387 471h2M442 471h1M450 471h1M465 471h1M525 471h1M74 472h1M102 472h1M134 472h1M157 472h1M168 472h1M211 472h2M385 472h2M440 472h2M451 472h1M464 472h1M524 472h1M74 473h1M101 473h1M135 473h1M158 473h2M167 473h1M213 473h2M383 473h2M439 473h1M452 473h1M462 473h2M524 473h1M75 474h1M100 474h1M136 474h2M159 474h2M166 474h1M215 474h2M381 474h2M438 474h1M452 474h1M461 474h1M523 474h1M76 475h1M99 475h1M138 475h1M158 475h1M161 475h1M166 475h1M217 475h2M379 475h2M437 475h1M453 475h1M460 475h1M522 475h1M77 476h1M98 476h1M139 476h1M157 476h1M162 476h2M165 476h1M219 476h3M377 476h2M435 476h2M454 476h1M459 476h1M521 476h1M78 477h1M97 477h1M140 477h1M157 477h1M164 477h1M222 477h2M375 477h2M434 477h1M455 477h1M458 477h1M520 477h1M79 478h1M96 478h1M141 478h1M156 478h1M165 478h1M224 478h2M373 478h2M433 478h1M456 478h2M519 478h1M80 479h1M95 479h1M142 479h2M155 479h1M166 479h2M226 479h3M370 479h3M431 479h2M455 479h3M518 479h1M81 480h1M94 480h1M144 480h1M154 480h1M168 480h1M229 480h3M367 480h3M430 480h1M432 480h1M454 480h1M458 480h1M517 480h1M82 481h1M92 481h2M145 481h1M153 481h1M169 481h1M232 481h3M364 481h3M429 481h1M433 481h1M453 481h1M459 481h1M516 481h1M83 482h1M91 482h1M146 482h1M152 482h1M170 482h1M235 482h3M361 482h3M427 482h2M433 482h1M452 482h1M460 482h1M515 482h1M84 483h1M90 483h1M147 483h1M152 483h1M171 483h2M238 483h3M358 483h1M360 483h1M426 483h1M434 483h1M451 483h1M461 483h1M514 483h1M84 484h1M89 484h1M148 484h1M151 484h1M173 484h1M241 484h4M354 484h4M359 484h1M425 484h1M435 484h1M449 484h2M462 484h1M514 484h1M85 485h1M88 485h1M149 485h2M174 485h1M245 485h3M351 485h3M359 485h1M424 485h1M436 485h1M448 485h1M462 485h1M513 485h1M86 486h2M151 486h1M175 486h2M248 486h3M348 486h3M360 486h1M422 486h2M436 486h1M447 486h1M463 486h1M512 486h1M87 487h1M152 487h1M174 487h1M177 487h2M251 487h3M345 487h3M360 487h1M420 487h2M437 487h1M446 487h1M464 487h1M511 487h1M87 488h1M153 488h2M174 488h1M179 488h2M254 488h4M341 488h4M360 488h1M418 488h2M438 488h1M444 488h2M465 488h1M511 488h1M88 489h1M155 489h1M173 489h1M181 489h1M258 489h5M336 489h5M361 489h1M417 489h1M439 489h1M443 489h1M466 489h1M510 489h1M89 490h1M156 490h1M172 490h1M182 490h2M261 490h1M263 490h6M329 490h7M361 490h1M415 490h2M439 490h1M442 490h1M467 490h1M509 490h1M90 491h1M157 491h2M171 491h1M184 491h1M261 491h1M269 491h7M323 491h6M361 491h1M414 491h1M416 491h1M440 491h2M468 491h1M508 491h1M91 492h1M159 492h1M171 492h1M185 492h2M261 492h1M276 492h7M316 492h7M362 492h1M412 492h2M417 492h1M439 492h1M469 492h1M507 492h1M92 493h1M160 493h2M170 493h1M187 493h1M260 493h1M283 493h33M362 493h1M411 493h1M417 493h1M437 493h2M470 493h1M506 493h1M93 494h1M162 494h1M169 494h1M188 494h2M260 494h1M362 494h1M409 494h2M418 494h1M436 494h1M471 494h1M505 494h1M94 495h1M163 495h1M168 495h1M190 495h2M260 495h1M363 495h1M407 495h2M418 495h1M435 495h1M472 495h1M504 495h1M95 496h1M164 496h2M168 496h1M192 496h2M260 496h1M363 496h1M405 496h2M419 496h1M433 496h2M472 496h1M503 496h1M96 497h1M166 497h2M191 497h1M194 497h2M259 497h1M363 497h1M403 497h2M420 497h1M432 497h1M473 497h1M502 497h1M97 498h1M167 498h2M191 498h1M196 498h2M259 498h1M364 498h1M401 498h2M420 498h1M430 498h2M474 498h1M501 498h1M98 499h1M169 499h1M190 499h1M198 499h2M259 499h1M364 499h1M399 499h2M421 499h1M429 499h1M475 499h1M500 499h1M99 500h1M170 500h1M190 500h1M200 500h2M259 500h1M364 500h1M397 500h3M421 500h1M428 500h1M476 500h1M499 500h1M100 501h1M171 501h2M189 501h1M202 501h2M259 501h1M365 501h1M395 501h2M399 501h1M422 501h1M426 501h2M477 501h1M498 501h1M101 502h1M173 502h1M188 502h1M204 502h2M258 502h1M365 502h1M393 502h2M400 502h1M422 502h1M425 502h1M478 502h1M497 502h1M102 503h1M174 503h2M188 503h1M206 503h2M258 503h1M365 503h1M391 503h2M400 503h1M423 503h2M479 503h1M496 503h1M103 504h1M176 504h2M187 504h1M208 504h2M258 504h1M366 504h1M389 504h2M401 504h1M421 504h2M480 504h1M495 504h1M104 505h1M178 505h2M187 505h1M209 505h3M258 505h1M366 505h1M387 505h2M401 505h1M419 505h2M481 505h1M494 505h1M105 506h1M180 506h1M186 506h1M209 506h1M212 506h2M258 506h1M366 506h1M385 506h2M402 506h1M418 506h1M481 506h1M493 506h1M106 507h1M181 507h2M186 507h1M208 507h1M214 507h3M257 507h1M367 507h1M381 507h4M402 507h1M416 507h2M482 507h1M492 507h1M107 508h1M183 508h3M208 508h1M217 508h4M257 508h1M367 508h1M377 508h5M403 508h1M414 508h2M483 508h1M491 508h1M108 509h1M185 509h2M207 509h1M221 509h4M257 509h1M367 509h1M374 509h3M381 509h1M403 509h1M412 509h2M484 509h1M490 509h1M109 510h1M187 510h1M207 510h1M225 510h2M257 510h1M368 510h1M372 510h2M382 510h1M404 510h1M410 510h2M485 510h1M489 510h1M110 511h1M188 511h2M206 511h1M227 511h2M256 511h1M368 511h1M370 511h2M382 511h1M404 511h1M408 511h2M486 511h3M111 512h2M190 512h2M206 512h1M228 512h4M256 512h1M366 512h4M383 512h1M405 512h3M486 512h1M113 513h1M192 513h2M206 513h1M228 513h1M232 513h4M256 513h1M362 513h4M383 513h1M404 513h2M485 513h1M114 514h1M194 514h3M205 514h1M227 514h1M236 514h4M256 514h1M359 514h3M383 514h1M402 514h2M483 514h2M115 515h2M197 515h2M205 515h1M227 515h1M240 515h4M256 515h1M355 515h4M362 515h1M384 515h1M400 515h2M482 515h1M117 516h1M199 516h2M204 516h1M226 516h1M244 516h3M255 516h1M351 516h4M362 516h1M384 516h1M398 516h2M481 516h1M118 517h1M201 517h2M204 517h1M226 517h1M246 517h5M255 517h1M347 517h4M363 517h1M384 517h1M395 517h3M480 517h1M119 518h1M203 518h2M226 518h1M246 518h1M251 518h5M343 518h4M363 518h1M385 518h1M393 518h2M479 518h1M120 519h1M205 519h2M225 519h1M246 519h1M255 519h4M339 519h5M363 519h1M385 519h1M391 519h2M478 519h1M121 520h1M207 520h2M225 520h1M245 520h1M259 520h6M334 520h5M343 520h1M364 520h1M386 520h1M389 520h2M477 520h1M122 521h1M209 521h3M225 521h1M245 521h1M265 521h7M326 521h8M343 521h1M364 521h1M386 521h3M476 521h1M123 522h1M212 522h2M224 522h1M245 522h1M266 522h1M272 522h16M310 522h16M344 522h1M364 522h1M384 522h3M475 522h1M124 523h1M214 523h3M224 523h1M245 523h1M266 523h1M285 523h1M288 523h22M323 523h1M344 523h1M364 523h1M382 523h2M474 523h1M125 524h1M217 524h3M223 524h1M244 524h1M266 524h1M285 524h1M304 524h1M323 524h1M344 524h1M365 524h1M379 524h3M472 524h2M126 525h2M220 525h4M244 525h1M265 525h1M285 525h1M304 525h1M323 525h1M344 525h1M365 525h1M375 525h4M471 525h1M128 526h1M223 526h4M244 526h1M265 526h1M285 526h1M304 526h1M324 526h1M345 526h1M365 526h1M372 526h3M470 526h1M129 527h1M223 527h1M227 527h2M244 527h1M265 527h1M285 527h1M304 527h1M324 527h1M345 527h1M366 527h1M369 527h3M468 527h2M130 528h2M222 528h1M229 528h3M244 528h1M265 528h1M285 528h1M304 528h1M324 528h1M345 528h1M366 528h3M467 528h1M132 529h1M222 529h1M232 529h4M243 529h1M265 529h1M285 529h1M304 529h1M324 529h1M345 529h1M363 529h4M466 529h1M133 530h2M222 530h1M236 530h4M243 530h1M265 530h1M284 530h1M304 530h1M324 530h1M345 530h1M359 530h4M464 530h2M135 531h1M221 531h1M240 531h4M265 531h1M284 531h1M304 531h1M324 531h1M346 531h1M354 531h5M462 531h2M136 532h2M221 532h1M244 532h4M264 532h1M284 532h1M304 532h1M324 532h1M346 532h1M350 532h4M461 532h1M138 533h2M221 533h1M248 533h6M264 533h1M284 533h1M304 533h1M325 533h1M344 533h6M459 533h2M140 534h1M220 534h1M254 534h6M264 534h1M284 534h1M304 534h1M325 534h1M338 534h6M346 534h1M458 534h1M141 535h2M220 535h1M260 535h5M284 535h1M304 535h1M325 535h1M334 535h4M346 535h1M456 535h2M143 536h1M220 536h1M264 536h6M284 536h1M304 536h1M325 536h1M328 536h6M346 536h1M455 536h1M144 537h2M219 537h1M270 537h17M304 537h1M311 537h17M347 537h1M453 537h2M146 538h1M219 538h1M287 538h24M347 538h1M452 538h1M147 539h2M219 539h1M347 539h1M450 539h2M149 540h1M218 540h1M347 540h1M449 540h1M150 541h2M218 541h1M347 541h1M447 541h2M152 542h1M218 542h1M347 542h1M445 542h2M153 543h2M217 543h1M348 543h1M444 543h1M155 544h2M217 544h1M348 544h1M442 544h2M157 545h1M217 545h1M348 545h1M441 545h1M158 546h2M216 546h1M348 546h1M439 546h2M160 547h2M216 547h1M348 547h1M437 547h2M162 548h2M215 548h1M349 548h1M435 548h2M164 549h2M215 549h1M349 549h1M433 549h2M166 550h2M215 550h1M349 550h1M431 550h2M168 551h2M214 551h1M349 551h1M429 551h2M170 552h2M214 552h1M349 552h1M427 552h2M172 553h2M214 553h1M350 553h1M425 553h2M174 554h3M213 554h1M350 554h1M422 554h3M177 555h2M213 555h1M350 555h1M420 555h2M179 556h2M213 556h1M350 556h1M418 556h2M181 557h2M212 557h1M350 557h1M416 557h2M183 558h3M212 558h1M350 558h1M413 558h3M186 559h2M212 559h1M351 559h1M411 559h2M188 560h2M211 560h1M351 560h1M409 560h2M190 561h2M211 561h1M351 561h1M407 561h2M192 562h3M211 562h1M351 562h1M404 562h3M195 563h2M210 563h1M351 563h1M402 563h2M197 564h2M210 564h1M352 564h1M400 564h2M199 565h2M210 565h1M352 565h1M398 565h2M201 566h3M209 566h1M352 566h1M395 566h3M204 567h3M209 567h1M352 567h1M391 567h4M207 568h4M352 568h1M388 568h3M211 569h3M353 569h1M385 569h3M214 570h3M353 570h1M382 570h3M217 571h3M353 571h1M379 571h3M220 572h3M353 572h1M376 572h3M223 573h3M353 573h1M372 573h4M226 574h4M353 574h1M369 574h3M230 575h4M354 575h1M365 575h4M234 576h4M354 576h1M361 576h4M238 577h5M354 577h1M356 577h5M243 578h5M351 578h5M248 579h7M343 579h8M255 580h10M333 580h10M265 581h10M323 581h10M275 582h10M313 582h10M285 583h28"/>
<text class="h" transform="translate(95,354) scale(0.88,1)" x="0.57" y="0" fill="#ff0000">1</text>
<text class="h" transform="translate(140,440) scale(0.88,1)" x="0.57" y="0" fill="#ffff00">2</text>
<text class="h" transform="translate(213,495) scale(0.88,1)" x="0.57" y="0" fill="#00ff00">3</text>
<text class="h" transform="translate(311,513) scale(0.88,1)" x="0.57" y="0" fill="#0000ff">4</text>
<text class="h" transform="translate(421,475) scale(0.88,1)" x="0.57" y="0" fill="#ff0000">5</text>
<text class="h" transform="translate(498,370) scale(0.88,1)" x="0.57" y="0" fill="#ffff00">6</text>
<text class="h" transform="translate(503,254) scale(0.88,1)" x="0.57" y="0" fill="#00ff00">7</text>
<text class="h" transform="translate(458,168) scale(0.88,1)" x="0.57" y="0" fill="#0000ff">8</text>
<text class="h" transform="translate(385,113) scale(0.88,1)" x="0.57" y="0" fill="#ff0000">9</text>
<text class="h" transform="translate(287,95) scale(0.88,1)" x="-3.98 5.11" y="0" fill="#ffff00">10</text>
<text class="h" transform="translate(177,133) scale(0.88,1)" x="-3.98 5.11" y="0" fill="#00ff00">11</text>
<text class="h" transform="translate(100,238) scale(0.88,1)" x="-3.98 5.11" y="0" fill="#0000ff">12</text>
<text class="o" transform="translate(334,132) scale(0.45,1)" x="-7.78 13.33" y="0" fill="#ffff00" font-size="24.7">MC</text>
<text class="o" transform="translate(119,307) scale(0.32,1)" x="-17.19 3.12 21.88" y="0" fill="#ff0000" font-size="24.7">Asc</text>
</svg><div id="tx">
<span class="t" style="left:605.5px;top:7px;color:#ffffff">Astrolog 5.40</span>
<span class="t" style="left:605.5px;top:17px;color:#bfbfbf">&quot;Anonymous&quot;</span>
<span class="t" style="left:605.5px;top:27px;color:#bfbfbf">Thu December 9, 1976</span>
<span class="t" style="left:605.5px;top:37px;color:#bfbfbf"> 3:23pm (ST +8:00 GMT)</span>
<span class="t" style="left:605.5px;top:47px;color:#bfbfbf">&quot;Taiwan&quot;</span>
<span class="t" style="left:605.5px;top:57px;color:#bfbfbf">120°40E 20°09N</span>
<span class="t" style="left:605.5px;top:67px;color:#bfbfbf">Placidus houses.</span>
<span class="t" style="left:605.5px;top:77px;color:#bfbfbf">Tropical, Geocentric.</span>
<span class="t" style="left:605.5px;top:87px;color:#bfbfbf">Julian Day = 2443121.8076</span>
<span class="t" style="left:605.5px;top:107px;color:#ff0000"> 1st house:</span>
<span class="t" style="left:677.5px;top:107px;color:#ffff00">18Tau38</span>
<span class="t" style="left:605.5px;top:117px;color:#ffff00"> 2nd house:</span>
<span class="t" style="left:677.5px;top:117px;color:#00ff00">16Gem38</span>
<span class="t" style="left:605.5px;top:127px;color:#00ff00"> 3rd house:</span>
<span class="t" style="left:677.5px;top:127px;color:#0000ff">11Can33</span>
<span class="t" style="left:605.5px;top:137px;color:#0000ff"> 4th house:</span>
<span class="t" style="left:677.5px;top:137px;color:#ff0000"> 7Leo11</span>
<span class="t" style="left:605.5px;top:147px;color:#ff0000"> 5th house:</span>
<span class="t" style="left:677.5px;top:147px;color:#ffff00"> 6Vir44</span>
<span class="t" style="left:605.5px;top:157px;color:#ffff00"> 6th house:</span>
<span class="t" style="left:677.5px;top:157px;color:#00ff00">11Lib39</span>
<span class="t" style="left:605.5px;top:167px;color:#00ff00"> 7th house:</span>
<span class="t" style="left:677.5px;top:167px;color:#0000ff">18Sco38</span>
<span class="t" style="left:605.5px;top:177px;color:#0000ff"> 8th house:</span>
<span class="t" style="left:677.5px;top:177px;color:#ff0000">16Sag38</span>
<span class="t" style="left:605.5px;top:187px;color:#ff0000"> 9th house:</span>
<span class="t" style="left:677.5px;top:187px;color:#ffff00">11Cap33</span>
<span class="t" style="left:605.5px;top:197px;color:#ffff00">10th house:</span>
<span class="t" style="left:677.5px;top:197px;color:#00ff00"> 7Aqu11</span>
<span class="t" style="left:605.5px;top:207px;color:#00ff00">11th house:</span>
<span class="t" style="left:677.5px;top:207px;color:#0000ff"> 6Pis44</span>
<span class="t" style="left:605.5px;top:217px;color:#0000ff">12th house:</span>
<span class="t" style="left:677.5px;top:217px;color:#ff0000">11Ari39</span>
<span class="t" style="left:605.5px;top:237px;color:#ff0000"> Sun:</span>
<span class="t" style="left:641.5px;top:237px;color:#ff0000">17Sag21</span>
<span class="t" style="left:695.5px;top:237px;color:#bfbfbf">- 0°00'</span>
<span class="t" style="left:605.5px;top:247px;color:#0000ff">Moon:</span>
<span class="t" style="left:641.5px;top:247px;color:#0000ff">15Can58</span>
<span class="t" style="left:695.5px;top:247px;color:#bfbfbf">- 4°55'</span>
<span class="t" style="left:605.5px;top:257px;color:#00ff00">Merc:</span>
<span class="t" style="left:641.5px;top:257px;color:#ffff00"> 4Cap18</span>
<span class="t" style="left:695.5px;top:257px;color:#bfbfbf">- 2°20'</span>
<span class="t" style="left:605.5px;top:267px;color:#00ff00">Venu:</span>
<span class="t" style="left:641.5px;top:267px;color:#ffff00">29Cap43</span>
<span class="t" style="left:695.5px;top:267px;color:#bfbfbf">- 2°17'</span>
<span class="t" style="left:605.5px;top:277px;color:#ff0000">Mars:</span>
<span class="t" style="left:641.5px;top:277px;color:#ff0000">13Sag13</span>
<span class="t" style="left:695.5px;top:277px;color:#bfbfbf">- 0°24'</span>
<span class="t" style="left:605.5px;top:287px;color:#ff0000">Jupi:</span>
<span class="t" style="left:641.5px;top:287px;color:#ffff00">23Tau25</span>
<span class="t" style="left:683.5px;top:287px;color:#ffffff">R</span>
<span class="t" style="left:695.5px;top:287px;color:#bfbfbf">- 1°04'</span>
<span class="t" style="left:605.5px;top:297px;color:#ffff00">Satu:</span>
<span class="t" style="left:641.5px;top:297px;color:#ff0000">16Leo46</span>
<span class="t" style="left:683.5px;top:297px;color:#ffffff">R</span>
<span class="t" style="left:695.5px;top:297px;color:#bfbfbf">+ 0°49'</span>
<span class="t" style="left:605.5px;top:307px;color:#00ff00">Uran:</span>
<span class="t" style="left:641.5px;top:307px;color:#0000ff"> 9Sco50</span>
<span class="t" style="left:695.5px;top:307px;color:#bfbfbf">+ 0°26'</span>
<span class="t" style="left:605.5px;top:317px;color:#0000ff">Nept:</span>
<span class="t" style="left:641.5px;top:317px;color:#ff0000">13Sag49</span>
<span class="t" style="left:695.5px;top:317px;color:#bfbfbf">+ 1°27'</span>
<span class="t" style="left:605.5px;top:327px;color:#0000ff">Plut:</span>
<span class="t" style="left:641.5px;top:327px;color:#00ff00">13Lib47</span>
<span class="t" style="left:695.5px;top:327px;color:#bfbfbf">+16°45'</span>
<span class="t" style="left:605.5px;top:337px;color:#007f7f">Node:</span>
<span class="t" style="left:641.5px;top:337px;color:#0000ff"> 1Sco05</span>
<span class="t" style="left:683.5px;top:337px;color:#ffffff">R</span>
<span class="t" style="left:695.5px;top:337px;color:#bfbfbf">+ 0°00'</span>
<span class="t" style="left:605.5px;top:357px;color:#bfbfbf">Fire: 4, Earth: 4,</span>
<span class="t" style="left:605.5px;top:367px;color:#bfbfbf">Air : 2, Water: 3</span>
<span class="t" style="left:605.5px;top:377px;color:#bfbfbf">Car: 4, Fix: 6, Mut: 3</span>
<span class="t" style="left:605.5px;top:387px;color:#bfbfbf">Yang: 6, Yin: 7</span>
<span class="t" style="left:605.5px;top:397px;color:#bfbfbf">M: 5, N: 6, A: 2, D: 9</span>
<span class="t" style="left:605.5px;top:407px;color:#bfbfbf">Ang: 4, Suc: 2, Cad: 5</span>
<span class="t" style="left:605.5px;top:417px;color:#bfbfbf">Learn: 4, Share: 9</span>
</div></div></body></html>
